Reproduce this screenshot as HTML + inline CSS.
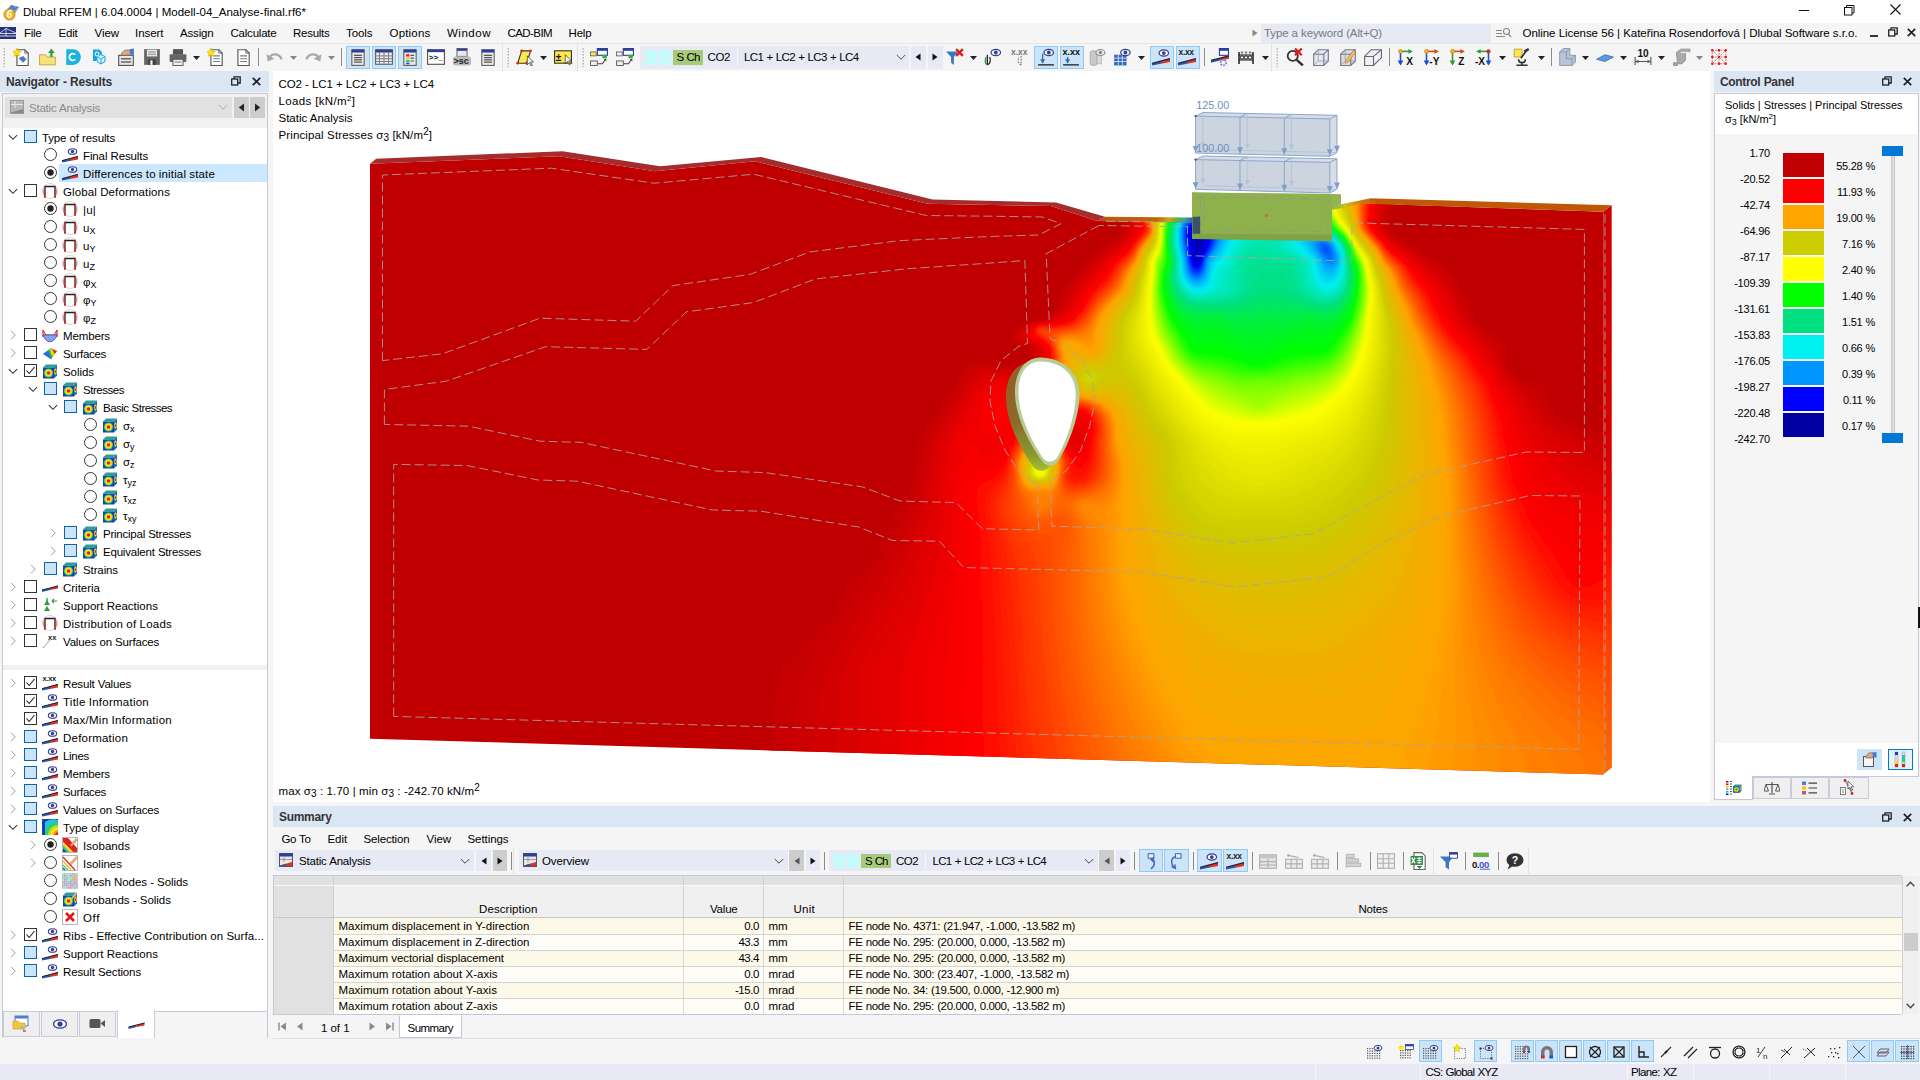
<!DOCTYPE html>
<html lang="en"><head><meta charset="utf-8"><title>Dlubal RFEM</title>
<style>
html,body{margin:0;padding:0;background:#f5f5f5;overflow:hidden}
body{width:1920px;height:1080px;position:relative;font-family:"Liberation Sans",sans-serif;font-size:11.5px;color:#000}
.t{position:absolute;white-space:pre}
.r{position:absolute;display:block}
</style></head>
<body>
<div class="r" style="left:0px;top:0px;width:1920px;height:23px;background:#fff;"></div>
<svg class="r" style="left:2px;top:2px;" width="19" height="19" viewBox="0 0 19 19"><path d="M4 9 L9 3 L17 5 L13 11Z" fill="#4a78c8"/><path d="M6 7L15 9M8 5L13 11M11 3.5L16 8" stroke="#c8d8f0" stroke-width="0.6"/><circle cx="7.5" cy="12.5" r="5.6" fill="#f2b61a" stroke="#b07a00" stroke-width="0.7"/><text x="4.6" y="16.3" font-size="10" font-weight="700" font-style="italic" font-family="Liberation Sans, sans-serif" fill="#fff">6</text></svg>
<span class="t" style="left:23px;top:3.5px;height:16px;line-height:16px;letter-spacing:0.018px;word-spacing:-0.018px;">Dlubal RFEM | 6.04.0004 | Modell-04_Analyse-final.rf6*</span>
<svg class="r" style="left:1799px;top:10px;" width="11" height="2" viewBox="0 0 11 2"><path d="M0 0.5H10" stroke="#111" stroke-width="1"/></svg>
<svg class="r" style="left:1844px;top:5px;" width="11" height="11" viewBox="0 0 11 11"><rect x="0.5" y="2.5" width="7.5" height="7.5" fill="none" stroke="#111"/><path d="M2.5 2.5V0.5H10V8H8" fill="none" stroke="#111"/></svg>
<svg class="r" style="left:1890px;top:4px;" width="11" height="11" viewBox="0 0 11 11"><path d="M0.5 0.5L10.5 10.5M10.5 0.5L0.5 10.5" stroke="#111" stroke-width="1.1"/></svg>
<div class="r" style="left:0px;top:23px;width:1920px;height:21px;background:#f5f5f5;"></div>
<div class="r" style="left:0px;top:43px;width:1920px;height:1px;background:#e6e6e6;"></div>
<svg class="r" style="left:0px;top:27px;" width="16" height="12" viewBox="0 0 16 12"><rect width="16" height="12" fill="#24327e"/><path d="M0 6.5H16M0 9H16" stroke="#fff" stroke-width="0.8"/><path d="M0 6L6 1.5L16 6M6 1V9" stroke="#fff" stroke-width="0.7" fill="none"/></svg>
<span class="t" style="left:24px;top:25.0px;height:16px;line-height:16px;letter-spacing:-0.258px;">File</span>
<span class="t" style="left:58.5px;top:25.0px;height:16px;line-height:16px;letter-spacing:-0.207px;">Edit</span>
<span class="t" style="left:94.5px;top:25.0px;height:16px;line-height:16px;letter-spacing:-0.055px;">View</span>
<span class="t" style="left:135px;top:25.0px;height:16px;line-height:16px;letter-spacing:-0.044px;">Insert</span>
<span class="t" style="left:180px;top:25.0px;height:16px;line-height:16px;letter-spacing:-0.172px;">Assign</span>
<span class="t" style="left:230.5px;top:25.0px;height:16px;line-height:16px;letter-spacing:-0.217px;">Calculate</span>
<span class="t" style="left:293px;top:25.0px;height:16px;line-height:16px;letter-spacing:-0.266px;">Results</span>
<span class="t" style="left:346px;top:25.0px;height:16px;line-height:16px;letter-spacing:-0.072px;">Tools</span>
<span class="t" style="left:389.5px;top:25.0px;height:16px;line-height:16px;letter-spacing:0.194px;">Options</span>
<span class="t" style="left:447px;top:25.0px;height:16px;line-height:16px;letter-spacing:0.516px;">Window</span>
<span class="t" style="left:507.5px;top:25.0px;height:16px;line-height:16px;letter-spacing:-0.580px;">CAD-BIM</span>
<span class="t" style="left:568.5px;top:25.0px;height:16px;line-height:16px;letter-spacing:-0.164px;">Help</span>
<svg class="r" style="left:1252px;top:29px;" width="6" height="8" viewBox="0 0 6 8"><path d="M0.5 0.5V7.5L5.5 4Z" fill="#888"/></svg>
<div class="r" style="left:1261px;top:24px;width:230px;height:19px;background:#e7e9f4;"></div>
<span class="t" style="left:1264px;top:25.0px;height:16px;line-height:16px;color:#7a7a7a;letter-spacing:-0.131px;word-spacing:0.131px;">Type a keyword (Alt+Q)</span>
<svg class="r" style="left:1496px;top:27px;" width="16" height="12" viewBox="0 0 16 12"><path d="M0 3.5H6M0 6.5H6M0 9.5H9" stroke="#888" stroke-width="1"/><circle cx="10.5" cy="4.5" r="3" fill="none" stroke="#888" stroke-width="1.1"/><path d="M12.5 7L15 10" stroke="#888" stroke-width="1.2"/></svg>
<span class="t" style="left:1522.5px;top:25.0px;height:16px;line-height:16px;letter-spacing:-0.048px;word-spacing:0.048px;">Online License 56 | Kateřina Rosendorfová | Dlubal Software s.r.o.</span>
<svg class="r" style="left:1870px;top:35px;" width="8" height="3" viewBox="0 0 8 3"><path d="M0 1H8" stroke="#222" stroke-width="1.8"/></svg>
<svg class="r" style="left:1888px;top:27px;" width="10" height="10" viewBox="0 0 10 10"><rect x="0.7" y="3" width="6" height="6" fill="none" stroke="#222" stroke-width="1.3"/><path d="M3 3V0.8H9.2V7H7" fill="none" stroke="#222" stroke-width="1.3"/></svg>
<svg class="r" style="left:1907px;top:28px;" width="9" height="9" viewBox="0 0 9 9"><path d="M0.8 0.8L8.2 8.2M8.2 0.8L0.8 8.2" stroke="#222" stroke-width="1.7"/></svg>
<div class="r" style="left:0px;top:44px;width:1920px;height:27px;background:#f5f5f5;"></div>
<svg class="r" style="left:3px;top:47px;" width="3" height="20" viewBox="0 0 3 20"><rect x="0.5" y="1" width="1.5" height="1.5" fill="#b5b5b5"/><rect x="0.5" y="4" width="1.5" height="1.5" fill="#b5b5b5"/><rect x="0.5" y="7" width="1.5" height="1.5" fill="#b5b5b5"/><rect x="0.5" y="10" width="1.5" height="1.5" fill="#b5b5b5"/><rect x="0.5" y="13" width="1.5" height="1.5" fill="#b5b5b5"/><rect x="0.5" y="16" width="1.5" height="1.5" fill="#b5b5b5"/><rect x="0.5" y="19" width="1.5" height="1.5" fill="#b5b5b5"/></svg>
<svg class="r" style="left:13.0px;top:48.0px;" width="18" height="18" viewBox="0 0 16 16"><path d="M3.5 1.5H10.5L13.5 4.5V15.5H3.5Z" fill="#fff" stroke="#555" stroke-width="1"/><path d="M10.5 1.5V4.5H13.5" fill="none" stroke="#555" stroke-width="0.8"/><path d="M3.5 0 L4.6 2.6 L7.5 3 L5.3 4.8 L6 7.5 L3.5 6 L1 7.5 L1.7 4.8 L-0.5 3 L2.4 2.6Z" fill="#ffe600" stroke="#c9a800" stroke-width="0.4"/><path d="M5 9L9 7L12 10L9 13Z" fill="#4a78c8"/></svg>
<svg class="r" style="left:39.0px;top:48.0px;" width="18" height="18" viewBox="0 0 16 16"><path d="M0.5 6H6L7.5 8H14.5V15H0.5Z" fill="#f6e27a" stroke="#b89a2a" stroke-width="0.7"/><path d="M11 8V3" stroke="#2e9c3e" stroke-width="2"/><path d="M8 4.5L11 0.5L14 4.5Z" fill="#2e9c3e"/></svg>
<svg class="r" style="left:64.0px;top:48.0px;" width="18" height="18" viewBox="0 0 16 16"><path d="M2 1H8A7 7 0 0 1 8 15H2Z" fill="#18b4e0"/><path d="M10 6A3 3 0 1 0 10 10" fill="none" stroke="#fff" stroke-width="1.6"/></svg>
<svg class="r" style="left:91.0px;top:49.0px;" width="18" height="16" viewBox="0 0 16 16"><path d="M1 0.5H7A5 5 0 0 1 10 5L4 12H1Z" fill="#18a4e0"/><path d="M9 5.5L13 7.5V12.5L9 15L5 12.5V7.5Z" fill="#d8f2fa" stroke="#18a4e0" stroke-width="1"/><path d="M5 7.5L9 10L13 7.5M9 10V15" stroke="#18a4e0" stroke-width="0.9" fill="none"/><circle cx="5" cy="5" r="2" fill="none" stroke="#fff"/></svg>
<svg class="r" style="left:117.0px;top:48.0px;" width="18" height="18" viewBox="0 0 16 16"><rect x="1.5" y="6.5" width="13" height="9" fill="#e8e8e8" stroke="#555"/><path d="M3.5 9.5H12.5M3.5 12.5H12.5" stroke="#666" stroke-width="1.4"/><path d="M4 5C6 1 10 1 13 3L11 6.5H4Z" fill="#d8a888" stroke="#86563a" stroke-width="0.6"/><path d="M11 1L15 0.5V6H12Z" fill="#4a78c8"/></svg>
<svg class="r" style="left:143.0px;top:48.0px;" width="18" height="18" viewBox="0 0 16 16"><path d="M1 1H15V15H1Z" fill="#666"/><rect x="3.5" y="1.5" width="9" height="6" fill="#e8e8e8"/><path d="M4.5 3.5H11.5M4.5 5.5H11.5" stroke="#888"/><rect x="4.5" y="10" width="7" height="5" fill="#444"/><rect x="6.5" y="11" width="2" height="4" fill="#eee"/></svg>
<svg class="r" style="left:169.0px;top:48.0px;" width="18" height="18" viewBox="0 0 16 16"><rect x="3.5" y="1" width="9" height="5" fill="#555"/><rect x="0.5" y="5.5" width="15" height="7" rx="1" fill="#666"/><rect x="3.5" y="10" width="9" height="5.5" fill="#eee" stroke="#555" stroke-width="0.8"/><path d="M5 12.5H11" stroke="#888"/></svg>
<svg class="r" style="left:192.5px;top:55.5px;" width="7" height="4" viewBox="0 0 7 4"><path d="M0 0H7L3.5 4Z" fill="#222"/></svg>
<svg class="r" style="left:207.0px;top:48.0px;" width="18" height="18" viewBox="0 0 16 16"><path d="M3.5 1.5H10.5L13.5 4.5V15.5H3.5Z" fill="#fff" stroke="#555" stroke-width="1"/><path d="M10.5 1.5V4.5H13.5" fill="none" stroke="#555" stroke-width="0.8"/><path d="M5.5 7H11.5M5.5 9.5H11.5M5.5 12H11.5" stroke="#777" stroke-width="1"/><path d="M3.5 0 L4.6 2.6 L7.5 3 L5.3 4.8 L6 7.5 L3.5 6 L1 7.5 L1.7 4.8 L-0.5 3 L2.4 2.6Z" fill="#ffe600" stroke="#c9a800" stroke-width="0.4"/></svg>
<svg class="r" style="left:234.0px;top:48.0px;" width="18" height="18" viewBox="0 0 16 16"><path d="M3.5 1.5H10.5L13.5 4.5V15.5H3.5Z" fill="#fff" stroke="#555" stroke-width="1"/><path d="M10.5 1.5V4.5H13.5" fill="none" stroke="#555" stroke-width="0.8"/><path d="M5.5 7H11.5M5.5 9.5H11.5M5.5 12H11.5" stroke="#777" stroke-width="1"/></svg>
<div class="r" style="left:258px;top:48px;width:1px;height:18px;background:#8a8a8a;"></div>
<svg class="r" style="left:266.0px;top:48.0px;" width="18" height="18" viewBox="0 0 16 16"><path d="M2.5 10C4 4.5 11 4 14 10" fill="none" stroke="#a8a8a8" stroke-width="2"/><path d="M0.5 5.5L1.5 12L7.5 9.5Z" fill="#a8a8a8"/></svg>
<svg class="r" style="left:289.5px;top:55.5px;" width="7" height="4" viewBox="0 0 7 4"><path d="M0 0H7L3.5 4Z" fill="#888"/></svg>
<svg class="r" style="left:304.0px;top:48.0px;" width="18" height="18" viewBox="0 0 16 16"><path d="M13.5 10C12 4.5 5 4 2 10" fill="none" stroke="#a8a8a8" stroke-width="2"/><path d="M15.5 5.5L14.5 12L8.5 9.5Z" fill="#a8a8a8"/></svg>
<svg class="r" style="left:327.5px;top:55.5px;" width="7" height="4" viewBox="0 0 7 4"><path d="M0 0H7L3.5 4Z" fill="#888"/></svg>
<div class="r" style="left:341px;top:48px;width:1px;height:18px;background:#8a8a8a;"></div>
<div class="r" style="left:346px;top:46px;width:24px;height:23px;background:#cce4f7;border:1px solid #90c8f6;box-sizing:border-box;"></div>
<div class="r" style="left:372px;top:46px;width:24px;height:23px;background:#cce4f7;border:1px solid #90c8f6;box-sizing:border-box;"></div>
<div class="r" style="left:398px;top:46px;width:24px;height:23px;background:#cce4f7;border:1px solid #90c8f6;box-sizing:border-box;"></div>
<svg class="r" style="left:349.0px;top:48.0px;" width="18" height="18" viewBox="0 0 16 16"><rect x="2.5" y="1.5" width="11" height="14" fill="#e8e8e8" stroke="#666"/><rect x="2.5" y="1.5" width="11" height="2.5" fill="#2b3f9e"/><path d="M4.5 6.5H11.5M4.5 8.5H11.5M4.5 10.5H11.5M4.5 12.5H11.5" stroke="#555" stroke-width="1"/></svg>
<svg class="r" style="left:375.0px;top:48.0px;" width="18" height="18" viewBox="0 0 16 16"><rect x="0.5" y="1.5" width="15" height="13" fill="#e8e8e8" stroke="#666"/><rect x="0.5" y="1.5" width="15" height="2.5" fill="#2b3f9e"/><path d="M0.5 7H15.5M0.5 9.5H15.5M0.5 12H15.5M4 4V14.5M8 4V14.5M12 4V14.5" stroke="#777" stroke-width="0.8"/></svg>
<svg class="r" style="left:401.0px;top:48.0px;" width="18" height="18" viewBox="0 0 16 16"><rect x="2.5" y="1.5" width="11" height="14" fill="#e8e8e8" stroke="#666"/><rect x="2.5" y="1.5" width="11" height="2.5" fill="#2b3f9e"/><rect x="4.5" y="5.5" width="3" height="2" fill="#e2231a"/><rect x="4.5" y="8" width="3" height="2" fill="#ffd21a"/><rect x="4.5" y="10.5" width="3" height="2" fill="#2fd06a"/><rect x="4.5" y="13" width="3" height="1.5" fill="#2a55b8"/><path d="M8.5 6.5H11.5M8.5 9H11.5M8.5 11.5H11.5" stroke="#555"/></svg>
<svg class="r" style="left:427.0px;top:48.0px;" width="18" height="18" viewBox="0 0 16 16"><rect x="0.5" y="1.5" width="15" height="13" fill="#fff" stroke="#555"/><rect x="0.5" y="1.5" width="15" height="2.2" fill="#2b3f9e"/><text x="1.5" y="10.5" font-size="7" font-weight="700" font-family="Liberation Mono, monospace" fill="#111">&gt;&gt;_</text></svg>
<svg class="r" style="left:453.0px;top:48.0px;" width="18" height="18" viewBox="0 0 16 16"><rect x="3.5" y="0.5" width="9" height="7" fill="#e8e8e8" stroke="#777"/><rect x="3.5" y="0.5" width="9" height="2" fill="#2b3f9e"/><rect x="0" y="7.5" width="16" height="8" rx="2" fill="#bbb"/><text x="0.5" y="14.5" font-size="8" font-weight="700" font-family="Liberation Sans, sans-serif" fill="#222">&gt;sc</text></svg>
<svg class="r" style="left:479.0px;top:48.0px;" width="18" height="18" viewBox="0 0 16 16"><rect x="2.5" y="1.5" width="11" height="14" fill="#e8e8e8" stroke="#666"/><rect x="2.5" y="1.5" width="11" height="2.5" fill="#2b3f9e"/><path d="M4.5 6.5H11.5M4.5 8.5H11.5M4.5 10.5H11.5M4.5 12.5H11.5" stroke="#555" stroke-width="1"/></svg>
<div class="r" style="left:502px;top:44px;width:1px;height:27px;background:#e2e2e2;"></div>
<svg class="r" style="left:507px;top:47px;" width="3" height="20" viewBox="0 0 3 20"><rect x="0.5" y="1" width="1.5" height="1.5" fill="#b5b5b5"/><rect x="0.5" y="4" width="1.5" height="1.5" fill="#b5b5b5"/><rect x="0.5" y="7" width="1.5" height="1.5" fill="#b5b5b5"/><rect x="0.5" y="10" width="1.5" height="1.5" fill="#b5b5b5"/><rect x="0.5" y="13" width="1.5" height="1.5" fill="#b5b5b5"/><rect x="0.5" y="16" width="1.5" height="1.5" fill="#b5b5b5"/><rect x="0.5" y="19" width="1.5" height="1.5" fill="#b5b5b5"/></svg>
<svg class="r" style="left:516.0px;top:48.0px;" width="18" height="18" viewBox="0 0 16 16"><path d="M5 2.5L13 2.5L9.5 13.5L1.5 13.5Z" fill="#ffe94a" stroke="#333" stroke-width="1"/><circle cx="5" cy="2.5" r="1.2" fill="#d22"/><circle cx="13" cy="2.5" r="1.2" fill="#d22"/><circle cx="9.5" cy="13.5" r="1.2" fill="#d22"/><circle cx="1.5" cy="13.5" r="1.2" fill="#d22"/><path d="M10 7V15L12 13L13.5 16L14.5 15.5L13 12.5H15.5Z" fill="#fff" stroke="#222" stroke-width="0.6"/></svg>
<svg class="r" style="left:539.5px;top:55.5px;" width="7" height="4" viewBox="0 0 7 4"><path d="M0 0H7L3.5 4Z" fill="#222"/></svg>
<svg class="r" style="left:554.0px;top:48.0px;" width="18" height="18" viewBox="0 0 16 16"><rect x="0.5" y="2.5" width="15" height="11" fill="#ffe94a" stroke="#333" stroke-width="1"/><text x="1.5" y="11.5" font-size="9" font-weight="700" font-family="Liberation Sans, sans-serif" fill="#111">±</text><path d="M10 6V14L12 12L13.5 15L14.5 14.5L13 11.5H15.5Z" fill="#fff" stroke="#222" stroke-width="0.6"/></svg>
<div class="r" style="left:577px;top:44px;width:1px;height:27px;background:#e2e2e2;"></div>
<svg class="r" style="left:582px;top:47px;" width="3" height="20" viewBox="0 0 3 20"><rect x="0.5" y="1" width="1.5" height="1.5" fill="#b5b5b5"/><rect x="0.5" y="4" width="1.5" height="1.5" fill="#b5b5b5"/><rect x="0.5" y="7" width="1.5" height="1.5" fill="#b5b5b5"/><rect x="0.5" y="10" width="1.5" height="1.5" fill="#b5b5b5"/><rect x="0.5" y="13" width="1.5" height="1.5" fill="#b5b5b5"/><rect x="0.5" y="16" width="1.5" height="1.5" fill="#b5b5b5"/><rect x="0.5" y="19" width="1.5" height="1.5" fill="#b5b5b5"/></svg>
<svg class="r" style="left:590.0px;top:48.0px;" width="18" height="18" viewBox="0 0 16 16"><rect x="6.5" y="0.5" width="9" height="6" fill="#fff" stroke="#2b3f9e"/><rect x="6.5" y="0.5" width="9" height="2" fill="#2b3f9e"/><rect x="11" y="6" width="4" height="3" fill="#2fb04a"/><rect x="0.5" y="3.5" width="5" height="3.5" fill="#ffe94a" stroke="#555" stroke-width="0.7"/><rect x="0.5" y="11.5" width="6" height="4" fill="#eee" stroke="#555" stroke-width="0.8"/><path d="M7 14H11L14 10" fill="none" stroke="#444" stroke-width="1"/><path d="M12 9.5H14.5V12Z" fill="#444"/></svg>
<svg class="r" style="left:616.0px;top:48.0px;" width="18" height="18" viewBox="0 0 16 16"><rect x="6.5" y="0.5" width="9" height="6" fill="#fff" stroke="#2b3f9e"/><rect x="6.5" y="0.5" width="9" height="2" fill="#2b3f9e"/><rect x="11" y="6" width="4" height="3" fill="#2fb04a"/><rect x="0.5" y="3.5" width="5" height="3.5" fill="#eee" stroke="#555" stroke-width="0.7"/><rect x="0.5" y="11.5" width="6" height="4" fill="#eee" stroke="#555" stroke-width="0.8"/><path d="M7 14H11L14 10" fill="none" stroke="#444" stroke-width="1"/><path d="M12 9.5H14.5V12Z" fill="#444"/></svg>
<div class="r" style="left:640px;top:46px;width:269px;height:23px;background:#e7e9f4;"></div>
<div class="r" style="left:645px;top:50px;width:12px;height:15px;background:#c5fbfb;"></div>
<div class="r" style="left:659px;top:50px;width:12px;height:15px;background:#c5fbfb;"></div>
<div class="r" style="left:673px;top:50px;width:30px;height:15px;background:#a9ca7a;"></div>
<span class="t" style="left:676.5px;top:49.0px;height:16px;line-height:16px;letter-spacing:-0.859px;word-spacing:0.859px;">S Ch</span>
<span class="t" style="left:707.5px;top:49.0px;height:16px;line-height:16px;letter-spacing:-0.385px;">CO2</span>
<div class="r" style="left:737px;top:49px;width:1px;height:17px;background:#f8f8fc;"></div>
<span class="t" style="left:744px;top:49.0px;height:16px;line-height:16px;letter-spacing:-0.615px;word-spacing:0.615px;">LC1 + LC2 + LC3 + LC4</span>
<svg class="r" style="left:896px;top:54px;" width="10" height="7" viewBox="0 0 10 7"><path d="M0.8 1L5 5.2L9.2 1" fill="none" stroke="#555" stroke-width="1"/></svg>
<div class="r" style="left:910.5px;top:46px;width:15.5px;height:23px;background:#e7e9f4;"></div>
<div class="r" style="left:927.5px;top:46px;width:15px;height:23px;background:#e7e9f4;"></div>
<svg class="r" style="left:915px;top:53px;" width="6" height="8" viewBox="0 0 6 8"><path d="M5.5 0.5V7.5L0.5 4Z" fill="#111"/></svg>
<svg class="r" style="left:932px;top:53px;" width="6" height="8" viewBox="0 0 6 8"><path d="M0.5 0.5V7.5L5.5 4Z" fill="#111"/></svg>
<svg class="r" style="left:946.0px;top:48.0px;" width="18" height="18" viewBox="0 0 16 16"><path d="M0 3H11L7 8V15L4.5 13V8Z" fill="#3a78c8"/><path d="M9 1L15 7M15 1L9 7" stroke="#e01818" stroke-width="2"/></svg>
<svg class="r" style="left:969.5px;top:55.5px;" width="7" height="4" viewBox="0 0 7 4"><path d="M0 0H7L3.5 4Z" fill="#222"/></svg>
<svg class="r" style="left:984.0px;top:48.0px;" width="18" height="18" viewBox="0 0 16 16"><path d="M3 6V15M3 15C6 14 6 10 5 8" fill="none" stroke="#222" stroke-width="1.1"/><path d="M2 8C0.5 11 1 14 3 15" fill="none" stroke="#2e9c3e" stroke-width="1.3"/><ellipse cx="10.5" cy="4" rx="4.2" ry="2.8" fill="#fff" stroke="#33408f" stroke-width="1.1"/><circle cx="10.5" cy="4" r="1.7" fill="#33408f"/></svg>
<svg class="r" style="left:1011.0px;top:48.0px;" width="18" height="18" viewBox="0 0 16 16"><text x="0" y="6" font-size="7.5" font-weight="700" font-family="Liberation Sans, sans-serif" fill="#777">x.xx</text><path d="M9 7V15M9 15C6 14 6 10 7 8" fill="none" stroke="#777" stroke-width="1" stroke-dasharray="1.5 1"/></svg>
<div class="r" style="left:1034px;top:46px;width:24px;height:23px;background:#cce4f7;border:1px solid #90c8f6;box-sizing:border-box;"></div>
<div class="r" style="left:1059.5px;top:46px;width:24px;height:23px;background:#cce4f7;border:1px solid #90c8f6;box-sizing:border-box;"></div>
<svg class="r" style="left:1037.0px;top:48.0px;" width="18" height="18" viewBox="0 0 16 16"><path d="M1 15H15" stroke="#222" stroke-width="1.2"/><path d="M5 5V13" stroke="#3a68b8" stroke-width="1.2"/><path d="M2.8 10L5 14L7.2 10Z" fill="#3a68b8"/><ellipse cx="10.5" cy="4" rx="4.2" ry="2.8" fill="#fff" stroke="#33408f" stroke-width="1.1"/><circle cx="10.5" cy="4" r="1.7" fill="#33408f"/></svg>
<svg class="r" style="left:1062.0px;top:48.0px;" width="18" height="18" viewBox="0 0 16 16"><path d="M1 15H15" stroke="#222" stroke-width="1.2"/><path d="M5 8V13" stroke="#3a68b8" stroke-width="1.2"/><path d="M2.8 10L5 14L7.2 10Z" fill="#3a68b8"/><text x="0.5" y="6.5" font-size="8" font-weight="700" font-family="Liberation Sans, sans-serif" fill="#111">x.xx</text></svg>
<svg class="r" style="left:1087.5px;top:48.0px;" width="18" height="18" viewBox="0 0 16 16"><path d="M2 4C2 2 8 2 8 4V14C8 16 2 16 2 14Z" fill="#c8c8c8" stroke="#999" stroke-width="0.6"/><path d="M8 5H12V14H8Z" fill="#d8d8d8" stroke="#aaa" stroke-width="0.6"/><ellipse cx="11" cy="4" rx="4" ry="2.7" fill="#eee" stroke="#888"/><circle cx="11" cy="4" r="1.6" fill="#888"/></svg>
<svg class="r" style="left:1113.0px;top:48.0px;" width="18" height="18" viewBox="0 0 16 16"><rect x="1" y="6" width="11" height="9.5" fill="#3a68b8"/><path d="M1 9H12M1 12H12M4.7 6V15.5M8.3 6V15.5" stroke="#cfe0f8" stroke-width="0.8"/><ellipse cx="11" cy="4" rx="4.2" ry="2.8" fill="#fff" stroke="#33408f" stroke-width="1.1"/><circle cx="11" cy="4" r="1.7" fill="#33408f"/></svg>
<svg class="r" style="left:1137.5px;top:55.5px;" width="7" height="4" viewBox="0 0 7 4"><path d="M0 0H7L3.5 4Z" fill="#222"/></svg>
<div class="r" style="left:1149.5px;top:46px;width:24px;height:23px;background:#cce4f7;border:1px solid #90c8f6;box-sizing:border-box;"></div>
<div class="r" style="left:1175.5px;top:46px;width:24px;height:23px;background:#cce4f7;border:1px solid #90c8f6;box-sizing:border-box;"></div>
<svg class="r" style="left:1152.0px;top:48.0px;" width="18" height="18" viewBox="0 0 16 16"><path d="M0 13.5 L8 11.5 L8 14 L0 15.5Z" fill="#2a55b8"/><path d="M8 11.5 L16 9 L16 12.5 L8 14Z" fill="#d8322a"/><path d="M0 13.6L16 9.4" stroke="#222" stroke-width="1"/><ellipse cx="10.5" cy="4.5" rx="4.2" ry="2.8" fill="#fff" stroke="#33408f" stroke-width="1.1"/><circle cx="10.5" cy="4.5" r="1.7" fill="#33408f"/></svg>
<svg class="r" style="left:1178.0px;top:48.0px;" width="18" height="18" viewBox="0 0 16 16"><path d="M0 13.5 L8 11.5 L8 14 L0 15.5Z" fill="#2a55b8"/><path d="M8 11.5 L16 9 L16 12.5 L8 14Z" fill="#d8322a"/><path d="M0 13.6L16 9.4" stroke="#222" stroke-width="1"/><text x="0.5" y="6" font-size="7.5" font-weight="700" font-family="Liberation Sans, sans-serif" fill="#222" letter-spacing="-0.3">x.xx</text></svg>
<div class="r" style="left:1203.5px;top:48px;width:1px;height:18px;background:#8a8a8a;"></div>
<svg class="r" style="left:1211.0px;top:48.0px;" width="18" height="18" viewBox="0 0 16 16"><path d="M0 11 L8 9 L8 11 L0 13Z" fill="#2a55b8"/><path d="M8 9 L16 6.5 L16 9.5 L8 11Z" fill="#d8322a"/><path d="M0 11L16 7" stroke="#222" stroke-width="1"/><rect x="7.5" y="0.5" width="8" height="6" fill="#fff" stroke="#2b3f9e"/><rect x="7.5" y="0.5" width="8" height="2" fill="#2b3f9e"/><circle cx="11" cy="13" r="2.4" fill="none" stroke="#5a7ae0" stroke-width="1.5" stroke-dasharray="1.4 1"/></svg>
<svg class="r" style="left:1237.0px;top:48.0px;" width="18" height="18" viewBox="-1 0 18 16"><path d="M1 3V15M15 3V15" stroke="#111" stroke-width="1.4"/><path d="M1 6H15M1 11H15" stroke="#111" stroke-width="1"/><circle cx="4" cy="8.5" r="1.7" fill="#fff" stroke="#111"/><circle cx="8" cy="8.5" r="1.7" fill="#fff" stroke="#111"/><circle cx="12" cy="8.5" r="1.7" fill="#fff" stroke="#111"/><circle cx="4" cy="3.5" r="1.3" fill="#888"/><circle cx="8" cy="3.5" r="1.3" fill="#888"/><circle cx="12" cy="3.5" r="1.3" fill="#888"/></svg>
<svg class="r" style="left:1261.5px;top:55.5px;" width="7" height="4" viewBox="0 0 7 4"><path d="M0 0H7L3.5 4Z" fill="#222"/></svg>
<div class="r" style="left:1271px;top:44px;width:1px;height:27px;background:#e2e2e2;"></div>
<svg class="r" style="left:1276px;top:47px;" width="3" height="20" viewBox="0 0 3 20"><rect x="0.5" y="1" width="1.5" height="1.5" fill="#b5b5b5"/><rect x="0.5" y="4" width="1.5" height="1.5" fill="#b5b5b5"/><rect x="0.5" y="7" width="1.5" height="1.5" fill="#b5b5b5"/><rect x="0.5" y="10" width="1.5" height="1.5" fill="#b5b5b5"/><rect x="0.5" y="13" width="1.5" height="1.5" fill="#b5b5b5"/><rect x="0.5" y="16" width="1.5" height="1.5" fill="#b5b5b5"/><rect x="0.5" y="19" width="1.5" height="1.5" fill="#b5b5b5"/></svg>
<svg class="r" style="left:1286.0px;top:48.0px;" width="18" height="18" viewBox="0 0 16 16"><circle cx="6" cy="7" r="4.5" fill="none" stroke="#333" stroke-width="1.6"/><path d="M9.5 10.5L15 15.5" stroke="#333" stroke-width="2.2"/><path d="M8 0.5L14 6.5M14 0.5L8 6.5" stroke="#e01818" stroke-width="2"/></svg>
<svg class="r" style="left:1312.0px;top:48.0px;" width="18" height="18" viewBox="0 0 16 16"><path d="M1.5 5.5H10.5V15.5H1.5ZM1.5 5.5L5.5 1.5H14.5V11.5L10.5 15.5M10.5 5.5L14.5 1.5" fill="#e4e8f2" stroke="#778" stroke-width="1"/><path d="M5.5 1.5V11.5H14.5M5.5 11.5L1.5 15.5" fill="none" stroke="#99a" stroke-width="0.7"/></svg>
<svg class="r" style="left:1338.5px;top:48.0px;" width="18" height="18" viewBox="0 0 16 16"><path d="M1.5 5.5H10.5V15.5H1.5ZM1.5 5.5L5.5 1.5H14.5V11.5L10.5 15.5M10.5 5.5L14.5 1.5" fill="#dcdcdc" stroke="#778" stroke-width="1"/><path d="M5.5 1.5V11.5H14.5M5.5 11.5L1.5 15.5" fill="none" stroke="#99a" stroke-width="0.7"/><path d="M6 11L13 2L15 3.5L8 12.5L5.5 13.5Z" fill="#f2c24a" stroke="#a67" stroke-width="0.5"/></svg>
<svg class="r" style="left:1363.5px;top:48.0px;" width="18" height="18" viewBox="0 0 16 16"><path d="M0.5 7.5H8.5V15.5H0.5ZM0.5 7.5L6.5 1.5H15.5L8.5 7.5M15.5 1.5V8.5L8.5 15.5" fill="#eef0f6" stroke="#667" stroke-width="1"/></svg>
<div class="r" style="left:1389px;top:48px;width:1px;height:18px;background:#8a8a8a;"></div>
<svg class="r" style="left:1396.0px;top:48.0px;" width="18" height="18" viewBox="0 0 16 16"><path d="M4 2V14" stroke="#1f4fc8" stroke-width="1.4"/><path d="M1.5 11L4 15.5L6.5 11Z" fill="#1f4fc8"/><path d="M4 3H13" stroke="#2e9c3e" stroke-width="1.4"/><path d="M11 0.8L15 3L11 5.2Z" fill="#2e9c3e"/><circle cx="4" cy="3" r="1.8" fill="#ffb21a" stroke="#a60" stroke-width="0.4"/><text x="9" y="15.5" font-size="9" font-weight="700" font-family="Liberation Sans, sans-serif" fill="#111">X</text></svg>
<svg class="r" style="left:1422.0px;top:48.0px;" width="18" height="18" viewBox="0 0 16 16"><path d="M4 2V14" stroke="#1f4fc8" stroke-width="1.4"/><path d="M1.5 11L4 15.5L6.5 11Z" fill="#1f4fc8"/><path d="M4 3H13" stroke="#d8481a" stroke-width="1.4"/><path d="M11 0.8L15 3L11 5.2Z" fill="#d8481a"/><circle cx="4" cy="3" r="1.8" fill="#ffb21a" stroke="#a60" stroke-width="0.4"/><text x="6.5" y="15.5" font-size="9" font-weight="700" font-family="Liberation Sans, sans-serif" fill="#111">-Y</text></svg>
<svg class="r" style="left:1448.0px;top:48.0px;" width="18" height="18" viewBox="0 0 16 16"><path d="M4 2V14" stroke="#2e9c3e" stroke-width="1.4"/><path d="M1.5 11L4 15.5L6.5 11Z" fill="#2e9c3e"/><path d="M4 3H13" stroke="#d8481a" stroke-width="1.4"/><path d="M11 0.8L15 3L11 5.2Z" fill="#d8481a"/><circle cx="4" cy="3" r="1.8" fill="#ffb21a" stroke="#a60" stroke-width="0.4"/><text x="9" y="15.5" font-size="9" font-weight="700" font-family="Liberation Sans, sans-serif" fill="#111">Z</text></svg>
<svg class="r" style="left:1475.0px;top:48.0px;" width="18" height="18" viewBox="0 0 16 16"><path d="M12 2V14" stroke="#1f4fc8" stroke-width="1.4"/><path d="M9.5 11L12 15.5L14.5 11Z" fill="#1f4fc8"/><path d="M12 3H3" stroke="#2e9c3e" stroke-width="1.4"/><path d="M5 0.8L1 3L5 5.2Z" fill="#2e9c3e"/><circle cx="12" cy="3" r="1.8" fill="#d22"/><text x="0" y="15.5" font-size="9" font-weight="700" font-family="Liberation Sans, sans-serif" fill="#111">-X</text></svg>
<svg class="r" style="left:1499.0px;top:55.5px;" width="7" height="4" viewBox="0 0 7 4"><path d="M0 0H7L3.5 4Z" fill="#222"/></svg>
<svg class="r" style="left:1513.0px;top:48.0px;" width="18" height="18" viewBox="0 0 16 16"><rect x="1" y="1" width="7" height="7" fill="#ffe94a" stroke="#998a2a" stroke-width="0.6"/><path d="M13 1L7 9M5 10C5 14 11 14 11 10M3 15.5H13M8 13V15" fill="none" stroke="#333" stroke-width="1.5"/><path d="M10 3L14 1" stroke="#333" stroke-width="2"/></svg>
<svg class="r" style="left:1537.5px;top:55.5px;" width="7" height="4" viewBox="0 0 7 4"><path d="M0 0H7L3.5 4Z" fill="#222"/></svg>
<div class="r" style="left:1550.5px;top:48px;width:1px;height:18px;background:#8a8a8a;"></div>
<svg class="r" style="left:1557.5px;top:48.0px;" width="18" height="18" viewBox="0 0 16 16"><path d="M1.5 3.5L4.5 0.5H10.5V6.5H15.5V12.5L12.5 15.5H1.5Z" fill="#b8c4d8" stroke="#8894a8" stroke-width="0.8"/><path d="M1.5 3.5H7.5V9.5H12.5V15.5M7.5 3.5L10.5 0.5M12.5 9.5L15.5 6.5" fill="none" stroke="#8894a8" stroke-width="0.8"/></svg>
<svg class="r" style="left:1582.0px;top:55.5px;" width="7" height="4" viewBox="0 0 7 4"><path d="M0 0H7L3.5 4Z" fill="#222"/></svg>
<svg class="r" style="left:1596.0px;top:48.0px;" width="18" height="18" viewBox="0 0 16 16"><path d="M0.5 10L8 6L15.5 8L8 12Z" fill="#5a9ae0" stroke="#2a5aa0" stroke-width="0.6"/></svg>
<svg class="r" style="left:1620.0px;top:55.5px;" width="7" height="4" viewBox="0 0 7 4"><path d="M0 0H7L3.5 4Z" fill="#222"/></svg>
<svg class="r" style="left:1633.5px;top:48.0px;" width="18" height="18" viewBox="0 0 16 16"><text x="3" y="8" font-size="9" font-weight="700" font-family="Liberation Sans, sans-serif" fill="#111">10</text><path d="M1 8V15M15 8V15" stroke="#555"/><path d="M1 12H15" stroke="#555" stroke-width="0.9"/><path d="M1 12l3-1.5v3zM15 12l-3-1.5v3z" fill="#555"/></svg>
<svg class="r" style="left:1658.0px;top:55.5px;" width="7" height="4" viewBox="0 0 7 4"><path d="M0 0H7L3.5 4Z" fill="#222"/></svg>
<svg class="r" style="left:1672.5px;top:48.0px;" width="18" height="18" viewBox="0 0 16 16"><path d="M3 4L7 1H15V4H11V11L8 14H4V15.5H0.5V13H4Z" fill="#aaa" stroke="#777" stroke-width="0.6"/><path d="M7 4H15" stroke="#eee" stroke-width="1"/></svg>
<svg class="r" style="left:1696px;top:55.5px;" width="7" height="4" viewBox="0 0 7 4"><path d="M0 0H7L3.5 4Z" fill="#888"/></svg>
<svg class="r" style="left:1710.0px;top:48.0px;" width="18" height="18" viewBox="0 0 16 16"><path d="M2 2H14V14H2ZM2 8H14M8 2V14M2 2L14 14M14 2L2 14" fill="none" stroke="#c44" stroke-width="0.7" stroke-dasharray="1.5 1"/><circle cx="2" cy="2" r="1.1" fill="#e01818"/><circle cx="2" cy="8" r="1.1" fill="#e01818"/><circle cx="2" cy="14" r="1.1" fill="#e01818"/><circle cx="8" cy="2" r="1.1" fill="#e01818"/><circle cx="8" cy="8" r="1.1" fill="#e01818"/><circle cx="8" cy="14" r="1.1" fill="#e01818"/><circle cx="14" cy="2" r="1.1" fill="#e01818"/><circle cx="14" cy="8" r="1.1" fill="#e01818"/><circle cx="14" cy="14" r="1.1" fill="#e01818"/></svg>
<div class="r" style="left:0px;top:71px;width:270px;height:970px;background:#f5f5f5;"></div>
<div class="r" style="left:0px;top:71px;width:269px;height:21px;background:#dbe6f4;"></div>
<span class="t" style="left:6px;top:73.5px;height:16px;line-height:16px;font-size:12px;font-weight:700;color:#333;letter-spacing:-0.198px;word-spacing:0.198px;">Navigator - Results</span>
<svg class="r" style="left:231px;top:76px;" width="10" height="10" viewBox="0 0 10 10"><rect x="0.7" y="3" width="6" height="6" fill="none" stroke="#222" stroke-width="1.3"/><path d="M3 3V0.8H9.2V7H7" fill="none" stroke="#222" stroke-width="1.3"/></svg>
<svg class="r" style="left:252px;top:77px;" width="9" height="9" viewBox="0 0 9 9"><path d="M0.8 0.8L8.2 8.2M8.2 0.8L0.8 8.2" stroke="#222" stroke-width="1.7"/></svg>
<div class="r" style="left:2px;top:93px;width:266px;height:945px;background:#fff;border:1px solid #c5c7d9;box-sizing:border-box;"></div>
<div class="r" style="left:3px;top:94px;width:264px;height:34px;background:#f1f1f1;"></div>
<div class="r" style="left:5px;top:97px;width:227px;height:21px;background:#e1e1e1;"></div>
<div class="r" style="left:234px;top:97px;width:15px;height:21px;background:#cdcdcd;"></div>
<div class="r" style="left:250px;top:97px;width:15px;height:21px;background:#cdcdcd;"></div>
<svg class="r" style="left:238px;top:103px;" width="7" height="9" viewBox="0 0 7 9"><path d="M6 0.5V8.5L0.8 4.5Z" fill="#222"/></svg>
<svg class="r" style="left:254px;top:103px;" width="7" height="9" viewBox="0 0 7 9"><path d="M1 0.5V8.5L6.2 4.5Z" fill="#222"/></svg>
<svg class="r" style="left:218px;top:104px;" width="10" height="7" viewBox="0 0 10 7"><path d="M0.8 1L5 5.2L9.2 1" fill="none" stroke="#aaa" stroke-width="1"/></svg>
<svg class="r" style="left:10px;top:100px;" width="14" height="14" viewBox="0 0 14 14"><rect x="0.5" y="0.5" width="13" height="13" fill="#b8b8b8" stroke="#999"/><path d="M1 4.5H13M5 1V8" stroke="#e8e8e8" stroke-width="1"/><path d="M1 12.5L13 9V13H1Z" fill="#888"/></svg>
<span class="t" style="left:29px;top:99.5px;height:16px;line-height:16px;color:#8a8a8a;letter-spacing:-0.225px;word-spacing:0.225px;">Static Analysis</span>
<div class="r" style="left:3px;top:665px;width:264px;height:5px;background:#f1f1f1;"></div>
<svg class="r" style="left:7px;top:131px;" width="12" height="12" viewBox="0 0 16 16"><path d="M2.5 5.5 L8 11 L13.5 5.5" fill="none" stroke="#333" stroke-width="1.4"/></svg>
<svg class="r" style="left:24px;top:130px;" width="13" height="13" viewBox="0 0 13 13"><rect x="0.5" y="0.5" width="12" height="12" fill="#cce4f7" stroke="#0a64ad" stroke-width="1"/></svg>
<span class="t" style="left:42px;top:130.0px;height:16px;line-height:16px;letter-spacing:-0.138px;word-spacing:0.138px;">Type of results</span>
<svg class="r" style="left:44px;top:148px;" width="13" height="13" viewBox="0 0 13 13"><circle cx="6.5" cy="6.5" r="6" fill="#fff" stroke="#333" stroke-width="1"/></svg>
<svg class="r" style="left:62px;top:147px;" width="16" height="16" viewBox="0 0 16 16"><path d="M0 13.5 L8 11.5 L8 14 L0 15.5Z" fill="#2a55b8"/><path d="M8 11.5 L16 9 L16 12.5 L8 14Z" fill="#d8322a"/><path d="M0 13.6L16 9.4" stroke="#222" stroke-width="1"/><ellipse cx="10.5" cy="4.5" rx="4.2" ry="2.8" fill="#fff" stroke="#33408f" stroke-width="1.1"/><circle cx="10.5" cy="4.5" r="1.7" fill="#33408f"/></svg>
<span class="t" style="left:83px;top:148.0px;height:16px;line-height:16px;letter-spacing:-0.122px;word-spacing:0.122px;">Final Results</span>
<div class="r" style="left:59px;top:164px;width:208px;height:18px;background:#cce8ff;"></div>
<svg class="r" style="left:44px;top:166px;" width="13" height="13" viewBox="0 0 13 13"><circle cx="6.5" cy="6.5" r="6" fill="#fff" stroke="#333" stroke-width="1"/><circle cx="6.5" cy="6.5" r="3.2" fill="#222"/></svg>
<svg class="r" style="left:62px;top:165px;" width="16" height="16" viewBox="0 0 16 16"><path d="M0 13.5 L8 11.5 L8 14 L0 15.5Z" fill="#2a55b8"/><path d="M8 11.5 L16 9 L16 12.5 L8 14Z" fill="#d8322a"/><path d="M0 13.6L16 9.4" stroke="#222" stroke-width="1"/><ellipse cx="10.5" cy="4.5" rx="4.2" ry="2.8" fill="#fff" stroke="#33408f" stroke-width="1.1"/><circle cx="10.5" cy="4.5" r="1.7" fill="#33408f"/></svg>
<span class="t" style="left:83px;top:166.0px;height:16px;line-height:16px;letter-spacing:0.149px;word-spacing:-0.149px;">Differences to initial state</span>
<svg class="r" style="left:7px;top:185px;" width="12" height="12" viewBox="0 0 16 16"><path d="M2.5 5.5 L8 11 L13.5 5.5" fill="none" stroke="#333" stroke-width="1.4"/></svg>
<svg class="r" style="left:24px;top:184px;" width="13" height="13" viewBox="0 0 13 13"><rect x="0.5" y="0.5" width="12" height="12" fill="#fff" stroke="#333" stroke-width="1"/></svg>
<svg class="r" style="left:42px;top:183px;" width="16" height="16" viewBox="0 0 16 16"><ellipse cx="8" cy="8" rx="7.5" ry="7.5" fill="none" stroke="#bbb" stroke-width="0.6"/><path d="M3 14V3.5H13V14" fill="none" stroke="#222" stroke-width="1.3"/><path d="M3 14c-1.5-4-1.5-7 0-10.5M13 14c1.5-4 1.5-7 0-10.5" fill="none" stroke="#d22" stroke-width="1"/><circle cx="3" cy="14" r="1" fill="#d22"/><circle cx="13" cy="14" r="1" fill="#d22"/></svg>
<span class="t" style="left:63px;top:184.0px;height:16px;line-height:16px;letter-spacing:0.121px;word-spacing:-0.121px;">Global Deformations</span>
<svg class="r" style="left:44px;top:202px;" width="13" height="13" viewBox="0 0 13 13"><circle cx="6.5" cy="6.5" r="6" fill="#fff" stroke="#333" stroke-width="1"/><circle cx="6.5" cy="6.5" r="3.2" fill="#222"/></svg>
<svg class="r" style="left:62px;top:201px;" width="16" height="16" viewBox="0 0 16 16"><ellipse cx="8" cy="8" rx="7.5" ry="7.5" fill="none" stroke="#bbb" stroke-width="0.6"/><path d="M3 14V3.5H13V14" fill="none" stroke="#222" stroke-width="1.3"/><path d="M3 14c-1.5-4-1.5-7 0-10.5M13 14c1.5-4 1.5-7 0-10.5" fill="none" stroke="#d22" stroke-width="1"/><circle cx="3" cy="14" r="1" fill="#d22"/><circle cx="13" cy="14" r="1" fill="#d22"/></svg>
<span class="t" style="left:83px;top:202.0px;height:16px;line-height:16px;letter-spacing:0.208px;">|u|</span>
<svg class="r" style="left:44px;top:220px;" width="13" height="13" viewBox="0 0 13 13"><circle cx="6.5" cy="6.5" r="6" fill="#fff" stroke="#333" stroke-width="1"/></svg>
<svg class="r" style="left:62px;top:219px;" width="16" height="16" viewBox="0 0 16 16"><ellipse cx="8" cy="8" rx="7.5" ry="7.5" fill="none" stroke="#bbb" stroke-width="0.6"/><path d="M3 14V3.5H13V14" fill="none" stroke="#222" stroke-width="1.3"/><path d="M3 14c-1.5-4-1.5-7 0-10.5M13 14c1.5-4 1.5-7 0-10.5" fill="none" stroke="#d22" stroke-width="1"/><circle cx="3" cy="14" r="1" fill="#d22"/><circle cx="13" cy="14" r="1" fill="#d22"/></svg>
<span class="t" style="left:83px;top:220.0px;height:16px;line-height:16px;">u<span style="font-size:9px;position:relative;top:2px">X</span></span>
<svg class="r" style="left:44px;top:238px;" width="13" height="13" viewBox="0 0 13 13"><circle cx="6.5" cy="6.5" r="6" fill="#fff" stroke="#333" stroke-width="1"/></svg>
<svg class="r" style="left:62px;top:237px;" width="16" height="16" viewBox="0 0 16 16"><ellipse cx="8" cy="8" rx="7.5" ry="7.5" fill="none" stroke="#bbb" stroke-width="0.6"/><path d="M3 14V3.5H13V14" fill="none" stroke="#222" stroke-width="1.3"/><path d="M3 14c-1.5-4-1.5-7 0-10.5M13 14c1.5-4 1.5-7 0-10.5" fill="none" stroke="#d22" stroke-width="1"/><circle cx="3" cy="14" r="1" fill="#d22"/><circle cx="13" cy="14" r="1" fill="#d22"/></svg>
<span class="t" style="left:83px;top:238.0px;height:16px;line-height:16px;">u<span style="font-size:9px;position:relative;top:2px">Y</span></span>
<svg class="r" style="left:44px;top:256px;" width="13" height="13" viewBox="0 0 13 13"><circle cx="6.5" cy="6.5" r="6" fill="#fff" stroke="#333" stroke-width="1"/></svg>
<svg class="r" style="left:62px;top:255px;" width="16" height="16" viewBox="0 0 16 16"><ellipse cx="8" cy="8" rx="7.5" ry="7.5" fill="none" stroke="#bbb" stroke-width="0.6"/><path d="M3 14V3.5H13V14" fill="none" stroke="#222" stroke-width="1.3"/><path d="M3 14c-1.5-4-1.5-7 0-10.5M13 14c1.5-4 1.5-7 0-10.5" fill="none" stroke="#d22" stroke-width="1"/><circle cx="3" cy="14" r="1" fill="#d22"/><circle cx="13" cy="14" r="1" fill="#d22"/></svg>
<span class="t" style="left:83px;top:256.0px;height:16px;line-height:16px;">u<span style="font-size:9px;position:relative;top:2px">Z</span></span>
<svg class="r" style="left:44px;top:274px;" width="13" height="13" viewBox="0 0 13 13"><circle cx="6.5" cy="6.5" r="6" fill="#fff" stroke="#333" stroke-width="1"/></svg>
<svg class="r" style="left:62px;top:273px;" width="16" height="16" viewBox="0 0 16 16"><ellipse cx="8" cy="8" rx="7.5" ry="7.5" fill="none" stroke="#bbb" stroke-width="0.6"/><path d="M3 14V3.5H13V14" fill="none" stroke="#222" stroke-width="1.3"/><path d="M3 14c-1.5-4-1.5-7 0-10.5M13 14c1.5-4 1.5-7 0-10.5" fill="none" stroke="#d22" stroke-width="1"/><circle cx="3" cy="14" r="1" fill="#d22"/><circle cx="13" cy="14" r="1" fill="#d22"/></svg>
<span class="t" style="left:83px;top:274.0px;height:16px;line-height:16px;">φ<span style="font-size:9px;position:relative;top:2px">X</span></span>
<svg class="r" style="left:44px;top:292px;" width="13" height="13" viewBox="0 0 13 13"><circle cx="6.5" cy="6.5" r="6" fill="#fff" stroke="#333" stroke-width="1"/></svg>
<svg class="r" style="left:62px;top:291px;" width="16" height="16" viewBox="0 0 16 16"><ellipse cx="8" cy="8" rx="7.5" ry="7.5" fill="none" stroke="#bbb" stroke-width="0.6"/><path d="M3 14V3.5H13V14" fill="none" stroke="#222" stroke-width="1.3"/><path d="M3 14c-1.5-4-1.5-7 0-10.5M13 14c1.5-4 1.5-7 0-10.5" fill="none" stroke="#d22" stroke-width="1"/><circle cx="3" cy="14" r="1" fill="#d22"/><circle cx="13" cy="14" r="1" fill="#d22"/></svg>
<span class="t" style="left:83px;top:292.0px;height:16px;line-height:16px;">φ<span style="font-size:9px;position:relative;top:2px">Y</span></span>
<svg class="r" style="left:44px;top:310px;" width="13" height="13" viewBox="0 0 13 13"><circle cx="6.5" cy="6.5" r="6" fill="#fff" stroke="#333" stroke-width="1"/></svg>
<svg class="r" style="left:62px;top:309px;" width="16" height="16" viewBox="0 0 16 16"><ellipse cx="8" cy="8" rx="7.5" ry="7.5" fill="none" stroke="#bbb" stroke-width="0.6"/><path d="M3 14V3.5H13V14" fill="none" stroke="#222" stroke-width="1.3"/><path d="M3 14c-1.5-4-1.5-7 0-10.5M13 14c1.5-4 1.5-7 0-10.5" fill="none" stroke="#d22" stroke-width="1"/><circle cx="3" cy="14" r="1" fill="#d22"/><circle cx="13" cy="14" r="1" fill="#d22"/></svg>
<span class="t" style="left:83px;top:310.0px;height:16px;line-height:16px;">φ<span style="font-size:9px;position:relative;top:2px">Z</span></span>
<svg class="r" style="left:7px;top:329px;" width="12" height="12" viewBox="0 0 16 16"><path d="M5.5 2.5 L11 8 L5.5 13.5" fill="none" stroke="#999" stroke-width="1.3"/></svg>
<svg class="r" style="left:24px;top:328px;" width="13" height="13" viewBox="0 0 13 13"><rect x="0.5" y="0.5" width="12" height="12" fill="#fff" stroke="#333" stroke-width="1"/></svg>
<svg class="r" style="left:42px;top:327px;" width="16" height="16" viewBox="0 0 16 16"><path d="M1 3V10M15 3V10" stroke="#d22" stroke-width="1.2"/><path d="M1 8H15" stroke="#555" stroke-width="1"/><path d="M1 8 C4 17 12 17 15 8Z" fill="#8aa0ea" stroke="#3a55c8" stroke-width="0.8"/><path d="M1 3L4 8M15 3L12 8" stroke="#d22" stroke-width="1"/></svg>
<span class="t" style="left:63px;top:328.0px;height:16px;line-height:16px;letter-spacing:-0.134px;">Members</span>
<svg class="r" style="left:7px;top:347px;" width="12" height="12" viewBox="0 0 16 16"><path d="M5.5 2.5 L11 8 L5.5 13.5" fill="none" stroke="#999" stroke-width="1.3"/></svg>
<svg class="r" style="left:24px;top:346px;" width="13" height="13" viewBox="0 0 13 13"><rect x="0.5" y="0.5" width="12" height="12" fill="#fff" stroke="#333" stroke-width="1"/></svg>
<svg class="r" style="left:42px;top:345px;" width="16" height="16" viewBox="0 0 16 16"><path d="M1 9 L9 3 L15 6 L9 14Z" fill="#36c24a"/><path d="M1 9 L6 5.5 L10 13 L9 14Z" fill="#2a6fd6"/><path d="M8 4 L12 4.5 L13 9 L10 11Z" fill="#ffd21a"/><path d="M10 4.3 L15 6 L12.5 9Z" fill="#e2331a"/></svg>
<span class="t" style="left:63px;top:346.0px;height:16px;line-height:16px;letter-spacing:-0.299px;">Surfaces</span>
<svg class="r" style="left:7px;top:365px;" width="12" height="12" viewBox="0 0 16 16"><path d="M2.5 5.5 L8 11 L13.5 5.5" fill="none" stroke="#333" stroke-width="1.4"/></svg>
<svg class="r" style="left:24px;top:364px;" width="13" height="13" viewBox="0 0 13 13"><rect x="0.5" y="0.5" width="12" height="12" fill="#fff" stroke="#333" stroke-width="1"/><path d="M2.5 6.5 L5.2 9.5 L10.5 3" fill="none" stroke="#222" stroke-width="1.1"/></svg>
<svg class="r" style="left:42px;top:363px;" width="16" height="16" viewBox="0 0 16 16"><path d="M1 4.5 L4 1.5 H15 L12 4.5Z" fill="#2aa198"/><path d="M12 4.5 L15 1.5 V12.5 L12 15.5Z" fill="#1d6fb5"/><rect x="1" y="4.5" width="11" height="11" fill="#1b3fb0"/><ellipse cx="6.5" cy="10" rx="4.6" ry="4.6" fill="#2fd06a"/><ellipse cx="6.5" cy="10" rx="3.4" ry="3.4" fill="#ffe21a"/><ellipse cx="6.5" cy="10" rx="1.8" ry="1.8" fill="#e2231a"/><ellipse cx="13.5" cy="8.5" rx="1.2" ry="3" fill="#ffe21a"/><ellipse cx="13.5" cy="8.5" rx="0.6" ry="1.6" fill="#e2231a"/></svg>
<span class="t" style="left:63px;top:364.0px;height:16px;line-height:16px;letter-spacing:-0.055px;">Solids</span>
<svg class="r" style="left:27px;top:383px;" width="12" height="12" viewBox="0 0 16 16"><path d="M2.5 5.5 L8 11 L13.5 5.5" fill="none" stroke="#333" stroke-width="1.4"/></svg>
<svg class="r" style="left:44px;top:382px;" width="13" height="13" viewBox="0 0 13 13"><rect x="0.5" y="0.5" width="12" height="12" fill="#cce4f7" stroke="#0a64ad" stroke-width="1"/></svg>
<svg class="r" style="left:62px;top:381px;" width="16" height="16" viewBox="0 0 16 16"><path d="M1 4.5 L4 1.5 H15 L12 4.5Z" fill="#2aa198"/><path d="M12 4.5 L15 1.5 V12.5 L12 15.5Z" fill="#1d6fb5"/><rect x="1" y="4.5" width="11" height="11" fill="#1b3fb0"/><ellipse cx="6.5" cy="10" rx="4.6" ry="4.6" fill="#2fd06a"/><ellipse cx="6.5" cy="10" rx="3.4" ry="3.4" fill="#ffe21a"/><ellipse cx="6.5" cy="10" rx="1.8" ry="1.8" fill="#e2231a"/><ellipse cx="13.5" cy="8.5" rx="1.2" ry="3" fill="#ffe21a"/><ellipse cx="13.5" cy="8.5" rx="0.6" ry="1.6" fill="#e2231a"/></svg>
<span class="t" style="left:83px;top:382.0px;height:16px;line-height:16px;letter-spacing:-0.469px;">Stresses</span>
<svg class="r" style="left:47px;top:401px;" width="12" height="12" viewBox="0 0 16 16"><path d="M2.5 5.5 L8 11 L13.5 5.5" fill="none" stroke="#333" stroke-width="1.4"/></svg>
<svg class="r" style="left:64px;top:400px;" width="13" height="13" viewBox="0 0 13 13"><rect x="0.5" y="0.5" width="12" height="12" fill="#cce4f7" stroke="#0a64ad" stroke-width="1"/></svg>
<svg class="r" style="left:82px;top:399px;" width="16" height="16" viewBox="0 0 16 16"><path d="M1 4.5 L4 1.5 H15 L12 4.5Z" fill="#2aa198"/><path d="M12 4.5 L15 1.5 V12.5 L12 15.5Z" fill="#1d6fb5"/><rect x="1" y="4.5" width="11" height="11" fill="#1b3fb0"/><ellipse cx="6.5" cy="10" rx="4.6" ry="4.6" fill="#2fd06a"/><ellipse cx="6.5" cy="10" rx="3.4" ry="3.4" fill="#ffe21a"/><ellipse cx="6.5" cy="10" rx="1.8" ry="1.8" fill="#e2231a"/><ellipse cx="13.5" cy="8.5" rx="1.2" ry="3" fill="#ffe21a"/><ellipse cx="13.5" cy="8.5" rx="0.6" ry="1.6" fill="#e2231a"/></svg>
<span class="t" style="left:103px;top:400.0px;height:16px;line-height:16px;letter-spacing:-0.543px;word-spacing:0.543px;">Basic Stresses</span>
<svg class="r" style="left:84px;top:418px;" width="13" height="13" viewBox="0 0 13 13"><circle cx="6.5" cy="6.5" r="6" fill="#fff" stroke="#333" stroke-width="1"/></svg>
<svg class="r" style="left:102px;top:417px;" width="16" height="16" viewBox="0 0 16 16"><path d="M1 4.5 L4 1.5 H15 L12 4.5Z" fill="#2aa198"/><path d="M12 4.5 L15 1.5 V12.5 L12 15.5Z" fill="#1d6fb5"/><rect x="1" y="4.5" width="11" height="11" fill="#1b3fb0"/><ellipse cx="6.5" cy="10" rx="4.6" ry="4.6" fill="#2fd06a"/><ellipse cx="6.5" cy="10" rx="3.4" ry="3.4" fill="#ffe21a"/><ellipse cx="6.5" cy="10" rx="1.8" ry="1.8" fill="#e2231a"/><ellipse cx="13.5" cy="8.5" rx="1.2" ry="3" fill="#ffe21a"/><ellipse cx="13.5" cy="8.5" rx="0.6" ry="1.6" fill="#e2231a"/></svg>
<span class="t" style="left:123px;top:418.0px;height:16px;line-height:16px;">σ<span style="font-size:9px;position:relative;top:2px">x</span></span>
<svg class="r" style="left:84px;top:436px;" width="13" height="13" viewBox="0 0 13 13"><circle cx="6.5" cy="6.5" r="6" fill="#fff" stroke="#333" stroke-width="1"/></svg>
<svg class="r" style="left:102px;top:435px;" width="16" height="16" viewBox="0 0 16 16"><path d="M1 4.5 L4 1.5 H15 L12 4.5Z" fill="#2aa198"/><path d="M12 4.5 L15 1.5 V12.5 L12 15.5Z" fill="#1d6fb5"/><rect x="1" y="4.5" width="11" height="11" fill="#1b3fb0"/><ellipse cx="6.5" cy="10" rx="4.6" ry="4.6" fill="#2fd06a"/><ellipse cx="6.5" cy="10" rx="3.4" ry="3.4" fill="#ffe21a"/><ellipse cx="6.5" cy="10" rx="1.8" ry="1.8" fill="#e2231a"/><ellipse cx="13.5" cy="8.5" rx="1.2" ry="3" fill="#ffe21a"/><ellipse cx="13.5" cy="8.5" rx="0.6" ry="1.6" fill="#e2231a"/></svg>
<span class="t" style="left:123px;top:436.0px;height:16px;line-height:16px;">σ<span style="font-size:9px;position:relative;top:2px">y</span></span>
<svg class="r" style="left:84px;top:454px;" width="13" height="13" viewBox="0 0 13 13"><circle cx="6.5" cy="6.5" r="6" fill="#fff" stroke="#333" stroke-width="1"/></svg>
<svg class="r" style="left:102px;top:453px;" width="16" height="16" viewBox="0 0 16 16"><path d="M1 4.5 L4 1.5 H15 L12 4.5Z" fill="#2aa198"/><path d="M12 4.5 L15 1.5 V12.5 L12 15.5Z" fill="#1d6fb5"/><rect x="1" y="4.5" width="11" height="11" fill="#1b3fb0"/><ellipse cx="6.5" cy="10" rx="4.6" ry="4.6" fill="#2fd06a"/><ellipse cx="6.5" cy="10" rx="3.4" ry="3.4" fill="#ffe21a"/><ellipse cx="6.5" cy="10" rx="1.8" ry="1.8" fill="#e2231a"/><ellipse cx="13.5" cy="8.5" rx="1.2" ry="3" fill="#ffe21a"/><ellipse cx="13.5" cy="8.5" rx="0.6" ry="1.6" fill="#e2231a"/></svg>
<span class="t" style="left:123px;top:454.0px;height:16px;line-height:16px;">σ<span style="font-size:9px;position:relative;top:2px">z</span></span>
<svg class="r" style="left:84px;top:472px;" width="13" height="13" viewBox="0 0 13 13"><circle cx="6.5" cy="6.5" r="6" fill="#fff" stroke="#333" stroke-width="1"/></svg>
<svg class="r" style="left:102px;top:471px;" width="16" height="16" viewBox="0 0 16 16"><path d="M1 4.5 L4 1.5 H15 L12 4.5Z" fill="#2aa198"/><path d="M12 4.5 L15 1.5 V12.5 L12 15.5Z" fill="#1d6fb5"/><rect x="1" y="4.5" width="11" height="11" fill="#1b3fb0"/><ellipse cx="6.5" cy="10" rx="4.6" ry="4.6" fill="#2fd06a"/><ellipse cx="6.5" cy="10" rx="3.4" ry="3.4" fill="#ffe21a"/><ellipse cx="6.5" cy="10" rx="1.8" ry="1.8" fill="#e2231a"/><ellipse cx="13.5" cy="8.5" rx="1.2" ry="3" fill="#ffe21a"/><ellipse cx="13.5" cy="8.5" rx="0.6" ry="1.6" fill="#e2231a"/></svg>
<span class="t" style="left:123px;top:472.0px;height:16px;line-height:16px;">τ<span style="font-size:9px;position:relative;top:2px">yz</span></span>
<svg class="r" style="left:84px;top:490px;" width="13" height="13" viewBox="0 0 13 13"><circle cx="6.5" cy="6.5" r="6" fill="#fff" stroke="#333" stroke-width="1"/></svg>
<svg class="r" style="left:102px;top:489px;" width="16" height="16" viewBox="0 0 16 16"><path d="M1 4.5 L4 1.5 H15 L12 4.5Z" fill="#2aa198"/><path d="M12 4.5 L15 1.5 V12.5 L12 15.5Z" fill="#1d6fb5"/><rect x="1" y="4.5" width="11" height="11" fill="#1b3fb0"/><ellipse cx="6.5" cy="10" rx="4.6" ry="4.6" fill="#2fd06a"/><ellipse cx="6.5" cy="10" rx="3.4" ry="3.4" fill="#ffe21a"/><ellipse cx="6.5" cy="10" rx="1.8" ry="1.8" fill="#e2231a"/><ellipse cx="13.5" cy="8.5" rx="1.2" ry="3" fill="#ffe21a"/><ellipse cx="13.5" cy="8.5" rx="0.6" ry="1.6" fill="#e2231a"/></svg>
<span class="t" style="left:123px;top:490.0px;height:16px;line-height:16px;">τ<span style="font-size:9px;position:relative;top:2px">xz</span></span>
<svg class="r" style="left:84px;top:508px;" width="13" height="13" viewBox="0 0 13 13"><circle cx="6.5" cy="6.5" r="6" fill="#fff" stroke="#333" stroke-width="1"/></svg>
<svg class="r" style="left:102px;top:507px;" width="16" height="16" viewBox="0 0 16 16"><path d="M1 4.5 L4 1.5 H15 L12 4.5Z" fill="#2aa198"/><path d="M12 4.5 L15 1.5 V12.5 L12 15.5Z" fill="#1d6fb5"/><rect x="1" y="4.5" width="11" height="11" fill="#1b3fb0"/><ellipse cx="6.5" cy="10" rx="4.6" ry="4.6" fill="#2fd06a"/><ellipse cx="6.5" cy="10" rx="3.4" ry="3.4" fill="#ffe21a"/><ellipse cx="6.5" cy="10" rx="1.8" ry="1.8" fill="#e2231a"/><ellipse cx="13.5" cy="8.5" rx="1.2" ry="3" fill="#ffe21a"/><ellipse cx="13.5" cy="8.5" rx="0.6" ry="1.6" fill="#e2231a"/></svg>
<span class="t" style="left:123px;top:508.0px;height:16px;line-height:16px;">τ<span style="font-size:9px;position:relative;top:2px">xy</span></span>
<svg class="r" style="left:47px;top:527px;" width="12" height="12" viewBox="0 0 16 16"><path d="M5.5 2.5 L11 8 L5.5 13.5" fill="none" stroke="#999" stroke-width="1.3"/></svg>
<svg class="r" style="left:64px;top:526px;" width="13" height="13" viewBox="0 0 13 13"><rect x="0.5" y="0.5" width="12" height="12" fill="#cce4f7" stroke="#0a64ad" stroke-width="1"/></svg>
<svg class="r" style="left:82px;top:525px;" width="16" height="16" viewBox="0 0 16 16"><path d="M1 4.5 L4 1.5 H15 L12 4.5Z" fill="#2aa198"/><path d="M12 4.5 L15 1.5 V12.5 L12 15.5Z" fill="#1d6fb5"/><rect x="1" y="4.5" width="11" height="11" fill="#1b3fb0"/><ellipse cx="6.5" cy="10" rx="4.6" ry="4.6" fill="#2fd06a"/><ellipse cx="6.5" cy="10" rx="3.4" ry="3.4" fill="#ffe21a"/><ellipse cx="6.5" cy="10" rx="1.8" ry="1.8" fill="#e2231a"/><ellipse cx="13.5" cy="8.5" rx="1.2" ry="3" fill="#ffe21a"/><ellipse cx="13.5" cy="8.5" rx="0.6" ry="1.6" fill="#e2231a"/></svg>
<span class="t" style="left:103px;top:526.0px;height:16px;line-height:16px;letter-spacing:-0.238px;word-spacing:0.238px;">Principal Stresses</span>
<svg class="r" style="left:47px;top:545px;" width="12" height="12" viewBox="0 0 16 16"><path d="M5.5 2.5 L11 8 L5.5 13.5" fill="none" stroke="#999" stroke-width="1.3"/></svg>
<svg class="r" style="left:64px;top:544px;" width="13" height="13" viewBox="0 0 13 13"><rect x="0.5" y="0.5" width="12" height="12" fill="#cce4f7" stroke="#0a64ad" stroke-width="1"/></svg>
<svg class="r" style="left:82px;top:543px;" width="16" height="16" viewBox="0 0 16 16"><path d="M1 4.5 L4 1.5 H15 L12 4.5Z" fill="#2aa198"/><path d="M12 4.5 L15 1.5 V12.5 L12 15.5Z" fill="#1d6fb5"/><rect x="1" y="4.5" width="11" height="11" fill="#1b3fb0"/><ellipse cx="6.5" cy="10" rx="4.6" ry="4.6" fill="#2fd06a"/><ellipse cx="6.5" cy="10" rx="3.4" ry="3.4" fill="#ffe21a"/><ellipse cx="6.5" cy="10" rx="1.8" ry="1.8" fill="#e2231a"/><ellipse cx="13.5" cy="8.5" rx="1.2" ry="3" fill="#ffe21a"/><ellipse cx="13.5" cy="8.5" rx="0.6" ry="1.6" fill="#e2231a"/></svg>
<span class="t" style="left:103px;top:544.0px;height:16px;line-height:16px;letter-spacing:-0.202px;word-spacing:0.202px;">Equivalent Stresses</span>
<svg class="r" style="left:27px;top:563px;" width="12" height="12" viewBox="0 0 16 16"><path d="M5.5 2.5 L11 8 L5.5 13.5" fill="none" stroke="#999" stroke-width="1.3"/></svg>
<svg class="r" style="left:44px;top:562px;" width="13" height="13" viewBox="0 0 13 13"><rect x="0.5" y="0.5" width="12" height="12" fill="#cce4f7" stroke="#0a64ad" stroke-width="1"/></svg>
<svg class="r" style="left:62px;top:561px;" width="16" height="16" viewBox="0 0 16 16"><path d="M1 4.5 L4 1.5 H15 L12 4.5Z" fill="#2aa198"/><path d="M12 4.5 L15 1.5 V12.5 L12 15.5Z" fill="#1d6fb5"/><rect x="1" y="4.5" width="11" height="11" fill="#1b3fb0"/><ellipse cx="6.5" cy="10" rx="4.6" ry="4.6" fill="#2fd06a"/><ellipse cx="6.5" cy="10" rx="3.4" ry="3.4" fill="#ffe21a"/><ellipse cx="6.5" cy="10" rx="1.8" ry="1.8" fill="#e2231a"/><ellipse cx="13.5" cy="8.5" rx="1.2" ry="3" fill="#ffe21a"/><ellipse cx="13.5" cy="8.5" rx="0.6" ry="1.6" fill="#e2231a"/></svg>
<span class="t" style="left:83px;top:562.0px;height:16px;line-height:16px;letter-spacing:-0.114px;">Strains</span>
<svg class="r" style="left:7px;top:581px;" width="12" height="12" viewBox="0 0 16 16"><path d="M5.5 2.5 L11 8 L5.5 13.5" fill="none" stroke="#999" stroke-width="1.3"/></svg>
<svg class="r" style="left:24px;top:580px;" width="13" height="13" viewBox="0 0 13 13"><rect x="0.5" y="0.5" width="12" height="12" fill="#fff" stroke="#333" stroke-width="1"/></svg>
<svg class="r" style="left:42px;top:579px;" width="16" height="16" viewBox="0 0 16 16"><path d="M0 11 L8 9 L8 11 L0 13Z" fill="#2a55b8"/><path d="M8 9 L16 6.5 L16 9.5 L8 11Z" fill="#d8322a"/><path d="M0 11L16 7" stroke="#222" stroke-width="1"/></svg>
<span class="t" style="left:63px;top:580.0px;height:16px;line-height:16px;letter-spacing:-0.008px;">Criteria</span>
<svg class="r" style="left:7px;top:599px;" width="12" height="12" viewBox="0 0 16 16"><path d="M5.5 2.5 L11 8 L5.5 13.5" fill="none" stroke="#999" stroke-width="1.3"/></svg>
<svg class="r" style="left:24px;top:598px;" width="13" height="13" viewBox="0 0 13 13"><rect x="0.5" y="0.5" width="12" height="12" fill="#fff" stroke="#333" stroke-width="1"/></svg>
<svg class="r" style="left:42px;top:597px;" width="16" height="16" viewBox="0 0 16 16"><path d="M5 9 L8 14 H2Z" fill="#2e9c3e"/><path d="M5 3 L8 8 H2Z" fill="#2e9c3e"/><path d="M5 1V5" stroke="#2e9c3e" stroke-width="1.4"/><path d="M10 4H15M10 4l2-2M10 4l2 2" stroke="#2e9c3e" stroke-width="1.2" fill="none"/></svg>
<span class="t" style="left:63px;top:598.0px;height:16px;line-height:16px;letter-spacing:0.023px;word-spacing:-0.023px;">Support Reactions</span>
<svg class="r" style="left:7px;top:617px;" width="12" height="12" viewBox="0 0 16 16"><path d="M5.5 2.5 L11 8 L5.5 13.5" fill="none" stroke="#999" stroke-width="1.3"/></svg>
<svg class="r" style="left:24px;top:616px;" width="13" height="13" viewBox="0 0 13 13"><rect x="0.5" y="0.5" width="12" height="12" fill="#fff" stroke="#333" stroke-width="1"/></svg>
<svg class="r" style="left:42px;top:615px;" width="16" height="16" viewBox="0 0 16 16"><ellipse cx="8" cy="8" rx="7.5" ry="7.5" fill="none" stroke="#bbb" stroke-width="0.6"/><path d="M3 14V3.5H13V14" fill="none" stroke="#222" stroke-width="1.3"/><path d="M3 14c-1.5-4-1.5-7 0-10.5M13 14c1.5-4 1.5-7 0-10.5" fill="none" stroke="#d22" stroke-width="1"/><circle cx="3" cy="14" r="1" fill="#d22"/><circle cx="13" cy="14" r="1" fill="#d22"/></svg>
<span class="t" style="left:63px;top:616.0px;height:16px;line-height:16px;letter-spacing:0.219px;word-spacing:-0.219px;">Distribution of Loads</span>
<svg class="r" style="left:7px;top:635px;" width="12" height="12" viewBox="0 0 16 16"><path d="M5.5 2.5 L11 8 L5.5 13.5" fill="none" stroke="#999" stroke-width="1.3"/></svg>
<svg class="r" style="left:24px;top:634px;" width="13" height="13" viewBox="0 0 13 13"><rect x="0.5" y="0.5" width="12" height="12" fill="#fff" stroke="#333" stroke-width="1"/></svg>
<svg class="r" style="left:42px;top:633px;" width="16" height="16" viewBox="0 0 16 16"><text x="6" y="7" font-size="7.5" font-weight="700" font-family="Liberation Sans, sans-serif" fill="#222">xx</text><path d="M1 15 L8 7" stroke="#999" stroke-width="1"/></svg>
<span class="t" style="left:63px;top:634.0px;height:16px;line-height:16px;letter-spacing:-0.180px;word-spacing:0.180px;">Values on Surfaces</span>
<svg class="r" style="left:7px;top:677px;" width="12" height="12" viewBox="0 0 16 16"><path d="M5.5 2.5 L11 8 L5.5 13.5" fill="none" stroke="#999" stroke-width="1.3"/></svg>
<svg class="r" style="left:24px;top:676px;" width="13" height="13" viewBox="0 0 13 13"><rect x="0.5" y="0.5" width="12" height="12" fill="#fff" stroke="#333" stroke-width="1"/><path d="M2.5 6.5 L5.2 9.5 L10.5 3" fill="none" stroke="#222" stroke-width="1.1"/></svg>
<svg class="r" style="left:42px;top:675px;" width="16" height="16" viewBox="0 0 16 16"><path d="M0 13.5 L8 11.5 L8 14 L0 15.5Z" fill="#2a55b8"/><path d="M8 11.5 L16 9 L16 12.5 L8 14Z" fill="#d8322a"/><path d="M0 13.6L16 9.4" stroke="#222" stroke-width="1"/><text x="0.5" y="6" font-size="7.5" font-weight="700" font-family="Liberation Sans, sans-serif" fill="#222" letter-spacing="-0.3">x.xx</text></svg>
<span class="t" style="left:63px;top:676.0px;height:16px;line-height:16px;letter-spacing:-0.176px;word-spacing:0.176px;">Result Values</span>
<svg class="r" style="left:24px;top:694px;" width="13" height="13" viewBox="0 0 13 13"><rect x="0.5" y="0.5" width="12" height="12" fill="#fff" stroke="#333" stroke-width="1"/><path d="M2.5 6.5 L5.2 9.5 L10.5 3" fill="none" stroke="#222" stroke-width="1.1"/></svg>
<svg class="r" style="left:42px;top:693px;" width="16" height="16" viewBox="0 0 16 16"><path d="M0 13.5 L8 11.5 L8 14 L0 15.5Z" fill="#2a55b8"/><path d="M8 11.5 L16 9 L16 12.5 L8 14Z" fill="#d8322a"/><path d="M0 13.6L16 9.4" stroke="#222" stroke-width="1"/><ellipse cx="10.5" cy="4.5" rx="4.2" ry="2.8" fill="#fff" stroke="#33408f" stroke-width="1.1"/><circle cx="10.5" cy="4.5" r="1.7" fill="#33408f"/></svg>
<span class="t" style="left:63px;top:694.0px;height:16px;line-height:16px;letter-spacing:0.248px;word-spacing:-0.248px;">Title Information</span>
<svg class="r" style="left:24px;top:712px;" width="13" height="13" viewBox="0 0 13 13"><rect x="0.5" y="0.5" width="12" height="12" fill="#fff" stroke="#333" stroke-width="1"/><path d="M2.5 6.5 L5.2 9.5 L10.5 3" fill="none" stroke="#222" stroke-width="1.1"/></svg>
<svg class="r" style="left:42px;top:711px;" width="16" height="16" viewBox="0 0 16 16"><path d="M0 13.5 L8 11.5 L8 14 L0 15.5Z" fill="#2a55b8"/><path d="M8 11.5 L16 9 L16 12.5 L8 14Z" fill="#d8322a"/><path d="M0 13.6L16 9.4" stroke="#222" stroke-width="1"/><ellipse cx="10.5" cy="4.5" rx="4.2" ry="2.8" fill="#fff" stroke="#33408f" stroke-width="1.1"/><circle cx="10.5" cy="4.5" r="1.7" fill="#33408f"/></svg>
<span class="t" style="left:63px;top:712.0px;height:16px;line-height:16px;letter-spacing:0.267px;word-spacing:-0.267px;">Max/Min Information</span>
<svg class="r" style="left:7px;top:731px;" width="12" height="12" viewBox="0 0 16 16"><path d="M5.5 2.5 L11 8 L5.5 13.5" fill="none" stroke="#999" stroke-width="1.3"/></svg>
<svg class="r" style="left:24px;top:730px;" width="13" height="13" viewBox="0 0 13 13"><rect x="0.5" y="0.5" width="12" height="12" fill="#cce4f7" stroke="#0a64ad" stroke-width="1"/></svg>
<svg class="r" style="left:42px;top:729px;" width="16" height="16" viewBox="0 0 16 16"><path d="M0 13.5 L8 11.5 L8 14 L0 15.5Z" fill="#2a55b8"/><path d="M8 11.5 L16 9 L16 12.5 L8 14Z" fill="#d8322a"/><path d="M0 13.6L16 9.4" stroke="#222" stroke-width="1"/><ellipse cx="10.5" cy="4.5" rx="4.2" ry="2.8" fill="#fff" stroke="#33408f" stroke-width="1.1"/><circle cx="10.5" cy="4.5" r="1.7" fill="#33408f"/></svg>
<span class="t" style="left:63px;top:730.0px;height:16px;line-height:16px;letter-spacing:0.214px;">Deformation</span>
<svg class="r" style="left:7px;top:749px;" width="12" height="12" viewBox="0 0 16 16"><path d="M5.5 2.5 L11 8 L5.5 13.5" fill="none" stroke="#999" stroke-width="1.3"/></svg>
<svg class="r" style="left:24px;top:748px;" width="13" height="13" viewBox="0 0 13 13"><rect x="0.5" y="0.5" width="12" height="12" fill="#cce4f7" stroke="#0a64ad" stroke-width="1"/></svg>
<svg class="r" style="left:42px;top:747px;" width="16" height="16" viewBox="0 0 16 16"><path d="M0 13.5 L8 11.5 L8 14 L0 15.5Z" fill="#2a55b8"/><path d="M8 11.5 L16 9 L16 12.5 L8 14Z" fill="#d8322a"/><path d="M0 13.6L16 9.4" stroke="#222" stroke-width="1"/><ellipse cx="10.5" cy="4.5" rx="4.2" ry="2.8" fill="#fff" stroke="#33408f" stroke-width="1.1"/><circle cx="10.5" cy="4.5" r="1.7" fill="#33408f"/></svg>
<span class="t" style="left:63px;top:748.0px;height:16px;line-height:16px;letter-spacing:-0.300px;">Lines</span>
<svg class="r" style="left:7px;top:767px;" width="12" height="12" viewBox="0 0 16 16"><path d="M5.5 2.5 L11 8 L5.5 13.5" fill="none" stroke="#999" stroke-width="1.3"/></svg>
<svg class="r" style="left:24px;top:766px;" width="13" height="13" viewBox="0 0 13 13"><rect x="0.5" y="0.5" width="12" height="12" fill="#cce4f7" stroke="#0a64ad" stroke-width="1"/></svg>
<svg class="r" style="left:42px;top:765px;" width="16" height="16" viewBox="0 0 16 16"><path d="M0 13.5 L8 11.5 L8 14 L0 15.5Z" fill="#2a55b8"/><path d="M8 11.5 L16 9 L16 12.5 L8 14Z" fill="#d8322a"/><path d="M0 13.6L16 9.4" stroke="#222" stroke-width="1"/><ellipse cx="10.5" cy="4.5" rx="4.2" ry="2.8" fill="#fff" stroke="#33408f" stroke-width="1.1"/><circle cx="10.5" cy="4.5" r="1.7" fill="#33408f"/></svg>
<span class="t" style="left:63px;top:766.0px;height:16px;line-height:16px;letter-spacing:-0.134px;">Members</span>
<svg class="r" style="left:7px;top:785px;" width="12" height="12" viewBox="0 0 16 16"><path d="M5.5 2.5 L11 8 L5.5 13.5" fill="none" stroke="#999" stroke-width="1.3"/></svg>
<svg class="r" style="left:24px;top:784px;" width="13" height="13" viewBox="0 0 13 13"><rect x="0.5" y="0.5" width="12" height="12" fill="#cce4f7" stroke="#0a64ad" stroke-width="1"/></svg>
<svg class="r" style="left:42px;top:783px;" width="16" height="16" viewBox="0 0 16 16"><path d="M0 13.5 L8 11.5 L8 14 L0 15.5Z" fill="#2a55b8"/><path d="M8 11.5 L16 9 L16 12.5 L8 14Z" fill="#d8322a"/><path d="M0 13.6L16 9.4" stroke="#222" stroke-width="1"/><ellipse cx="10.5" cy="4.5" rx="4.2" ry="2.8" fill="#fff" stroke="#33408f" stroke-width="1.1"/><circle cx="10.5" cy="4.5" r="1.7" fill="#33408f"/></svg>
<span class="t" style="left:63px;top:784.0px;height:16px;line-height:16px;letter-spacing:-0.299px;">Surfaces</span>
<svg class="r" style="left:7px;top:803px;" width="12" height="12" viewBox="0 0 16 16"><path d="M5.5 2.5 L11 8 L5.5 13.5" fill="none" stroke="#999" stroke-width="1.3"/></svg>
<svg class="r" style="left:24px;top:802px;" width="13" height="13" viewBox="0 0 13 13"><rect x="0.5" y="0.5" width="12" height="12" fill="#cce4f7" stroke="#0a64ad" stroke-width="1"/></svg>
<svg class="r" style="left:42px;top:801px;" width="16" height="16" viewBox="0 0 16 16"><path d="M0 13.5 L8 11.5 L8 14 L0 15.5Z" fill="#2a55b8"/><path d="M8 11.5 L16 9 L16 12.5 L8 14Z" fill="#d8322a"/><path d="M0 13.6L16 9.4" stroke="#222" stroke-width="1"/><ellipse cx="10.5" cy="4.5" rx="4.2" ry="2.8" fill="#fff" stroke="#33408f" stroke-width="1.1"/><circle cx="10.5" cy="4.5" r="1.7" fill="#33408f"/></svg>
<span class="t" style="left:63px;top:802.0px;height:16px;line-height:16px;letter-spacing:-0.180px;word-spacing:0.180px;">Values on Surfaces</span>
<svg class="r" style="left:7px;top:821px;" width="12" height="12" viewBox="0 0 16 16"><path d="M2.5 5.5 L8 11 L13.5 5.5" fill="none" stroke="#333" stroke-width="1.4"/></svg>
<svg class="r" style="left:24px;top:820px;" width="13" height="13" viewBox="0 0 13 13"><rect x="0.5" y="0.5" width="12" height="12" fill="#cce4f7" stroke="#0a64ad" stroke-width="1"/></svg>
<svg class="r" style="left:42px;top:819px;" width="16" height="16" viewBox="0 0 16 16"><rect x="0" y="0" width="16" height="16" fill="#1b3fb0"/><path d="M0 16V3A13 13 0 0 1 16 3V16Z" fill="#25c3e0" transform="translate(3,0)"/><circle cx="16" cy="16" r="13" fill="#2fd06a"/><circle cx="16" cy="16" r="10" fill="#b8e02a"/><circle cx="16" cy="16" r="7.5" fill="#ffe21a"/><circle cx="16" cy="16" r="5" fill="#ff9a1a"/><circle cx="16" cy="16" r="2.8" fill="#e2231a"/></svg>
<span class="t" style="left:63px;top:820.0px;height:16px;line-height:16px;letter-spacing:-0.055px;word-spacing:0.055px;">Type of display</span>
<svg class="r" style="left:27px;top:839px;" width="12" height="12" viewBox="0 0 16 16"><path d="M5.5 2.5 L11 8 L5.5 13.5" fill="none" stroke="#999" stroke-width="1.3"/></svg>
<svg class="r" style="left:44px;top:838px;" width="13" height="13" viewBox="0 0 13 13"><circle cx="6.5" cy="6.5" r="6" fill="#fff" stroke="#333" stroke-width="1"/><circle cx="6.5" cy="6.5" r="3.2" fill="#222"/></svg>
<svg class="r" style="left:62px;top:837px;" width="16" height="16" viewBox="0 0 16 16"><rect x="0.5" y="0.5" width="15" height="15" fill="#fff" stroke="#888" stroke-width="0.6"/><path d="M1 1 L6 1 L15 11 V15 H11 L1 5Z" fill="#e2231a"/><path d="M1 5 L11 15 H8 L1 8Z" fill="#ffd21a"/><path d="M1 8 L8 15 H5 L1 11Z" fill="#2fd06a"/><path d="M1 11 L5 15 H1Z" fill="#1b3fb0"/><path d="M8 8 L14 1.5 L15.5 3 L9.5 9.5Z" fill="#e8b46a" stroke="#a66" stroke-width="0.4"/></svg>
<span class="t" style="left:83px;top:838.0px;height:16px;line-height:16px;letter-spacing:0.039px;">Isobands</span>
<svg class="r" style="left:27px;top:857px;" width="12" height="12" viewBox="0 0 16 16"><path d="M5.5 2.5 L11 8 L5.5 13.5" fill="none" stroke="#999" stroke-width="1.3"/></svg>
<svg class="r" style="left:44px;top:856px;" width="13" height="13" viewBox="0 0 13 13"><circle cx="6.5" cy="6.5" r="6" fill="#fff" stroke="#333" stroke-width="1"/></svg>
<svg class="r" style="left:62px;top:855px;" width="16" height="16" viewBox="0 0 16 16"><rect x="0.5" y="0.5" width="15" height="15" fill="#fff" stroke="#888" stroke-width="0.6"/><path d="M1 2 L13 15" stroke="#e2231a" stroke-width="1.2"/><path d="M1 6 L9 15" stroke="#ffb21a" stroke-width="1.2"/><path d="M1 10 L6 15" stroke="#2fd06a" stroke-width="1.2"/><path d="M1 13 L3 15" stroke="#1b3fb0" stroke-width="1.2"/><path d="M8 8 L14 1.5 L15.5 3 L9.5 9.5Z" fill="#e8b46a" stroke="#a66" stroke-width="0.4"/></svg>
<span class="t" style="left:83px;top:856.0px;height:16px;line-height:16px;">Isolines</span>
<svg class="r" style="left:44px;top:874px;" width="13" height="13" viewBox="0 0 13 13"><circle cx="6.5" cy="6.5" r="6" fill="#fff" stroke="#333" stroke-width="1"/></svg>
<svg class="r" style="left:62px;top:873px;" width="16" height="16" viewBox="0 0 16 16"><rect x="0.3" y="0.3" width="1.3" height="1.3" fill="#2fd06a"/><rect x="0.3" y="2.3" width="1.3" height="1.3" fill="#2aa198"/><rect x="0.3" y="4.3" width="1.3" height="1.3" fill="#2aa198"/><rect x="0.3" y="6.3" width="1.3" height="1.3" fill="#2fd06a"/><rect x="0.3" y="8.3" width="1.3" height="1.3" fill="#d8322a"/><rect x="0.3" y="10.3" width="1.3" height="1.3" fill="#2aa198"/><rect x="0.3" y="12.3" width="1.3" height="1.3" fill="#7a4fb0"/><rect x="0.3" y="14.3" width="1.3" height="1.3" fill="#888"/><rect x="2.3" y="0.3" width="1.3" height="1.3" fill="#2aa198"/><rect x="2.3" y="2.3" width="1.3" height="1.3" fill="#2a55b8"/><rect x="2.3" y="4.3" width="1.3" height="1.3" fill="#2aa198"/><rect x="2.3" y="6.3" width="1.3" height="1.3" fill="#2a55b8"/><rect x="2.3" y="8.3" width="1.3" height="1.3" fill="#7a4fb0"/><rect x="2.3" y="10.3" width="1.3" height="1.3" fill="#d8322a"/><rect x="2.3" y="12.3" width="1.3" height="1.3" fill="#2aa198"/><rect x="2.3" y="14.3" width="1.3" height="1.3" fill="#2fd06a"/><rect x="4.3" y="0.3" width="1.3" height="1.3" fill="#2fd06a"/><rect x="4.3" y="2.3" width="1.3" height="1.3" fill="#888"/><rect x="4.3" y="4.3" width="1.3" height="1.3" fill="#7a4fb0"/><rect x="4.3" y="6.3" width="1.3" height="1.3" fill="#2aa198"/><rect x="4.3" y="8.3" width="1.3" height="1.3" fill="#2aa198"/><rect x="4.3" y="10.3" width="1.3" height="1.3" fill="#7a4fb0"/><rect x="4.3" y="12.3" width="1.3" height="1.3" fill="#7a4fb0"/><rect x="4.3" y="14.3" width="1.3" height="1.3" fill="#888"/><rect x="6.3" y="0.3" width="1.3" height="1.3" fill="#2fd06a"/><rect x="6.3" y="2.3" width="1.3" height="1.3" fill="#2fd06a"/><rect x="6.3" y="4.3" width="1.3" height="1.3" fill="#888"/><rect x="6.3" y="6.3" width="1.3" height="1.3" fill="#2fd06a"/><rect x="6.3" y="8.3" width="1.3" height="1.3" fill="#2aa198"/><rect x="6.3" y="10.3" width="1.3" height="1.3" fill="#7a4fb0"/><rect x="6.3" y="12.3" width="1.3" height="1.3" fill="#888"/><rect x="6.3" y="14.3" width="1.3" height="1.3" fill="#2a55b8"/><rect x="8.3" y="0.3" width="1.3" height="1.3" fill="#888"/><rect x="8.3" y="2.3" width="1.3" height="1.3" fill="#2a55b8"/><rect x="8.3" y="4.3" width="1.3" height="1.3" fill="#2fd06a"/><rect x="8.3" y="6.3" width="1.3" height="1.3" fill="#2aa198"/><rect x="8.3" y="8.3" width="1.3" height="1.3" fill="#2a55b8"/><rect x="8.3" y="10.3" width="1.3" height="1.3" fill="#d8322a"/><rect x="8.3" y="12.3" width="1.3" height="1.3" fill="#2a55b8"/><rect x="8.3" y="14.3" width="1.3" height="1.3" fill="#d8322a"/><rect x="10.3" y="0.3" width="1.3" height="1.3" fill="#7a4fb0"/><rect x="10.3" y="2.3" width="1.3" height="1.3" fill="#2aa198"/><rect x="10.3" y="4.3" width="1.3" height="1.3" fill="#888"/><rect x="10.3" y="6.3" width="1.3" height="1.3" fill="#7a4fb0"/><rect x="10.3" y="8.3" width="1.3" height="1.3" fill="#888"/><rect x="10.3" y="10.3" width="1.3" height="1.3" fill="#7a4fb0"/><rect x="10.3" y="12.3" width="1.3" height="1.3" fill="#7a4fb0"/><rect x="10.3" y="14.3" width="1.3" height="1.3" fill="#888"/><rect x="12.3" y="0.3" width="1.3" height="1.3" fill="#2aa198"/><rect x="12.3" y="2.3" width="1.3" height="1.3" fill="#7a4fb0"/><rect x="12.3" y="4.3" width="1.3" height="1.3" fill="#2fd06a"/><rect x="12.3" y="6.3" width="1.3" height="1.3" fill="#d8322a"/><rect x="12.3" y="8.3" width="1.3" height="1.3" fill="#2a55b8"/><rect x="12.3" y="10.3" width="1.3" height="1.3" fill="#2a55b8"/><rect x="12.3" y="12.3" width="1.3" height="1.3" fill="#2fd06a"/><rect x="12.3" y="14.3" width="1.3" height="1.3" fill="#7a4fb0"/><rect x="14.3" y="0.3" width="1.3" height="1.3" fill="#2fd06a"/><rect x="14.3" y="2.3" width="1.3" height="1.3" fill="#d8322a"/><rect x="14.3" y="4.3" width="1.3" height="1.3" fill="#888"/><rect x="14.3" y="6.3" width="1.3" height="1.3" fill="#7a4fb0"/><rect x="14.3" y="8.3" width="1.3" height="1.3" fill="#888"/><rect x="14.3" y="10.3" width="1.3" height="1.3" fill="#d8322a"/><rect x="14.3" y="12.3" width="1.3" height="1.3" fill="#7a4fb0"/><rect x="14.3" y="14.3" width="1.3" height="1.3" fill="#2aa198"/><path d="M9 7 L14 1.5 L15.5 3 L10 8.5Z" fill="#e8b46a"/></svg>
<span class="t" style="left:83px;top:874.0px;height:16px;line-height:16px;letter-spacing:-0.069px;word-spacing:0.069px;">Mesh Nodes - Solids</span>
<svg class="r" style="left:44px;top:892px;" width="13" height="13" viewBox="0 0 13 13"><circle cx="6.5" cy="6.5" r="6" fill="#fff" stroke="#333" stroke-width="1"/></svg>
<svg class="r" style="left:62px;top:891px;" width="16" height="16" viewBox="0 0 16 16"><path d="M1 4.5 L4 1.5 H15 L12 4.5Z" fill="#2aa198"/><path d="M12 4.5 L15 1.5 V12.5 L12 15.5Z" fill="#1d6fb5"/><rect x="1" y="4.5" width="11" height="11" fill="#1b3fb0"/><ellipse cx="6.5" cy="10" rx="4.6" ry="4.6" fill="#2fd06a"/><ellipse cx="6.5" cy="10" rx="3.4" ry="3.4" fill="#ffe21a"/><ellipse cx="6.5" cy="10" rx="1.8" ry="1.8" fill="#e2231a"/><ellipse cx="13.5" cy="8.5" rx="1.2" ry="3" fill="#ffe21a"/><ellipse cx="13.5" cy="8.5" rx="0.6" ry="1.6" fill="#e2231a"/><path d="M9 7 L14 1 L15.5 2.5 L10 8.5Z" fill="#e8b46a"/></svg>
<span class="t" style="left:83px;top:892.0px;height:16px;line-height:16px;letter-spacing:-0.015px;word-spacing:0.015px;">Isobands - Solids</span>
<svg class="r" style="left:44px;top:910px;" width="13" height="13" viewBox="0 0 13 13"><circle cx="6.5" cy="6.5" r="6" fill="#fff" stroke="#333" stroke-width="1"/></svg>
<svg class="r" style="left:62px;top:909px;" width="16" height="16" viewBox="0 0 16 16"><rect x="0.5" y="0.5" width="15" height="15" fill="#fff" stroke="#999" stroke-width="0.7"/><path d="M4 4 L12 12 M12 4 L4 12" stroke="#e01818" stroke-width="2.6"/></svg>
<span class="t" style="left:83px;top:910.0px;height:16px;line-height:16px;letter-spacing:0.620px;">Off</span>
<svg class="r" style="left:7px;top:929px;" width="12" height="12" viewBox="0 0 16 16"><path d="M5.5 2.5 L11 8 L5.5 13.5" fill="none" stroke="#999" stroke-width="1.3"/></svg>
<svg class="r" style="left:24px;top:928px;" width="13" height="13" viewBox="0 0 13 13"><rect x="0.5" y="0.5" width="12" height="12" fill="#fff" stroke="#333" stroke-width="1"/><path d="M2.5 6.5 L5.2 9.5 L10.5 3" fill="none" stroke="#222" stroke-width="1.1"/></svg>
<svg class="r" style="left:42px;top:927px;" width="16" height="16" viewBox="0 0 16 16"><path d="M0 13.5 L8 11.5 L8 14 L0 15.5Z" fill="#2a55b8"/><path d="M8 11.5 L16 9 L16 12.5 L8 14Z" fill="#d8322a"/><path d="M0 13.6L16 9.4" stroke="#222" stroke-width="1"/><ellipse cx="10.5" cy="4.5" rx="4.2" ry="2.8" fill="#fff" stroke="#33408f" stroke-width="1.1"/><circle cx="10.5" cy="4.5" r="1.7" fill="#33408f"/></svg>
<span class="t" style="left:63px;top:928.0px;height:16px;line-height:16px;letter-spacing:0.067px;word-spacing:-0.067px;">Ribs - Effective Contribution on Surfa...</span>
<svg class="r" style="left:7px;top:947px;" width="12" height="12" viewBox="0 0 16 16"><path d="M5.5 2.5 L11 8 L5.5 13.5" fill="none" stroke="#999" stroke-width="1.3"/></svg>
<svg class="r" style="left:24px;top:946px;" width="13" height="13" viewBox="0 0 13 13"><rect x="0.5" y="0.5" width="12" height="12" fill="#cce4f7" stroke="#0a64ad" stroke-width="1"/></svg>
<svg class="r" style="left:42px;top:945px;" width="16" height="16" viewBox="0 0 16 16"><path d="M0 13.5 L8 11.5 L8 14 L0 15.5Z" fill="#2a55b8"/><path d="M8 11.5 L16 9 L16 12.5 L8 14Z" fill="#d8322a"/><path d="M0 13.6L16 9.4" stroke="#222" stroke-width="1"/><ellipse cx="10.5" cy="4.5" rx="4.2" ry="2.8" fill="#fff" stroke="#33408f" stroke-width="1.1"/><circle cx="10.5" cy="4.5" r="1.7" fill="#33408f"/></svg>
<span class="t" style="left:63px;top:946.0px;height:16px;line-height:16px;letter-spacing:0.023px;word-spacing:-0.023px;">Support Reactions</span>
<svg class="r" style="left:7px;top:965px;" width="12" height="12" viewBox="0 0 16 16"><path d="M5.5 2.5 L11 8 L5.5 13.5" fill="none" stroke="#999" stroke-width="1.3"/></svg>
<svg class="r" style="left:24px;top:964px;" width="13" height="13" viewBox="0 0 13 13"><rect x="0.5" y="0.5" width="12" height="12" fill="#cce4f7" stroke="#0a64ad" stroke-width="1"/></svg>
<svg class="r" style="left:42px;top:963px;" width="16" height="16" viewBox="0 0 16 16"><path d="M0 13.5 L8 11.5 L8 14 L0 15.5Z" fill="#2a55b8"/><path d="M8 11.5 L16 9 L16 12.5 L8 14Z" fill="#d8322a"/><path d="M0 13.6L16 9.4" stroke="#222" stroke-width="1"/><ellipse cx="10.5" cy="4.5" rx="4.2" ry="2.8" fill="#fff" stroke="#33408f" stroke-width="1.1"/><circle cx="10.5" cy="4.5" r="1.7" fill="#33408f"/></svg>
<span class="t" style="left:63px;top:964.0px;height:16px;line-height:16px;letter-spacing:-0.136px;word-spacing:0.136px;">Result Sections</span>
<div class="r" style="left:3px;top:1011px;width:264px;height:26px;background:#f5f5f5;border-top:1px solid #c5c7d9;"></div>
<div class="r" style="left:3px;top:1011px;width:37px;height:26px;background:#efefef;border:1px solid #c9cbdb;box-sizing:border-box;"></div>
<div class="r" style="left:41px;top:1011px;width:37px;height:26px;background:#efefef;border:1px solid #c9cbdb;box-sizing:border-box;"></div>
<div class="r" style="left:79px;top:1011px;width:37px;height:26px;background:#efefef;border:1px solid #c9cbdb;box-sizing:border-box;"></div>
<div class="r" style="left:117px;top:1010px;width:38px;height:28px;background:#fff;border-right:1px solid #c9cbdb;border-left:1px solid #c9cbdb;box-sizing:border-box;"></div>
<svg class="r" style="left:12px;top:1015px;" width="18" height="18" viewBox="0 0 18 18"><rect x="3" y="1" width="13" height="10" fill="#fff" stroke="#4a7fd6"/><rect x="3" y="1" width="13" height="2.5" fill="#4a7fd6"/><path d="M1 6H6L7.5 8H13V14H1Z" fill="#f3c63a" stroke="#c9982a" stroke-width="0.6"/><path d="M7 11l5 1v4z" fill="#8ab6e8"/><path d="M11 16h3" stroke="#d22" stroke-width="1.2"/></svg>
<svg class="r" style="left:52px;top:1017px;" width="16" height="14" viewBox="0 0 16 14"><ellipse cx="8" cy="7" rx="6.5" ry="4.2" fill="#fff" stroke="#33408f" stroke-width="1.3"/><circle cx="8" cy="7" r="2.6" fill="#33408f"/></svg>
<svg class="r" style="left:89px;top:1017px;" width="17" height="13" viewBox="0 0 17 13"><rect x="0.5" y="2" width="11" height="9" rx="1.5" fill="#555"/><path d="M11.5 6.5L16 3V10Z" fill="#555"/></svg>
<svg class="r" style="left:128px;top:1017px;" width="17" height="13" viewBox="0 1 16 13"><path d="M0 11 L8 9 L8 11 L0 13Z" fill="#2a55b8"/><path d="M8 9 L16 6.5 L16 9.5 L8 11Z" fill="#d8322a"/><path d="M0 11L16 7" stroke="#222" stroke-width="1"/></svg>
<div class="r" style="left:273px;top:71px;width:1437px;height:731px;background:#fff;"></div>
<svg class="r" style="left:273px;top:71px" width="1437" height="731" viewBox="0 0 1437 731">
<defs><clipPath id="soil"><path d="M97 92.8L285.8 85.2L382 100.2L482 90.2L654.5 132.8L778 135L824.5 150L919 151.5L919 167L1059 169L1059 138.5L1072 136L1087 132.3L1330.3 140.7L1330.3 703.5L97 667.8Z"/></clipPath><filter id="b1" x="-2%" y="-2%" width="104%" height="104%"><feGaussianBlur stdDeviation="1.2"/></filter></defs>
<g clip-path="url(#soil)"><rect x="90" y="75" width="1260" height="640" fill="#c00000"/><g filter="url(#b1)">
<path fill="#c60000" fill-rule="evenodd" d="M489 708L1342 708L1342 367L1339 367L1338 366L1335 366L1334 365L1329 364L1326 362L1324 362L1317 358L1315 358L1310 355L1308 355L1291 347L1287 344L1281 337L1276 327L1276 325L1271 315L1269 313L1264 311L1259 311L1258 310L1252 309L1243 304L1236 295L1235 288L1234 287L1234 277L1232 273L1226 267L1212 257L1204 249L1200 241L1200 239L1198 236L1196 229L1189 215L1178 200L1169 191L1145 180L1129 168L1125 166L1118 159L1116 154L1116 148L1117 147L1118 141L1123 131L1138 110L1160 83L1162 79L771 79L771 80L778 87L779 87L800 106L801 106L811 115L822 123L828 129L829 129L843 143L848 151L848 153L849 154L849 159L847 163L841 169L837 171L825 180L816 189L816 190L794 211L789 220L787 231L785 234L784 238L776 246L769 249L764 249L763 250L758 250L757 251L755 251L749 254L741 260L739 264L740 271L745 276L753 277L757 280L758 284L754 290L747 293L729 293L728 292L725 292L724 291L722 291L715 288L712 288L711 287L704 288L696 292L685 304L668 336L653 355L648 364L648 366L645 372L644 379L643 380L642 393L641 394L641 403L640 404L640 409L639 410L638 415L629 433L621 445L608 474L594 493L576 512L565 533L554 548L542 560L542 561L511 591L507 598L507 600L505 604L504 616L503 617L503 626L502 627L502 638L501 639L501 649L500 650L499 667L498 668L498 673L497 674L495 688L494 689L493 696L491 700L491 703Z"/>
<path fill="#cc0000" fill-rule="evenodd" d="M783 79L783 80L791 88L791 89L816 113L817 113L844 140L851 151L851 154L852 155L851 161L842 171L829 180L798 212L792 222L791 227L786 238L778 246L771 249L761 250L760 251L755 252L747 257L743 261L741 265L741 268L743 272L746 274L753 275L757 277L760 281L760 287L755 293L748 296L731 296L730 295L721 294L716 292L707 292L698 297L691 304L685 313L674 334L658 357L653 367L653 369L650 376L650 379L649 380L649 384L648 385L646 407L645 408L645 412L644 413L643 419L641 422L639 429L627 452L627 454L623 461L621 468L614 482L612 484L611 487L605 496L588 517L571 545L543 582L532 600L532 602L528 610L528 613L527 614L527 617L525 622L524 634L523 635L523 643L522 644L521 662L520 663L520 670L519 671L519 677L518 678L518 683L517 684L517 689L516 690L516 694L515 695L515 699L514 700L513 708L1342 708L1342 377L1339 377L1338 376L1333 375L1323 370L1316 365L1302 358L1300 358L1295 355L1293 355L1285 350L1278 343L1274 337L1267 323L1262 318L1249 312L1238 303L1234 297L1234 295L1232 292L1231 282L1229 277L1221 268L1209 259L1202 252L1195 239L1195 237L1187 220L1177 205L1171 199L1171 198L1162 191L1151 186L1149 184L1141 180L1138 177L1123 167L1116 160L1114 156L1114 152L1113 151L1113 149L1114 148L1114 143L1115 142L1116 137L1124 122L1140 98L1143 95L1153 79Z"/>
<path fill="#d20000" fill-rule="evenodd" d="M792 79L797 86L805 94L805 95L838 129L838 130L848 141L854 153L854 159L853 160L853 162L843 173L834 179L802 212L797 219L789 237L780 246L774 249L760 251L751 256L744 263L744 269L745 271L749 273L752 273L757 275L762 280L763 285L761 290L754 297L749 299L734 299L733 298L727 298L726 297L721 297L720 296L710 296L702 300L691 312L686 321L684 323L682 328L680 330L674 342L664 356L659 366L659 368L657 371L657 374L655 378L654 388L653 389L653 395L652 396L651 409L650 410L649 419L646 426L646 429L644 432L640 445L635 455L635 457L633 460L632 465L627 475L627 477L612 505L604 517L601 520L593 532L592 535L584 546L583 549L567 572L560 586L558 588L558 590L552 602L552 604L550 608L550 611L548 615L548 619L547 620L547 624L546 625L546 630L545 631L544 648L543 649L543 658L542 659L542 668L541 669L541 677L540 678L540 685L539 686L539 692L538 693L538 698L537 699L536 708L1342 708L1342 387L1339 387L1326 381L1307 367L1303 365L1301 365L1298 363L1296 363L1283 356L1273 346L1261 326L1256 321L1244 313L1234 302L1230 294L1226 280L1224 277L1199 253L1195 247L1183 221L1173 206L1162 195L1153 190L1148 186L1145 185L1142 182L1125 171L1121 167L1120 167L1114 160L1111 153L1111 144L1112 143L1113 137L1121 120L1123 118L1125 113L1127 111L1128 108L1130 106L1131 103L1133 101L1134 98L1145 81L1145 79Z"/>
<path fill="#d90000" fill-rule="evenodd" d="M800 79L810 93L839 126L839 127L850 140L856 152L856 159L855 160L855 162L852 167L845 174L836 180L804 214L800 220L792 236L786 243L776 249L759 252L753 256L747 262L746 264L746 268L749 271L755 272L760 275L763 278L765 282L765 287L762 293L756 299L749 302L736 302L735 301L730 301L729 300L713 300L706 303L702 306L695 314L687 326L677 345L667 360L665 364L665 366L663 369L661 379L660 380L659 390L658 391L658 397L657 398L656 412L655 413L655 417L654 418L654 422L653 423L652 431L650 435L648 445L647 446L638 475L636 478L636 480L634 483L632 490L621 512L619 514L611 529L607 534L606 537L600 545L599 548L579 578L571 598L571 601L570 602L570 605L568 610L568 615L567 616L567 623L566 624L566 634L565 635L565 653L564 654L564 670L563 671L563 681L562 682L562 690L561 691L561 697L560 698L559 708L1342 708L1342 398L1337 397L1325 391L1316 385L1302 373L1296 370L1294 370L1283 364L1272 354L1266 346L1265 343L1263 341L1262 338L1256 329L1235 308L1232 304L1226 292L1225 287L1220 278L1196 254L1192 248L1181 225L1179 223L1177 218L1171 209L1158 196L1121 170L1113 162L1109 154L1109 141L1110 140L1112 132L1114 129L1114 127L1139 79Z"/>
<path fill="#df0000" fill-rule="evenodd" d="M807 79L808 82L813 88L815 92L836 118L836 119L840 123L853 141L858 152L858 160L852 170L843 178L838 181L809 212L802 222L794 237L786 245L781 248L779 248L775 250L761 252L756 255L751 260L749 263L749 268L761 274L767 281L767 288L762 297L759 300L750 305L737 305L736 304L732 304L731 303L717 303L708 307L696 320L690 331L688 333L685 340L672 360L671 364L669 367L669 369L666 376L666 380L665 381L665 386L664 387L664 392L663 393L662 407L661 408L661 414L660 415L660 421L659 422L659 428L658 429L658 434L657 435L656 444L655 445L655 448L654 449L654 452L653 453L650 468L647 475L647 478L646 479L643 490L641 493L640 498L635 508L635 510L622 536L620 538L612 553L594 579L588 593L587 605L586 606L586 679L585 680L585 688L584 689L584 696L583 697L583 704L582 705L582 708L1342 708L1342 410L1341 409L1336 408L1320 400L1314 396L1300 384L1280 371L1268 359L1263 352L1262 349L1260 347L1258 342L1256 340L1251 331L1240 319L1240 318L1235 313L1230 306L1217 280L1191 252L1187 244L1185 242L1176 223L1166 208L1157 199L1156 199L1136 182L1122 173L1110 160L1106 150L1106 145L1107 144L1108 136L1109 135L1111 127L1113 124L1113 122L1126 96L1126 94L1132 83L1133 79Z"/>
<path fill="#e50000" fill-rule="evenodd" d="M813 79L815 84L827 102L838 116L857 144L858 148L860 151L860 160L855 169L846 178L841 181L814 210L805 222L796 238L790 244L778 250L763 252L759 254L754 259L752 262L752 266L755 269L761 272L769 281L769 289L765 297L757 305L751 308L743 309L742 308L737 308L732 306L720 306L710 311L704 317L697 327L687 346L675 364L675 366L673 369L672 376L671 377L671 382L670 383L670 388L669 389L669 395L668 396L667 410L666 411L665 431L664 432L664 440L663 441L662 454L661 455L660 465L658 470L658 474L657 475L656 482L652 493L652 496L651 497L646 514L644 517L643 522L638 532L638 534L633 543L633 545L627 557L625 559L621 568L613 580L607 592L607 595L606 596L605 615L606 616L606 640L607 641L607 657L608 658L608 676L607 677L607 689L606 690L605 708L1342 708L1342 421L1339 421L1329 416L1327 416L1315 410L1303 402L1287 388L1286 388L1268 370L1259 357L1249 337L1228 308L1218 288L1212 279L1191 257L1186 250L1171 221L1165 212L1155 201L1154 201L1137 185L1122 175L1108 160L1104 150L1105 138L1106 137L1106 134L1107 133L1109 125L1111 122L1111 120L1113 117L1113 115L1115 112L1117 105L1120 100L1120 98L1123 93L1123 91L1125 88L1125 86L1127 83L1128 79ZM800 360L803 360L806 364L806 368L803 371L800 371L797 367L797 364Z"/>
<path fill="#ec0000" fill-rule="evenodd" d="M818 79L820 84L830 99L831 102L859 144L860 148L862 151L862 160L858 168L854 172L854 173L836 188L828 199L812 216L798 239L792 245L782 250L762 253L757 257L754 263L755 266L758 269L766 274L770 278L772 283L770 292L765 301L757 309L750 312L739 312L731 309L723 309L716 312L706 322L702 328L692 348L684 358L678 369L677 378L676 379L676 387L675 388L675 393L674 394L674 399L673 400L673 406L672 407L672 416L671 417L671 447L670 448L670 458L669 459L669 466L668 467L668 472L667 473L667 478L666 479L665 488L664 489L663 497L662 498L661 505L659 509L658 516L656 520L656 523L655 524L646 553L644 556L643 561L641 564L641 566L637 574L636 579L634 582L634 584L631 591L631 594L630 595L629 604L628 605L628 617L627 618L627 635L628 636L628 693L627 694L627 708L1342 708L1342 433L1339 433L1331 429L1329 429L1318 424L1316 424L1301 416L1293 410L1273 390L1259 370L1247 346L1247 344L1244 338L1227 312L1216 291L1207 278L1188 258L1186 254L1183 251L1177 239L1175 237L1169 224L1167 222L1162 213L1157 208L1157 207L1133 184L1122 177L1106 160L1102 150L1102 143L1103 142L1104 133L1105 132L1111 112L1113 109L1115 101L1120 90L1123 79ZM799 354L805 354L809 359L809 370L805 375L800 375L795 370L795 368L794 367L794 360Z"/>
<path fill="#f20000" fill-rule="evenodd" d="M823 79L834 101L836 103L840 111L844 116L845 119L857 137L864 151L864 160L856 173L837 190L826 205L815 216L800 240L795 245L783 251L764 253L758 258L757 260L757 265L762 270L766 272L773 279L773 281L774 282L773 289L770 295L770 297L763 308L756 314L748 317L742 317L741 316L734 315L730 313L725 313L719 316L711 324L704 336L704 338L701 343L701 345L699 349L684 368L684 371L683 372L683 384L682 385L682 391L681 392L681 396L679 401L678 413L677 414L677 422L678 423L678 439L679 440L679 458L678 459L677 479L676 480L676 486L675 487L675 492L674 493L674 498L673 499L673 504L672 505L672 509L671 510L671 514L670 515L668 529L667 530L666 538L665 539L665 542L663 547L663 551L662 552L662 555L661 556L661 559L660 560L660 563L659 564L659 567L658 568L658 571L657 572L657 575L655 580L655 584L654 585L654 589L653 590L653 594L652 595L652 600L651 601L651 608L650 609L650 620L649 621L649 705L648 706L648 708L1342 708L1342 447L1339 446L1335 443L1333 443L1329 441L1326 441L1325 440L1322 440L1321 439L1318 439L1302 433L1286 422L1273 408L1261 390L1248 363L1248 361L1246 358L1246 356L1241 345L1241 343L1234 329L1226 317L1219 302L1217 300L1216 297L1212 292L1209 286L1203 278L1185 259L1177 247L1175 242L1173 240L1166 225L1164 223L1160 215L1140 194L1140 193L1134 187L1122 179L1108 165L1103 158L1100 150L1101 137L1102 136L1104 125L1108 115L1108 112L1109 111L1119 79ZM802 348L807 349L811 353L811 355L812 356L812 368L811 369L811 372L810 374L804 379L800 378L794 372L791 366L791 356L792 354L796 350L801 349Z"/>
<path fill="#f80000" fill-rule="evenodd" d="M827 79L839 104L841 106L847 118L852 125L854 130L856 132L865 149L865 151L866 152L866 160L858 173L838 192L830 204L819 215L811 226L805 237L797 246L790 250L788 250L784 252L780 252L779 253L766 253L760 257L759 259L759 265L766 271L770 273L775 279L775 288L774 289L774 292L772 295L772 297L764 312L754 321L752 321L751 322L746 322L745 323L744 322L738 322L733 320L725 320L720 323L716 327L711 336L710 342L709 343L709 347L708 348L708 361L710 363L729 363L734 367L734 370L727 382L722 387L715 387L711 385L706 381L703 376L702 372L698 371L695 374L695 382L694 383L694 386L688 398L688 400L686 403L686 405L684 409L684 423L685 424L686 436L687 437L687 445L688 446L688 472L687 473L686 494L685 495L685 502L684 503L684 510L683 511L683 519L682 520L682 527L681 528L681 535L680 536L679 551L678 552L677 566L676 567L676 574L675 575L675 581L674 582L674 590L673 591L673 599L672 600L672 611L671 612L671 635L670 636L670 659L671 660L671 678L670 679L670 708L1342 708L1342 467L1337 465L1330 460L1328 460L1321 457L1313 456L1312 455L1304 453L1294 448L1282 439L1272 428L1270 424L1265 418L1255 400L1255 398L1249 385L1247 377L1245 374L1245 372L1241 362L1241 359L1240 358L1235 341L1233 338L1233 336L1229 330L1216 303L1200 279L1188 267L1188 266L1182 260L1180 256L1177 253L1157 216L1144 202L1139 195L1130 186L1122 181L1108 167L1100 156L1100 154L1099 153L1099 138L1100 137L1100 133L1101 132L1102 124L1104 120L1105 113L1108 106L1108 103L1110 99L1110 96L1112 92L1112 89L1114 85L1115 79ZM801 344L807 344L809 345L813 349L815 353L815 366L814 367L814 371L813 372L812 377L810 380L805 383L800 381L793 374L789 367L788 360L787 359L787 356L789 351L793 347Z"/>
<path fill="#fd0000" fill-rule="evenodd" d="M831 79L833 83L833 85L839 96L839 98L843 106L845 108L851 121L853 123L856 130L858 132L868 152L869 158L866 164L859 174L851 183L850 183L842 190L833 204L818 220L813 227L807 238L798 248L792 251L786 252L785 253L781 253L780 254L772 254L770 253L769 254L765 254L762 256L760 260L760 262L762 266L770 271L775 276L777 280L777 287L776 288L776 291L775 292L773 300L771 303L771 305L768 310L768 312L763 321L756 328L752 330L749 330L748 331L728 330L724 332L721 335L719 340L719 348L720 350L726 354L733 355L738 359L740 364L739 370L732 383L730 390L724 396L718 399L703 401L699 403L695 407L692 415L692 417L693 418L693 424L694 425L694 430L695 431L695 435L696 436L696 441L697 442L697 448L698 449L698 487L697 488L697 502L696 503L695 550L694 551L694 577L693 578L693 599L692 600L692 618L691 619L691 651L692 652L692 708L1342 708L1342 491L1341 490L1329 489L1328 488L1317 489L1316 488L1312 488L1304 483L1279 458L1278 458L1268 447L1264 441L1248 409L1248 407L1245 400L1244 393L1242 389L1242 386L1240 382L1240 379L1238 375L1238 372L1237 371L1237 368L1236 367L1236 364L1235 363L1235 360L1234 359L1231 344L1230 343L1229 338L1221 323L1221 321L1218 316L1218 314L1214 306L1196 279L1183 266L1183 265L1176 257L1170 246L1168 244L1155 218L1145 207L1134 192L1130 188L1122 183L1109 170L1109 169L1100 159L1097 153L1097 139L1098 138L1098 133L1099 132L1099 128L1101 123L1101 119L1102 118L1105 103L1106 102L1108 92L1109 91L1109 87L1110 86L1111 79ZM795 342L799 342L800 341L808 341L809 342L811 342L815 346L818 353L818 363L817 364L815 378L812 384L808 388L805 388L800 385L793 377L789 371L784 359L784 355L783 354L784 349L788 345Z"/>
<path fill="#ff0300" fill-rule="evenodd" d="M833 79L834 83L837 88L837 90L841 97L841 99L869 152L869 154L870 155L869 161L856 179L841 193L833 206L818 222L807 240L798 249L792 252L789 252L784 254L766 254L762 257L761 259L761 263L766 268L770 270L776 276L778 281L778 286L777 287L776 294L775 295L772 306L770 309L769 314L767 317L767 319L763 327L754 335L752 335L749 337L746 337L745 338L732 338L731 339L729 339L726 342L726 347L727 348L735 350L740 354L741 359L742 360L741 369L735 380L733 388L730 394L723 401L715 405L704 408L699 414L699 428L700 429L700 436L701 437L702 449L703 450L703 510L702 511L702 517L703 518L702 584L703 586L702 587L702 611L701 612L701 644L702 645L702 670L703 671L703 679L702 680L702 703L703 704L703 708L1342 708L1342 501L1341 500L1329 500L1318 505L1312 509L1305 509L1299 502L1294 491L1292 489L1287 480L1264 453L1259 445L1259 443L1255 436L1255 434L1251 427L1251 425L1245 414L1245 412L1242 405L1241 398L1240 397L1240 393L1239 392L1236 377L1234 373L1234 369L1232 364L1232 360L1231 359L1231 355L1229 350L1229 346L1228 345L1226 337L1221 328L1221 326L1218 321L1218 319L1212 306L1205 297L1204 294L1193 278L1177 261L1171 252L1170 249L1168 247L1166 242L1164 240L1155 221L1150 214L1144 208L1135 195L1127 187L1122 184L1110 172L1110 171L1104 165L1098 157L1096 152L1096 140L1097 139L1097 134L1098 133L1099 123L1100 122L1100 119L1102 114L1102 110L1103 109L1103 106L1104 105L1104 102L1106 97L1106 93L1108 88L1109 79ZM788 342L790 342L791 341L796 341L797 340L810 340L816 345L818 349L818 351L819 352L819 364L818 365L818 369L817 370L817 376L813 387L811 390L808 392L805 392L798 385L788 371L783 361L783 359L781 355L781 348Z"/>
<path fill="#ff0900" fill-rule="evenodd" d="M835 79L837 87L844 101L844 103L870 153L871 158L865 168L856 180L842 193L834 206L819 222L808 240L801 248L794 252L788 253L787 254L782 254L781 255L767 254L762 258L762 263L767 268L771 270L776 275L778 279L778 289L777 290L775 300L768 319L766 329L764 333L759 338L750 342L746 345L744 349L744 361L743 362L743 367L741 370L740 374L737 378L737 380L734 386L734 389L729 398L721 406L708 413L705 417L705 419L704 420L704 435L705 436L705 443L706 444L706 451L707 452L707 468L708 469L708 529L709 530L709 584L710 585L710 593L709 594L709 645L710 646L710 667L711 668L711 708L1342 708L1342 509L1340 508L1331 508L1315 516L1305 516L1301 514L1294 507L1282 485L1259 454L1253 442L1253 440L1251 437L1249 430L1246 425L1246 423L1243 418L1243 416L1240 410L1240 407L1238 402L1238 398L1236 393L1236 389L1235 388L1235 385L1233 380L1233 376L1231 371L1231 367L1230 366L1230 362L1229 361L1229 357L1228 356L1228 352L1227 351L1226 343L1225 342L1224 337L1220 330L1220 328L1217 323L1216 318L1214 315L1214 313L1212 309L1200 292L1195 283L1180 267L1170 253L1164 241L1162 239L1158 231L1158 229L1153 220L1142 207L1134 195L1126 187L1121 184L1111 174L1111 173L1100 161L1096 154L1096 151L1095 150L1096 135L1097 134L1097 129L1098 128L1099 119L1101 114L1101 110L1103 105L1103 101L1105 96L1105 92L1106 91L1106 87L1107 86L1108 79ZM785 341L787 341L788 340L794 340L795 339L810 339L817 345L819 349L819 351L820 352L820 364L819 365L819 369L818 370L817 382L814 390L808 397L805 397L802 394L800 389L786 369L780 357L780 355L778 351L778 347L781 343Z"/>
<path fill="#ff1000" fill-rule="evenodd" d="M836 79L838 86L842 94L842 96L846 103L846 105L866 145L869 149L869 151L872 157L871 158L871 160L856 181L843 193L836 205L821 221L809 240L801 249L796 252L786 254L785 255L772 255L771 254L769 254L763 257L762 261L764 265L772 270L776 274L779 280L778 292L776 296L776 299L774 303L774 306L773 307L771 317L770 318L770 324L769 325L769 339L762 343L755 345L749 350L746 357L746 360L745 361L745 364L744 365L743 370L736 383L734 392L730 400L721 410L713 416L709 423L708 436L709 437L709 445L710 446L710 453L711 454L712 477L713 478L713 500L714 501L715 557L716 558L716 619L717 620L717 649L718 650L718 669L719 670L719 696L720 697L720 708L1342 708L1342 520L1337 518L1333 518L1332 519L1329 519L1328 520L1325 520L1320 522L1306 522L1296 517L1290 511L1284 502L1275 485L1257 459L1250 445L1247 435L1245 432L1245 430L1241 422L1240 417L1238 414L1238 411L1237 410L1236 403L1235 402L1235 398L1234 397L1234 393L1232 388L1232 384L1230 379L1230 375L1229 374L1229 370L1228 369L1228 365L1227 364L1227 359L1226 358L1226 353L1225 352L1224 344L1223 343L1221 335L1218 330L1218 328L1214 320L1213 315L1209 307L1191 280L1176 264L1165 247L1154 224L1137 202L1133 195L1113 177L1113 176L1101 163L1096 156L1096 154L1095 153L1095 138L1096 137L1097 125L1098 124L1098 120L1099 119L1099 115L1100 114L1100 110L1102 105L1102 101L1103 100L1103 96L1104 95L1104 91L1105 90L1105 86L1106 85L1106 80L1107 79ZM777 340L781 340L782 339L791 339L792 338L809 338L815 341L820 349L820 351L821 352L821 365L820 366L820 370L819 371L819 379L818 380L818 384L813 397L806 403L804 403L801 400L800 393L797 386L787 372L774 348L774 345L773 344L774 342Z"/>
<path fill="#ff1700" fill-rule="evenodd" d="M838 79L838 82L839 83L840 88L842 91L844 98L848 105L848 107L856 122L856 124L860 132L862 134L871 152L871 154L872 155L872 160L861 174L856 182L844 193L835 208L824 219L808 243L801 250L792 254L783 255L782 256L777 256L776 255L766 255L763 258L763 262L764 264L772 269L777 274L779 278L779 290L778 291L778 294L777 295L777 298L776 299L776 302L774 306L773 314L772 315L772 328L774 333L776 335L781 337L808 337L809 338L812 338L815 340L820 346L820 348L822 352L822 365L821 366L821 370L820 371L820 381L819 382L819 386L818 387L818 390L817 391L816 396L810 405L808 406L802 406L799 403L799 401L798 400L798 391L796 386L783 367L782 364L776 355L768 348L766 348L765 347L763 348L759 348L752 352L749 356L748 360L746 363L746 365L744 368L744 370L741 376L739 378L739 380L737 383L734 395L729 405L718 417L714 423L713 430L712 431L713 447L714 448L714 455L715 456L715 463L716 464L716 471L717 472L717 480L718 481L719 507L720 508L721 544L722 545L722 567L723 568L724 635L725 636L725 653L726 654L726 670L727 671L727 688L728 689L728 704L729 705L729 708L1342 708L1342 531L1337 530L1336 529L1312 529L1311 528L1307 528L1306 527L1301 526L1294 522L1285 513L1279 504L1278 501L1276 499L1275 496L1273 494L1271 489L1269 487L1259 469L1257 467L1256 464L1254 462L1246 445L1245 440L1243 437L1242 432L1240 429L1240 427L1234 411L1233 403L1232 402L1232 398L1231 397L1231 393L1230 392L1230 388L1229 387L1229 383L1228 382L1228 378L1227 377L1227 373L1226 372L1226 367L1225 366L1225 361L1224 360L1224 355L1223 354L1222 345L1221 344L1218 333L1214 325L1212 317L1207 307L1189 280L1180 271L1180 270L1173 262L1167 253L1165 248L1163 246L1152 223L1140 208L1132 195L1114 179L1109 172L1098 160L1095 155L1095 152L1094 151L1095 133L1096 132L1097 121L1098 120L1098 116L1099 115L1099 111L1100 110L1100 106L1101 105L1101 100L1102 99L1102 95L1103 94L1103 90L1104 89L1105 79Z"/>
<path fill="#ff1d00" fill-rule="evenodd" d="M839 79L839 81L840 82L842 90L844 93L844 95L846 98L846 100L853 114L853 116L873 155L873 159L870 164L863 172L856 183L846 192L837 207L822 223L813 236L812 239L801 251L797 253L795 253L791 255L787 255L786 256L774 256L773 255L768 255L764 258L764 262L765 264L773 269L777 273L780 280L780 288L779 289L779 293L778 294L778 297L777 298L777 301L775 306L774 318L773 319L775 329L779 333L783 335L787 335L788 336L806 336L807 337L811 337L815 339L821 346L821 348L823 352L823 365L822 366L822 372L821 373L821 384L820 385L820 389L819 390L819 393L818 394L817 399L815 403L811 407L807 409L800 408L797 405L797 392L796 391L796 388L783 367L780 364L778 360L771 353L766 351L761 351L754 354L749 360L746 366L746 368L739 380L733 401L729 409L721 419L717 427L717 430L716 431L716 442L717 443L718 456L719 457L719 462L720 463L720 468L721 469L721 474L722 475L722 480L723 481L723 487L724 488L725 507L726 508L726 520L727 521L728 554L729 555L729 574L730 575L730 599L731 600L731 625L732 626L732 643L733 644L733 657L734 658L734 671L735 672L735 685L736 686L737 708L1342 708L1342 541L1334 538L1323 537L1322 536L1316 536L1315 535L1307 534L1301 531L1299 531L1291 526L1281 516L1274 506L1268 494L1262 485L1259 478L1257 476L1254 469L1252 467L1244 450L1243 445L1241 442L1241 440L1233 418L1233 415L1232 414L1231 407L1230 406L1230 402L1229 401L1229 397L1228 396L1228 392L1227 391L1227 387L1226 386L1226 381L1225 380L1225 376L1224 375L1224 370L1223 369L1223 364L1222 363L1222 358L1221 357L1221 352L1220 351L1220 347L1219 346L1218 339L1216 336L1216 334L1215 333L1214 328L1212 325L1210 317L1205 307L1197 296L1196 293L1190 284L1179 272L1168 257L1163 247L1161 245L1151 224L1141 211L1131 195L1125 189L1124 189L1116 182L1116 181L1110 175L1105 168L1099 162L1094 154L1094 135L1095 134L1095 128L1096 127L1096 122L1097 121L1097 116L1098 115L1098 111L1099 110L1099 106L1100 105L1100 100L1101 99L1101 95L1102 94L1102 89L1103 88L1103 82L1104 81L1104 79Z"/>
<path fill="#ff2400" fill-rule="evenodd" d="M840 79L844 92L849 103L849 105L858 123L858 125L873 154L874 159L863 173L855 185L847 192L835 211L820 227L811 242L805 249L801 252L794 255L790 255L789 256L785 256L784 257L766 256L764 259L764 261L766 264L773 268L777 272L780 278L780 291L779 292L779 296L778 297L778 300L776 305L776 310L775 311L775 322L778 329L783 333L789 334L790 335L801 335L802 336L810 336L811 337L813 337L820 343L823 349L823 351L824 352L824 365L823 366L823 373L822 374L822 387L821 388L821 392L820 393L819 399L816 405L810 410L808 410L807 411L802 411L798 409L795 405L795 399L796 398L795 388L787 374L784 371L779 363L773 357L767 354L760 354L759 355L757 355L751 360L745 372L743 374L738 385L736 396L735 397L734 403L732 406L732 408L727 417L725 419L724 422L722 424L722 426L720 430L720 445L721 446L722 456L724 461L725 470L726 471L727 479L728 480L728 484L729 485L730 497L731 498L731 506L732 507L732 516L733 517L734 544L735 545L735 561L736 562L736 579L737 580L737 599L738 600L739 635L740 636L740 648L741 649L741 660L742 661L742 671L743 672L743 682L744 683L744 692L745 693L746 708L1342 708L1342 550L1332 546L1329 546L1328 545L1325 545L1320 543L1316 543L1312 541L1306 540L1295 535L1289 531L1274 515L1269 506L1267 504L1264 497L1262 495L1256 482L1254 480L1241 452L1241 450L1240 449L1239 444L1237 441L1236 435L1231 422L1231 419L1230 418L1230 415L1229 414L1229 411L1227 406L1227 402L1226 401L1225 391L1224 390L1224 385L1223 384L1223 379L1222 378L1222 373L1221 372L1221 367L1220 366L1220 361L1219 360L1219 354L1218 353L1217 344L1216 343L1215 337L1212 331L1208 317L1201 304L1192 291L1191 288L1175 269L1166 256L1161 246L1159 244L1149 223L1141 213L1130 195L1111 177L1107 171L1100 164L1094 156L1094 153L1093 152L1093 139L1094 138L1094 130L1095 129L1095 123L1096 122L1097 111L1098 110L1099 100L1100 99L1100 94L1101 93L1102 79Z"/>
<path fill="#ff2a00" fill-rule="evenodd" d="M842 79L842 82L843 83L848 100L856 117L856 119L861 128L861 130L874 155L874 160L865 171L855 186L851 190L850 190L845 196L844 199L842 201L837 210L822 226L812 242L804 251L799 254L789 256L788 257L782 257L780 258L779 257L768 256L765 258L765 261L770 266L774 268L779 274L779 276L781 280L781 289L780 290L780 294L779 295L779 299L778 300L778 304L777 305L777 310L776 311L776 319L779 327L783 331L788 333L798 334L799 335L809 335L810 336L812 336L816 338L821 343L824 349L824 351L825 352L825 366L824 367L823 390L822 391L821 399L818 405L812 411L810 412L800 412L798 411L794 407L795 391L794 390L793 385L784 371L773 359L767 356L760 356L756 358L750 364L740 382L740 384L738 388L738 391L737 392L737 396L736 397L734 408L724 428L724 431L723 432L724 447L725 448L725 451L726 452L729 467L731 471L731 474L732 475L732 478L733 479L733 482L735 487L735 491L736 492L736 496L737 497L737 503L738 504L739 522L740 523L740 535L741 536L741 551L742 552L742 567L743 568L743 583L744 584L744 600L745 601L746 629L747 630L747 641L748 642L748 652L749 653L749 662L750 663L751 681L752 682L752 689L753 690L753 697L754 698L754 705L755 706L755 708L1342 708L1342 558L1337 557L1334 555L1332 555L1322 551L1319 551L1318 550L1307 547L1302 544L1300 544L1287 536L1273 522L1262 505L1244 469L1244 467L1239 457L1239 455L1231 433L1231 430L1229 426L1229 423L1228 422L1228 419L1227 418L1227 415L1225 410L1225 406L1224 405L1224 400L1223 399L1223 395L1222 394L1222 389L1221 388L1221 383L1220 382L1220 377L1219 376L1219 371L1218 370L1218 364L1217 363L1217 357L1216 356L1215 346L1214 345L1213 338L1212 337L1207 320L1205 317L1205 315L1200 306L1198 304L1197 301L1190 291L1189 288L1177 274L1165 257L1159 245L1157 243L1153 235L1153 233L1149 227L1147 222L1139 212L1129 195L1112 179L1103 167L1096 160L1093 155L1093 150L1092 149L1092 145L1093 144L1093 133L1094 132L1095 118L1096 117L1096 112L1097 111L1097 106L1098 105L1098 100L1099 99L1101 79Z"/>
<path fill="#ff3100" fill-rule="evenodd" d="M843 79L844 85L845 86L849 100L851 103L851 105L853 108L855 115L859 122L859 124L864 133L864 135L875 156L875 159L873 163L864 173L859 182L846 196L841 206L836 213L824 225L811 245L804 252L801 254L799 254L795 256L792 256L791 257L787 257L786 258L775 258L774 257L767 257L766 258L766 261L777 270L781 278L781 293L780 294L780 298L779 299L779 303L778 304L778 309L777 310L777 317L778 318L779 324L783 329L789 332L791 332L792 333L797 333L798 334L806 334L807 335L814 336L822 343L825 349L825 351L826 352L826 366L825 367L825 385L824 386L823 398L818 408L813 412L808 414L800 414L798 413L793 408L793 399L794 398L794 390L793 389L793 387L784 372L780 368L780 367L772 360L767 358L760 358L756 360L749 367L748 370L746 372L741 381L741 383L739 387L739 390L738 391L738 395L737 396L736 407L735 408L732 419L729 424L729 426L727 430L727 443L728 444L730 455L731 456L731 458L732 459L732 461L740 483L740 486L741 487L741 490L743 495L744 507L745 508L746 527L747 528L747 541L748 542L748 556L749 557L749 571L750 572L750 586L751 587L751 600L752 601L752 613L753 614L753 625L754 626L754 636L755 637L755 645L756 646L756 655L757 656L758 672L759 673L759 680L760 681L760 687L761 688L763 708L1342 708L1342 567L1331 562L1326 561L1323 559L1321 559L1320 558L1315 557L1312 555L1310 555L1307 553L1305 553L1290 545L1282 539L1273 530L1273 529L1266 521L1263 515L1261 513L1259 508L1257 506L1250 492L1250 490L1245 481L1245 479L1239 467L1239 465L1236 459L1236 457L1231 444L1231 441L1228 434L1228 431L1227 430L1227 427L1226 426L1226 423L1225 422L1225 419L1223 414L1222 405L1221 404L1221 399L1220 398L1220 393L1219 392L1219 387L1218 386L1218 381L1217 380L1217 374L1216 373L1216 367L1215 366L1215 360L1214 359L1213 348L1212 347L1210 336L1209 335L1204 318L1190 293L1184 284L1173 271L1163 256L1148 226L1139 214L1130 198L1127 194L1113 181L1113 180L1109 176L1105 170L1098 163L1093 156L1093 154L1092 153L1092 136L1093 135L1093 127L1094 126L1094 120L1095 119L1095 113L1096 112L1096 106L1097 105L1097 99L1098 98L1098 92L1099 91L1100 79Z"/>
<path fill="#ff3800" fill-rule="evenodd" d="M844 79L844 81L847 88L847 91L848 92L850 100L852 103L853 108L861 125L861 127L866 136L866 138L875 155L875 160L864 174L859 183L847 196L838 212L826 224L812 245L804 253L798 256L795 256L790 258L785 258L784 259L776 259L771 257L767 258L767 261L773 265L778 270L782 280L782 290L781 291L781 296L780 297L779 308L778 309L778 315L779 316L779 320L783 327L787 330L789 330L792 332L803 333L804 334L810 334L817 337L823 343L826 349L826 352L827 353L827 366L826 367L826 390L825 391L824 400L822 405L816 412L810 415L806 415L805 416L798 415L792 408L793 389L790 382L784 373L779 368L779 367L773 362L769 360L759 360L751 366L745 375L741 383L740 389L739 390L739 394L738 395L738 402L737 403L736 414L735 415L734 421L730 432L730 438L731 439L731 444L733 448L733 451L736 457L737 462L745 479L745 481L748 488L748 491L749 492L750 501L751 502L752 518L753 519L753 531L754 532L754 546L755 547L755 561L756 562L756 575L757 576L757 588L758 589L758 600L759 601L760 622L761 623L761 631L762 632L762 640L763 641L764 657L765 658L765 664L766 665L766 671L767 672L767 678L768 679L768 685L769 686L769 691L770 692L770 697L771 698L772 708L1342 708L1342 575L1340 575L1326 568L1324 568L1321 566L1319 566L1316 564L1309 562L1293 554L1283 547L1268 532L1262 524L1247 496L1247 494L1243 487L1243 485L1241 482L1241 480L1238 475L1237 470L1235 467L1235 465L1229 449L1229 446L1227 442L1226 435L1224 431L1223 423L1222 422L1221 414L1220 413L1220 409L1219 408L1217 391L1216 390L1216 384L1215 383L1215 378L1214 377L1214 371L1213 370L1213 364L1212 363L1211 351L1210 350L1209 341L1207 337L1207 334L1206 333L1202 319L1188 293L1164 260L1163 257L1158 250L1146 225L1136 211L1129 198L1126 194L1113 182L1107 173L1094 159L1092 155L1092 151L1091 150L1092 130L1093 129L1093 122L1094 121L1094 114L1095 113L1095 107L1096 106L1096 99L1097 98L1097 91L1098 90L1098 82L1099 81L1099 79Z"/>
<path fill="#ff3e00" fill-rule="evenodd" d="M845 79L846 80L846 83L849 91L849 94L850 95L851 100L853 103L855 111L857 114L859 121L862 126L862 128L867 137L867 139L876 156L876 159L874 163L866 172L860 181L859 184L848 196L840 211L824 228L817 238L814 244L807 252L800 256L794 257L793 258L789 258L788 259L784 259L783 260L776 260L772 258L769 258L768 259L771 263L776 266L782 278L782 294L781 295L781 300L780 301L779 314L780 315L780 319L783 325L790 330L792 330L796 332L808 333L818 337L823 342L827 349L827 352L828 353L828 367L827 368L827 394L826 395L826 399L822 408L814 415L808 416L807 417L799 417L797 416L792 411L792 409L791 408L792 388L790 383L784 374L774 364L768 361L761 361L756 363L750 369L744 378L743 382L741 385L741 388L739 393L738 413L737 414L737 418L736 419L736 423L735 424L735 428L734 429L734 440L735 441L735 444L736 445L738 453L748 473L751 477L751 479L753 482L753 484L756 491L756 495L757 496L758 509L759 510L759 521L760 522L761 551L762 552L762 565L763 566L763 578L764 579L764 590L765 591L765 600L766 601L767 620L768 621L768 628L769 629L769 636L770 637L770 644L771 645L773 665L774 666L774 671L775 672L775 677L776 678L776 683L777 684L777 689L778 690L778 694L779 695L779 699L780 700L780 705L781 706L781 708L1342 708L1342 584L1328 577L1326 577L1321 574L1314 572L1294 562L1281 553L1262 533L1248 509L1248 507L1243 498L1243 496L1241 493L1241 491L1235 478L1235 476L1227 454L1227 451L1225 447L1225 444L1224 443L1224 440L1223 439L1223 436L1222 435L1222 432L1220 427L1220 423L1219 422L1217 408L1216 407L1216 401L1215 400L1215 395L1214 394L1214 389L1213 388L1213 382L1212 381L1212 375L1211 374L1210 360L1209 359L1209 354L1208 353L1207 343L1206 342L1205 335L1204 334L1200 320L1198 317L1198 315L1184 290L1171 273L1160 256L1145 226L1136 213L1130 201L1125 194L1114 184L1108 175L1095 161L1092 156L1092 154L1091 153L1091 134L1092 133L1093 115L1094 114L1094 107L1095 106L1095 99L1096 98L1096 90L1097 89L1097 79Z"/>
<path fill="#ff4500" fill-rule="evenodd" d="M847 79L848 87L850 91L850 94L851 95L854 106L856 109L857 114L859 117L861 124L864 129L864 131L868 138L868 140L876 155L876 160L873 165L865 174L859 185L849 196L839 214L826 227L813 247L806 254L800 257L797 257L792 259L788 259L787 260L783 260L782 261L773 261L771 260L777 265L781 273L782 280L783 281L783 291L782 292L782 298L781 299L781 305L780 306L780 314L781 315L782 321L784 324L790 329L792 329L796 331L799 331L800 332L811 333L816 335L824 342L827 347L827 349L829 353L829 368L828 369L828 397L827 398L826 404L824 408L815 416L813 416L809 418L803 418L802 419L801 418L797 418L794 416L790 408L790 403L791 402L791 398L792 397L792 391L791 390L791 387L787 379L774 365L766 362L759 363L751 369L746 376L742 384L741 391L740 392L740 406L739 407L739 419L738 420L737 435L738 436L738 441L739 442L740 447L742 450L742 452L752 468L757 474L762 484L762 487L764 492L765 508L766 509L766 524L767 525L767 541L768 542L769 569L770 570L770 580L771 581L771 591L772 592L772 600L773 601L774 618L775 619L776 633L777 634L777 640L778 641L778 647L779 648L779 653L780 654L782 671L783 672L783 676L784 677L784 681L785 682L785 687L787 692L787 696L788 697L788 701L789 702L790 708L1342 708L1342 594L1329 586L1327 586L1320 582L1318 582L1296 571L1294 569L1285 564L1275 555L1274 555L1263 543L1257 535L1254 529L1252 527L1242 507L1242 505L1236 492L1235 487L1233 484L1233 482L1227 466L1227 463L1224 456L1224 453L1223 452L1223 449L1222 448L1222 445L1221 444L1221 441L1219 436L1219 432L1218 431L1217 423L1216 422L1216 418L1215 417L1213 400L1212 399L1212 393L1211 392L1211 386L1210 385L1210 379L1209 378L1209 372L1208 371L1208 364L1207 363L1206 351L1205 350L1205 346L1204 345L1204 341L1203 340L1202 333L1201 332L1197 318L1182 290L1172 277L1164 265L1160 257L1158 255L1155 248L1153 246L1149 238L1149 236L1146 230L1133 210L1129 201L1124 194L1115 186L1105 172L1093 159L1091 155L1091 151L1090 150L1090 140L1091 139L1091 127L1092 126L1092 117L1093 116L1093 108L1094 107L1094 99L1095 98L1096 79Z"/>
<path fill="#ff4b00" fill-rule="evenodd" d="M848 79L850 90L852 94L852 97L853 98L857 112L859 115L860 120L865 130L865 132L868 137L868 139L876 154L876 157L877 158L876 159L876 161L867 172L862 181L860 183L859 186L850 196L840 214L824 231L814 247L806 255L802 257L796 258L795 259L791 259L786 261L783 261L782 262L780 262L778 264L782 277L783 278L783 296L782 297L782 303L781 304L781 314L784 322L789 327L795 330L803 331L804 332L809 332L817 335L825 342L828 347L829 353L830 354L830 369L829 370L829 377L830 378L830 393L829 394L829 400L828 401L828 403L825 409L816 417L814 417L810 419L807 419L806 420L798 420L794 418L792 416L790 411L790 400L791 399L791 389L790 388L790 386L784 376L775 367L769 364L760 364L756 366L748 374L743 383L742 389L741 390L741 396L740 397L740 402L741 403L740 430L741 431L741 438L742 439L742 442L744 445L744 447L750 457L767 474L771 485L771 491L772 492L772 507L773 508L774 548L775 549L775 561L776 562L777 583L778 584L778 592L779 593L779 600L780 601L781 616L782 617L782 623L783 624L783 630L784 631L784 636L785 637L785 642L786 643L788 660L789 661L789 665L790 666L792 680L793 681L794 689L795 690L796 698L797 699L797 702L798 703L799 708L1342 708L1342 605L1338 603L1329 596L1295 579L1278 567L1258 546L1252 537L1251 534L1249 532L1240 514L1240 512L1234 499L1234 497L1233 496L1233 494L1225 472L1225 469L1223 465L1223 462L1222 461L1220 451L1219 450L1219 446L1217 441L1217 437L1215 432L1214 422L1213 421L1213 417L1212 416L1212 410L1211 409L1211 404L1210 403L1210 397L1209 396L1209 390L1208 389L1208 383L1207 382L1207 376L1206 375L1206 368L1205 367L1205 361L1204 360L1203 348L1202 347L1202 343L1201 342L1199 331L1198 330L1195 319L1184 297L1165 269L1164 266L1156 254L1143 227L1133 212L1128 201L1123 194L1112 183L1102 169L1093 160L1091 156L1091 154L1090 153L1090 131L1091 130L1091 119L1092 118L1092 110L1093 109L1093 99L1094 98L1095 79Z"/>
<path fill="#ff5200" fill-rule="evenodd" d="M849 79L849 82L850 83L851 90L853 94L853 97L856 104L856 107L858 110L860 118L862 121L862 123L864 126L866 133L869 138L869 140L876 153L877 160L874 165L866 174L859 187L849 199L842 213L826 230L813 250L805 257L803 257L799 259L795 259L794 260L786 261L785 262L783 262L780 265L780 268L781 269L781 272L782 273L782 276L784 281L784 293L783 294L783 301L782 302L782 314L783 315L784 320L788 325L795 329L801 330L802 331L806 331L807 332L811 332L820 336L826 342L829 347L830 353L831 354L831 397L830 398L829 405L825 412L817 418L815 418L811 420L808 420L807 421L803 421L802 422L795 421L791 417L790 412L789 411L789 402L790 401L790 396L791 395L789 385L785 378L780 373L780 372L772 366L770 366L769 365L760 365L756 367L747 377L743 385L742 392L741 393L743 431L744 432L745 440L747 443L748 447L758 458L765 462L774 464L779 468L780 539L781 540L781 554L782 555L782 565L783 566L783 575L784 576L785 593L786 594L787 608L788 609L789 621L790 622L792 639L793 640L793 644L794 645L794 650L795 651L797 665L799 670L799 674L800 675L800 678L802 683L802 687L803 688L803 691L805 695L805 698L806 699L806 702L807 703L808 708L1342 708L1342 617L1338 615L1334 611L1324 604L1314 599L1312 597L1305 594L1303 592L1298 590L1283 580L1271 569L1270 569L1259 557L1253 549L1241 528L1241 526L1237 519L1237 517L1233 509L1233 507L1232 506L1232 504L1224 482L1224 479L1222 475L1221 468L1218 460L1218 456L1217 455L1217 452L1215 447L1215 443L1214 442L1214 438L1213 437L1213 433L1212 432L1212 427L1211 426L1209 409L1208 408L1208 402L1207 401L1207 395L1206 394L1206 388L1205 387L1205 380L1204 379L1204 372L1203 371L1201 351L1200 350L1199 341L1198 340L1198 337L1197 336L1197 333L1196 332L1196 329L1195 328L1193 320L1179 292L1164 270L1156 255L1154 253L1140 224L1133 214L1127 201L1122 194L1112 184L1108 177L1096 164L1090 155L1090 150L1089 149L1089 138L1090 137L1090 123L1091 122L1091 111L1092 110L1092 100L1093 99L1093 86L1094 85L1094 79Z"/>
<path fill="#ff5900" fill-rule="evenodd" d="M850 79L853 94L855 98L855 101L856 102L861 119L863 122L863 124L869 137L869 139L876 152L876 154L877 155L877 161L868 172L859 188L851 197L841 216L824 234L815 249L807 257L802 259L799 259L798 260L794 260L793 261L786 262L781 266L781 269L783 274L783 278L784 279L784 285L785 286L785 289L784 290L784 298L783 299L783 314L786 321L791 326L797 329L813 332L821 336L827 342L830 347L831 354L832 355L832 400L831 401L830 407L827 412L822 417L816 420L810 421L809 422L805 422L804 423L795 423L793 422L789 416L789 411L788 410L788 405L789 404L789 399L790 398L790 390L789 389L789 386L781 374L778 371L769 366L760 366L756 368L747 378L744 384L743 390L742 391L742 406L743 407L743 416L744 417L745 427L746 428L746 431L747 432L747 435L748 436L749 441L754 449L763 455L765 455L766 456L771 456L779 452L784 447L789 446L793 450L793 453L794 454L793 456L793 461L790 468L789 476L788 477L788 483L787 484L787 496L786 497L786 529L787 530L788 559L789 560L789 569L790 570L791 586L792 587L792 593L793 594L793 600L794 601L794 607L795 608L797 625L798 626L798 630L799 631L799 636L800 637L801 646L803 651L804 660L805 661L805 664L806 665L806 668L807 669L807 672L808 673L808 676L809 677L812 692L814 696L814 699L815 700L817 708L1342 708L1342 630L1323 615L1314 610L1309 606L1306 605L1304 603L1301 602L1277 585L1254 561L1246 549L1244 544L1242 542L1233 522L1233 520L1230 514L1230 512L1225 499L1225 496L1222 489L1222 486L1220 482L1220 479L1219 478L1219 475L1218 474L1218 471L1217 470L1217 467L1215 462L1215 458L1213 453L1213 449L1212 448L1212 444L1211 443L1211 438L1210 437L1210 433L1209 432L1209 427L1208 426L1207 414L1206 413L1206 407L1205 406L1205 399L1204 398L1204 392L1203 391L1203 385L1202 384L1202 377L1201 376L1201 369L1200 368L1200 361L1199 360L1198 348L1197 347L1197 343L1196 342L1193 327L1190 321L1189 316L1178 294L1168 279L1167 276L1163 271L1158 261L1156 259L1153 252L1151 250L1141 228L1133 216L1125 199L1113 186L1106 175L1101 170L1101 169L1092 160L1089 153L1089 127L1090 126L1090 114L1091 113L1092 83L1093 82L1093 79Z"/>
<path fill="#ff5f00" fill-rule="evenodd" d="M851 79L852 81L852 85L853 86L853 90L855 95L855 98L858 105L858 108L859 109L862 120L864 123L865 128L870 138L870 140L877 154L877 157L878 158L877 159L877 162L867 174L859 189L850 200L842 216L826 233L814 252L809 257L805 259L786 263L784 264L782 267L783 276L784 277L784 281L785 282L784 314L787 321L791 325L797 328L799 328L803 330L811 331L819 334L828 342L832 350L832 354L833 355L833 383L834 384L834 398L833 399L833 403L832 404L831 409L829 412L820 420L818 420L814 422L811 422L810 423L807 423L806 424L803 424L802 425L799 425L798 426L793 425L790 422L788 417L788 402L789 401L789 395L790 394L789 393L789 388L788 387L788 385L782 376L774 369L769 367L761 367L760 368L758 368L749 376L745 383L745 385L743 389L743 395L742 396L743 398L743 407L744 408L744 415L745 416L745 419L749 429L749 432L750 433L751 438L755 445L764 451L771 451L776 449L782 444L786 442L790 442L794 445L797 451L797 456L798 457L798 459L797 460L797 468L796 469L795 481L794 482L794 490L793 491L793 541L794 542L795 564L796 565L796 572L797 573L797 580L798 581L799 594L800 595L800 600L801 601L801 606L802 607L802 612L803 613L803 617L804 618L804 623L805 624L806 633L808 638L808 642L810 647L810 651L811 652L811 655L812 656L812 659L813 660L816 675L817 676L818 682L820 686L820 689L826 705L826 708L1342 708L1342 643L1321 626L1314 622L1311 619L1281 599L1258 577L1243 556L1230 528L1230 526L1227 520L1226 514L1222 504L1222 501L1220 497L1220 494L1219 493L1219 490L1218 489L1218 486L1217 485L1217 482L1216 481L1216 478L1215 477L1215 474L1213 469L1213 465L1212 464L1212 460L1211 459L1211 455L1210 454L1210 450L1209 449L1209 445L1208 444L1207 433L1206 432L1206 426L1205 425L1205 419L1204 418L1204 412L1203 411L1203 404L1202 403L1202 397L1201 396L1201 389L1200 388L1200 382L1199 381L1199 374L1198 373L1198 366L1197 365L1197 358L1196 357L1195 346L1194 345L1194 341L1193 340L1192 332L1191 331L1187 317L1176 294L1174 292L1172 287L1165 277L1156 260L1154 258L1138 225L1133 218L1128 208L1128 206L1125 202L1124 199L1113 187L1107 177L1094 163L1089 155L1089 149L1088 148L1088 135L1089 134L1089 117L1090 116L1090 102L1091 101L1091 79Z"/>
<path fill="#ff6600" fill-rule="evenodd" d="M852 79L853 80L854 90L855 91L857 102L860 109L860 112L861 113L863 121L865 124L866 129L870 137L870 139L877 153L878 160L876 164L866 176L862 185L858 191L852 198L844 215L827 233L822 240L816 251L808 259L803 260L802 261L797 261L796 262L788 263L786 264L783 268L783 273L784 274L785 284L786 285L784 310L785 311L785 315L790 323L796 327L798 327L802 329L805 329L806 330L809 330L810 331L813 331L820 334L829 342L832 348L833 355L834 356L834 381L835 382L835 402L834 403L834 406L830 414L825 419L816 423L812 423L796 429L792 429L789 426L787 421L787 405L788 404L788 399L789 398L789 390L785 381L777 372L770 368L760 368L758 369L750 376L746 382L746 384L744 387L744 391L743 392L743 401L744 402L745 414L756 441L760 445L764 447L772 447L778 444L784 439L788 437L790 437L792 438L797 444L801 454L801 462L802 463L802 466L801 467L801 480L800 481L800 491L799 492L799 537L800 538L800 549L801 550L802 568L803 569L803 575L804 576L804 582L805 583L807 600L808 601L808 605L809 606L809 611L810 612L811 621L812 622L813 630L815 635L815 639L816 640L819 655L821 659L822 666L824 670L824 673L827 680L827 683L828 684L828 686L836 708L1342 708L1342 657L1330 646L1314 634L1307 630L1304 627L1297 623L1281 610L1280 610L1258 589L1258 588L1253 583L1248 575L1245 572L1244 569L1239 562L1230 543L1230 541L1228 538L1228 536L1222 520L1222 517L1218 506L1218 503L1217 502L1217 499L1216 498L1216 495L1214 490L1214 486L1213 485L1213 482L1211 477L1211 473L1210 472L1210 468L1209 467L1209 463L1208 462L1208 458L1207 457L1207 452L1206 451L1206 446L1205 445L1203 425L1202 424L1202 417L1201 416L1201 410L1200 409L1200 402L1199 401L1199 394L1198 393L1198 386L1197 385L1196 370L1195 369L1195 363L1194 362L1194 355L1193 354L1193 349L1192 348L1191 338L1190 337L1189 330L1188 329L1185 318L1175 296L1173 294L1170 287L1168 285L1166 280L1164 278L1162 273L1156 264L1153 257L1151 255L1138 227L1133 220L1128 210L1128 208L1125 202L1121 196L1111 185L1105 175L1091 160L1089 156L1089 153L1088 152L1088 121L1089 120L1089 104L1090 103L1090 79Z"/>
<path fill="#ff6c00" fill-rule="evenodd" d="M760 369L756 371L750 377L745 386L745 388L744 389L744 403L745 404L745 409L746 410L747 417L751 423L758 439L761 442L765 444L772 444L780 439L785 433L785 430L786 429L785 424L786 423L787 402L788 401L788 395L789 394L788 393L788 388L785 382L776 372L770 369ZM854 79L855 90L856 91L859 106L861 110L861 113L862 114L864 122L866 125L868 133L870 136L870 138L877 152L877 154L878 155L878 161L875 166L868 174L862 186L851 201L845 215L829 232L823 240L816 253L810 259L806 261L791 263L786 265L784 268L784 276L785 277L785 281L786 282L785 311L788 319L794 325L798 327L800 327L804 329L807 329L808 330L811 330L812 331L815 331L824 336L830 342L833 348L834 355L835 356L835 379L836 380L836 388L837 389L837 399L836 400L836 405L835 406L835 408L830 417L825 421L818 424L810 425L801 429L797 433L797 438L802 448L802 450L805 457L805 462L806 463L806 486L805 487L805 535L806 536L807 556L808 557L808 564L809 565L809 571L810 572L812 589L813 590L814 600L815 601L815 605L817 610L818 619L819 620L819 623L820 624L820 627L821 628L821 631L822 632L825 647L827 651L828 658L831 665L831 668L832 669L838 689L840 692L841 697L845 705L845 708L1342 708L1342 675L1340 673L1337 667L1326 657L1311 647L1308 644L1304 642L1288 630L1284 626L1283 626L1256 600L1240 578L1228 554L1228 552L1226 549L1226 547L1220 531L1220 528L1218 524L1218 521L1217 520L1217 517L1216 516L1216 513L1215 512L1215 509L1213 504L1213 500L1211 495L1210 486L1208 481L1208 477L1207 476L1207 471L1206 470L1205 460L1204 459L1204 454L1203 453L1203 447L1202 446L1202 440L1201 439L1201 432L1200 431L1200 424L1199 423L1198 407L1197 406L1197 399L1196 398L1196 391L1195 390L1195 383L1194 382L1194 375L1193 374L1193 367L1192 366L1191 352L1190 351L1190 346L1189 345L1189 341L1188 340L1188 336L1185 328L1185 325L1184 324L1183 319L1181 316L1181 314L1179 311L1179 309L1166 283L1164 281L1150 254L1148 252L1145 246L1145 244L1141 237L1141 235L1135 224L1133 222L1123 200L1111 186L1103 173L1093 163L1089 157L1089 155L1088 154L1088 146L1087 145L1088 107L1089 106L1089 79Z"/>
<path fill="#ff7300" fill-rule="evenodd" d="M764 369L756 372L750 378L745 388L745 391L744 392L744 399L745 400L745 405L746 406L747 414L750 420L756 427L760 437L765 441L772 441L776 439L779 436L782 430L782 427L783 426L783 423L784 422L784 419L786 414L786 406L787 405L787 400L788 399L788 390L784 381L775 372L771 370ZM855 79L855 85L856 86L856 90L857 91L857 95L858 96L860 107L861 108L862 114L863 115L866 126L868 129L869 134L871 137L873 144L877 151L877 153L878 154L878 161L876 165L867 176L862 187L853 199L846 215L830 232L821 245L816 255L811 260L807 262L790 264L785 268L785 278L786 279L786 284L787 285L786 312L789 319L794 324L800 327L802 327L806 329L810 329L824 335L831 342L834 348L835 355L836 356L836 377L837 378L837 385L838 386L838 403L837 404L836 411L834 415L826 423L821 425L818 425L817 426L808 427L803 430L800 435L800 438L807 453L807 455L809 459L809 462L810 463L810 469L811 470L811 498L810 499L811 534L812 535L812 545L813 546L814 561L815 562L817 579L818 580L818 584L819 585L819 590L820 591L821 599L822 600L822 604L823 605L823 608L825 613L825 617L826 618L827 625L829 629L830 636L832 640L832 643L834 647L834 650L838 660L838 663L839 664L841 672L843 675L845 683L847 686L847 688L849 691L851 698L854 703L855 708L1335 708L1335 702L1334 701L1334 697L1332 693L1332 690L1326 677L1316 667L1315 667L1311 663L1298 654L1283 641L1282 641L1272 631L1271 631L1255 614L1239 592L1225 564L1225 562L1222 556L1222 554L1219 547L1219 544L1217 540L1217 537L1216 536L1216 533L1215 532L1215 529L1214 528L1214 525L1212 520L1211 511L1209 506L1209 502L1208 501L1208 497L1207 496L1207 492L1206 491L1205 481L1204 480L1204 475L1203 474L1203 469L1202 468L1202 463L1201 462L1201 456L1200 455L1200 448L1199 447L1198 432L1197 431L1196 413L1195 412L1195 404L1194 403L1194 396L1193 395L1193 388L1192 387L1192 380L1191 379L1191 372L1190 371L1189 356L1188 355L1188 349L1187 348L1187 343L1186 342L1186 338L1185 337L1184 330L1183 329L1182 323L1179 317L1178 312L1175 307L1175 305L1161 277L1159 275L1153 262L1151 260L1142 242L1142 240L1139 235L1139 233L1136 229L1134 224L1132 222L1122 200L1112 188L1104 175L1090 160L1088 156L1088 152L1087 151L1088 79Z"/>
<path fill="#ff7a00" fill-rule="evenodd" d="M763 370L756 373L748 382L745 390L745 402L746 403L747 411L750 418L758 425L763 436L769 439L774 437L776 435L778 431L778 429L780 426L780 424L783 420L783 418L785 414L785 411L786 410L786 403L787 402L788 393L787 392L787 388L784 382L778 375L771 371L769 371L768 370ZM856 79L856 85L857 86L857 90L858 91L858 95L859 96L859 100L860 101L861 108L863 112L863 115L864 116L869 133L878 153L878 156L879 157L878 162L875 167L868 175L867 178L864 182L864 184L862 188L852 202L847 215L828 236L822 245L816 257L809 263L805 263L804 264L794 264L793 265L788 266L785 270L785 276L787 281L787 312L790 319L794 323L799 326L818 331L825 335L834 345L834 347L836 351L836 355L837 356L837 376L838 377L839 391L840 392L840 401L839 402L838 411L832 421L827 425L822 426L821 427L810 428L806 430L803 435L803 438L812 456L812 458L814 462L814 465L815 466L815 473L816 474L816 523L817 524L817 535L818 536L818 544L819 545L819 552L820 553L822 570L823 571L823 575L824 576L826 590L828 595L828 599L829 600L832 615L834 619L835 626L838 633L838 636L841 643L841 646L842 647L846 661L848 664L850 672L852 675L852 677L854 680L856 687L859 692L859 694L865 705L865 707L866 708L1315 708L1314 699L1309 689L1304 682L1261 639L1261 638L1256 633L1256 632L1243 616L1240 610L1236 605L1234 600L1232 598L1224 581L1222 574L1220 571L1220 569L1217 562L1217 559L1215 555L1215 552L1213 548L1211 536L1210 535L1210 531L1209 530L1209 526L1208 525L1208 520L1207 519L1207 515L1206 514L1206 509L1205 508L1205 503L1204 502L1203 492L1202 491L1202 486L1201 485L1201 480L1200 479L1200 473L1199 472L1199 466L1198 465L1198 459L1197 458L1197 450L1196 449L1196 441L1195 440L1195 431L1194 430L1194 421L1193 420L1192 401L1191 400L1191 393L1190 392L1190 385L1189 384L1189 377L1188 376L1188 369L1187 368L1187 360L1186 359L1185 346L1184 345L1184 341L1183 340L1183 336L1182 335L1181 328L1180 327L1179 321L1176 315L1175 310L1168 296L1168 294L1160 278L1158 276L1149 257L1147 255L1143 247L1143 245L1140 240L1140 238L1127 214L1127 212L1122 201L1117 194L1112 189L1102 173L1092 163L1088 157L1088 154L1087 153L1087 144L1086 143L1086 120L1087 119L1087 79Z"/>
<path fill="#ff8000" fill-rule="evenodd" d="M762 371L757 373L748 383L746 388L746 391L745 392L745 399L746 400L747 409L750 416L755 421L760 423L763 426L764 431L767 435L771 435L773 434L777 424L782 419L784 415L784 413L785 412L785 407L786 406L786 401L787 400L787 390L784 383L777 375L769 371ZM857 79L858 91L859 92L859 96L860 97L861 105L864 113L864 116L865 117L871 137L873 140L875 147L878 152L878 155L879 156L878 163L866 179L862 189L855 198L850 208L848 215L829 236L824 245L822 247L817 258L811 264L808 264L807 265L793 265L788 267L786 270L786 278L787 279L787 283L788 284L787 308L788 309L788 313L791 319L795 323L803 327L806 327L807 328L810 328L811 329L819 331L826 335L833 342L835 345L835 347L837 351L837 355L838 356L838 375L839 376L839 381L840 382L840 387L841 388L841 406L840 407L839 414L835 421L827 428L825 428L824 429L815 429L814 430L810 430L807 432L806 434L806 439L812 448L813 451L815 453L819 463L819 466L820 467L820 474L821 475L821 513L822 514L823 536L824 537L824 544L825 545L826 557L827 558L827 562L828 563L830 577L832 582L832 586L833 587L836 602L838 606L838 609L840 613L842 623L843 624L853 656L855 659L856 664L858 667L860 674L863 679L863 681L868 690L868 692L876 706L876 708L1287 708L1284 697L1280 689L1270 674L1250 648L1235 625L1222 599L1222 597L1218 589L1218 587L1213 574L1213 571L1212 570L1212 567L1211 566L1211 563L1210 562L1210 559L1208 554L1207 545L1206 544L1206 539L1205 538L1205 533L1204 532L1204 526L1203 525L1203 520L1202 519L1202 513L1201 512L1201 506L1200 505L1200 499L1199 498L1199 492L1198 491L1197 479L1196 478L1195 462L1194 461L1194 453L1193 452L1193 442L1192 441L1192 430L1191 429L1191 418L1190 417L1189 398L1188 397L1188 390L1187 389L1187 382L1186 381L1186 374L1185 373L1185 365L1184 364L1183 349L1182 348L1182 343L1181 342L1181 338L1180 337L1179 329L1177 325L1177 322L1176 321L1175 316L1173 313L1172 308L1167 298L1167 296L1141 245L1139 238L1126 214L1125 209L1120 199L1110 187L1109 184L1103 175L1088 158L1088 156L1087 155L1087 150L1086 149L1086 79Z"/>
<path fill="#ff8700" fill-rule="evenodd" d="M761 372L754 376L748 384L748 386L746 390L746 401L747 402L748 410L751 416L754 419L762 422L774 423L778 421L782 417L784 413L785 405L786 404L786 399L787 398L786 388L783 382L776 375L770 372ZM858 79L858 85L859 86L860 97L862 102L862 106L863 107L864 114L867 121L867 124L868 125L870 133L872 136L873 141L875 144L875 146L877 149L877 151L879 155L879 161L875 168L871 172L867 178L863 188L854 201L847 218L842 223L842 224L838 227L838 228L828 239L825 245L823 247L821 251L821 253L816 262L811 266L793 266L792 267L790 267L787 270L786 275L787 276L787 280L788 281L788 285L789 286L789 294L788 295L788 310L789 311L790 316L795 322L802 326L812 328L826 334L835 343L838 351L838 355L839 356L839 374L840 375L841 385L842 386L842 392L843 393L843 405L842 406L842 411L837 423L830 430L825 432L812 432L810 433L809 438L821 454L824 462L825 474L826 475L826 506L827 507L827 521L828 522L829 538L830 539L830 544L831 545L831 550L832 551L832 555L833 556L835 570L836 571L836 574L837 575L840 590L842 594L842 597L844 601L844 604L848 614L848 617L849 618L854 635L856 638L858 646L862 654L863 659L866 664L866 666L869 671L869 673L888 708L1257 708L1256 699L1255 698L1253 690L1251 687L1251 685L1239 660L1237 658L1228 640L1228 638L1223 629L1223 627L1220 622L1220 620L1216 612L1216 610L1210 594L1210 591L1209 590L1209 587L1208 586L1208 583L1207 582L1207 579L1205 574L1205 570L1204 569L1204 565L1203 564L1203 559L1202 558L1202 552L1201 551L1201 545L1200 544L1199 528L1198 527L1198 518L1197 517L1197 509L1196 508L1196 501L1195 500L1195 493L1194 492L1194 485L1193 484L1193 477L1192 476L1191 456L1190 455L1190 443L1189 442L1189 430L1188 429L1188 415L1187 414L1186 395L1185 394L1185 387L1184 386L1184 379L1183 378L1183 371L1182 370L1181 353L1180 352L1179 340L1178 339L1178 335L1177 334L1175 323L1174 322L1171 311L1165 298L1165 296L1162 291L1162 289L1153 272L1153 270L1148 260L1146 258L1141 248L1138 238L1126 216L1125 211L1123 208L1123 206L1117 196L1113 192L1104 177L1092 164L1087 156L1087 153L1086 152L1086 142L1085 141L1085 79Z"/>
<path fill="#ff8d00" fill-rule="evenodd" d="M764 372L763 373L758 374L752 379L747 388L747 391L746 392L746 399L747 400L747 404L748 405L749 411L753 417L759 420L771 420L773 421L774 420L777 420L780 418L783 414L784 408L785 407L785 403L786 402L786 390L783 383L775 375L771 373ZM859 79L859 85L860 86L860 92L861 93L863 107L864 108L865 115L867 119L867 122L868 123L873 140L875 143L875 145L877 148L877 150L879 154L879 162L868 177L864 185L863 189L857 197L852 207L852 209L850 212L850 214L848 218L832 235L827 242L826 245L823 249L823 251L820 256L820 258L817 264L813 268L807 268L806 267L792 267L788 270L787 272L787 277L788 278L788 282L789 283L789 311L793 319L801 325L803 325L807 327L810 327L814 329L817 329L820 331L824 332L830 336L836 343L839 351L839 355L840 356L840 373L841 374L841 378L842 379L842 383L843 384L843 388L844 389L844 411L843 412L843 415L842 416L841 421L837 428L829 436L824 438L821 438L820 439L820 441L824 446L827 452L828 458L829 459L829 463L830 464L830 474L831 475L831 504L832 505L833 526L834 527L834 533L835 534L835 539L836 540L836 544L837 545L837 550L839 555L839 559L840 560L840 563L841 564L844 579L845 580L846 586L849 593L849 596L850 597L857 620L862 631L863 636L865 639L865 641L867 644L867 646L869 649L871 656L875 663L875 665L885 685L900 708L1229 708L1229 698L1228 697L1227 686L1226 685L1225 678L1223 674L1223 671L1220 664L1220 661L1219 660L1219 658L1212 639L1212 636L1209 629L1207 619L1205 615L1205 612L1203 607L1203 603L1201 598L1201 594L1200 593L1198 576L1197 575L1196 558L1195 557L1195 547L1194 546L1194 532L1193 531L1192 504L1191 503L1191 494L1190 493L1189 474L1188 473L1188 462L1187 461L1186 428L1185 427L1185 411L1184 410L1184 400L1183 399L1183 392L1182 391L1182 384L1181 383L1181 376L1180 375L1180 367L1179 366L1179 357L1178 356L1178 349L1177 348L1177 343L1176 342L1175 332L1174 331L1172 321L1171 320L1167 306L1165 303L1164 298L1162 295L1162 293L1153 275L1153 273L1140 248L1140 246L1138 243L1136 236L1126 218L1123 208L1119 200L1111 190L1103 176L1089 161L1087 157L1087 155L1086 154L1086 148L1085 147L1085 126L1084 125L1084 80L1083 79Z"/>
<path fill="#ff9400" fill-rule="evenodd" d="M763 373L756 376L752 380L748 387L748 389L747 390L747 401L748 402L748 406L751 413L756 418L759 418L760 419L776 419L782 414L784 410L784 406L785 405L785 401L786 400L786 391L783 384L777 377L772 374ZM860 79L860 85L861 86L861 93L862 94L863 104L864 105L867 120L869 124L869 127L879 153L879 162L875 169L869 176L864 186L864 188L857 198L851 211L850 216L846 222L833 235L825 247L824 251L822 254L818 268L815 271L812 271L811 270L804 269L803 268L792 268L789 270L788 272L788 279L790 284L790 298L789 299L789 307L790 308L790 312L793 318L796 321L803 325L805 325L809 327L812 327L827 333L835 340L840 350L840 355L841 356L841 372L842 373L842 377L843 378L844 386L845 387L845 392L846 393L846 411L845 412L845 416L844 417L843 423L836 437L836 439L834 443L834 452L835 453L835 474L836 475L836 505L837 506L838 523L839 524L840 535L841 536L842 545L843 546L843 549L844 550L844 553L845 554L848 569L850 573L850 576L851 577L860 606L862 609L863 614L865 617L865 619L867 622L867 624L869 627L871 634L877 646L877 648L890 675L892 677L894 682L906 699L912 705L913 708L1202 708L1203 706L1203 676L1202 675L1202 667L1201 666L1200 653L1199 652L1199 647L1198 646L1198 641L1197 640L1197 635L1196 634L1196 629L1195 628L1195 623L1194 622L1194 616L1193 615L1193 609L1192 608L1192 601L1191 600L1191 592L1190 591L1190 580L1189 579L1189 559L1188 558L1188 509L1187 508L1187 496L1186 495L1185 471L1184 470L1184 450L1183 449L1182 407L1181 406L1181 397L1180 396L1180 389L1179 388L1179 381L1178 380L1178 372L1177 371L1177 363L1176 362L1176 353L1175 352L1174 339L1173 338L1173 334L1172 333L1170 322L1168 318L1168 315L1167 314L1165 306L1163 303L1161 295L1153 278L1153 276L1138 246L1136 238L1129 224L1126 220L1122 207L1115 195L1109 188L1104 178L1093 166L1087 158L1086 151L1085 150L1085 141L1084 140L1084 102L1083 101L1083 82L1082 81L1082 79Z"/>
<path fill="#ff9b00" fill-rule="evenodd" d="M759 375L751 382L748 388L748 391L747 392L747 399L748 400L748 404L749 405L750 410L753 415L759 418L776 418L782 413L784 408L785 397L786 396L785 389L782 383L776 377L770 374L762 374L761 375ZM861 79L862 94L863 95L863 100L864 101L865 110L866 111L867 118L869 122L869 125L870 126L876 146L879 152L879 155L880 156L879 163L869 177L861 194L856 201L849 219L834 235L826 247L826 249L824 252L824 254L821 261L821 265L820 266L820 271L817 275L815 275L808 271L806 271L802 269L792 269L789 272L788 276L789 277L790 285L791 286L791 294L790 295L790 309L791 310L792 315L797 321L804 325L820 329L830 334L837 341L841 350L841 354L842 355L842 371L843 372L843 376L844 377L844 380L846 385L847 396L848 397L848 411L847 412L846 422L845 423L845 426L844 427L844 430L842 435L841 467L840 468L841 506L842 507L842 515L843 516L844 527L845 528L845 532L846 533L847 541L848 542L850 553L852 557L852 560L853 561L853 563L855 567L855 570L856 571L859 582L861 585L863 593L865 596L865 598L867 601L867 603L869 606L871 613L874 618L874 620L878 627L878 629L882 636L882 638L889 651L889 653L895 665L897 667L902 677L911 689L930 708L1176 708L1176 705L1177 704L1177 701L1179 696L1180 684L1181 683L1181 673L1182 672L1182 628L1181 627L1181 555L1182 554L1182 531L1183 530L1183 500L1182 499L1182 486L1181 485L1181 463L1180 462L1180 424L1179 423L1179 404L1178 403L1178 394L1177 393L1176 377L1175 376L1175 369L1174 368L1174 357L1173 356L1172 341L1171 340L1171 336L1170 335L1170 331L1169 330L1167 319L1166 318L1166 316L1163 309L1163 306L1162 305L1161 300L1159 297L1158 292L1156 289L1156 287L1154 284L1152 277L1148 270L1148 268L1139 251L1135 238L1124 217L1120 204L1108 187L1106 182L1102 176L1087 159L1086 153L1085 152L1085 146L1084 145L1084 132L1083 131L1083 98L1082 97L1082 82L1081 81L1081 79Z"/>
<path fill="#ffa100" fill-rule="evenodd" d="M761 375L757 377L751 383L748 390L748 402L749 403L750 409L753 414L758 417L776 417L778 416L783 410L783 407L785 402L785 391L784 390L784 388L782 384L775 377L771 375L767 375L766 374ZM862 79L863 95L864 96L864 101L865 102L866 111L867 112L870 127L871 128L876 145L879 151L880 161L877 167L868 179L866 183L866 185L854 207L854 209L852 212L850 219L836 234L827 247L827 249L825 252L825 254L823 258L823 262L822 263L822 273L821 275L817 278L812 276L810 274L804 271L801 271L800 270L793 270L790 272L789 277L791 282L791 310L795 318L803 324L805 324L809 326L812 326L816 328L819 328L831 334L838 341L842 350L842 353L843 354L843 369L844 370L844 374L845 375L845 378L846 379L846 382L848 387L848 391L849 392L849 400L850 401L849 419L848 420L847 433L846 434L846 441L847 442L847 456L846 457L846 464L845 465L845 497L846 498L846 507L847 508L847 514L848 515L849 525L850 526L851 534L853 538L854 545L856 549L856 552L857 553L863 573L865 576L866 581L868 584L870 591L873 596L873 598L877 605L877 607L886 624L886 626L899 652L901 654L906 665L908 667L911 673L924 687L925 687L939 699L947 704L951 708L1148 708L1156 689L1156 686L1158 682L1158 679L1159 678L1159 675L1160 674L1160 671L1162 666L1162 662L1163 661L1163 657L1164 656L1164 651L1165 650L1166 636L1167 635L1167 627L1168 626L1168 616L1169 615L1169 604L1170 603L1171 582L1172 581L1172 573L1173 572L1173 564L1174 563L1174 554L1175 553L1175 544L1176 543L1176 534L1177 533L1177 523L1178 522L1178 489L1177 488L1177 417L1176 416L1176 400L1175 399L1174 382L1173 381L1173 374L1172 373L1171 352L1170 351L1170 344L1169 343L1168 332L1167 331L1164 316L1161 309L1161 306L1160 305L1156 291L1154 288L1153 283L1148 273L1148 271L1144 264L1144 262L1138 251L1134 238L1124 219L1121 208L1117 200L1110 191L1101 175L1088 161L1086 157L1086 155L1085 154L1085 149L1084 148L1084 140L1083 139L1082 96L1081 95L1081 83L1080 82L1080 79Z"/>
<path fill="#fca600" fill-rule="evenodd" d="M760 376L753 381L749 388L749 391L748 392L748 400L749 401L750 408L752 412L757 416L770 416L771 417L777 416L780 414L783 409L784 400L785 399L784 389L780 382L774 377L769 375L763 375L762 376ZM863 79L864 96L865 97L865 103L866 104L867 113L868 114L870 125L872 129L872 132L880 154L880 161L879 162L879 164L869 178L866 184L866 186L855 206L855 208L853 211L853 213L850 220L837 234L831 242L825 255L825 258L824 259L824 267L823 268L823 275L820 279L814 279L802 272L800 272L799 271L793 271L790 274L790 278L792 283L792 299L791 300L791 306L792 307L792 311L795 317L799 321L807 325L817 327L831 333L837 338L840 342L841 346L843 349L845 373L848 381L848 384L850 389L850 394L851 395L851 422L850 423L851 458L850 459L850 468L849 469L850 501L851 502L852 514L853 515L853 519L854 520L857 535L858 536L858 538L860 542L860 545L861 546L863 554L865 557L867 565L871 573L871 575L887 609L889 611L895 624L897 626L900 633L902 635L905 642L907 644L910 651L912 653L914 658L916 660L919 666L932 678L941 683L946 687L949 688L951 690L963 696L965 698L975 703L977 703L981 705L984 705L985 706L988 706L992 708L1119 708L1126 698L1133 684L1133 682L1135 679L1135 677L1137 674L1137 672L1139 669L1141 662L1144 657L1146 649L1148 646L1148 643L1151 636L1151 633L1152 632L1152 629L1153 628L1153 625L1155 620L1155 616L1156 615L1156 611L1157 610L1157 606L1158 605L1158 601L1159 600L1159 595L1160 594L1160 590L1161 589L1161 585L1162 584L1162 580L1163 579L1163 575L1164 574L1164 570L1165 569L1165 564L1166 563L1166 559L1167 558L1167 553L1168 552L1168 547L1169 546L1169 540L1170 539L1170 534L1171 533L1172 520L1173 519L1173 508L1174 507L1174 503L1173 502L1174 410L1173 409L1173 397L1172 396L1172 387L1171 386L1171 379L1170 378L1170 369L1169 368L1169 356L1168 355L1167 339L1166 338L1166 334L1165 333L1165 329L1164 328L1163 320L1161 316L1160 309L1157 302L1157 299L1156 298L1153 287L1151 284L1150 279L1145 269L1145 267L1137 251L1137 249L1136 248L1135 243L1133 240L1133 238L1131 235L1131 233L1124 221L1120 207L1117 201L1109 190L1102 177L1089 163L1085 155L1085 152L1084 151L1084 144L1083 143L1083 133L1082 132L1082 112L1081 111L1081 95L1080 94L1080 84L1079 83L1079 79Z"/>
<path fill="#f8a900" fill-rule="evenodd" d="M761 377L757 379L752 384L749 391L749 401L750 402L751 408L752 410L758 415L776 415L781 411L783 406L783 403L784 402L784 392L783 391L783 389L781 385L775 379L768 376ZM865 79L865 90L866 91L866 99L867 100L868 112L870 117L870 121L871 122L872 129L873 130L873 132L875 136L875 139L880 152L880 163L876 170L871 176L866 186L866 188L857 204L857 206L855 209L855 211L851 221L835 239L828 252L827 260L826 261L826 274L825 275L825 277L819 282L812 281L799 274L794 274L792 277L793 278L793 282L794 283L793 309L796 316L800 320L805 323L807 323L814 326L824 328L834 333L841 340L846 352L846 358L847 359L847 370L851 381L851 384L852 385L852 388L854 393L854 399L855 400L855 433L856 434L856 441L857 442L857 448L858 449L858 458L857 459L857 482L858 483L858 492L859 493L859 499L860 500L860 505L861 506L862 514L864 518L864 521L865 522L870 539L872 542L874 549L878 556L878 558L887 576L889 578L895 590L909 611L922 627L922 628L927 633L927 634L937 644L947 651L959 657L961 657L965 659L973 660L974 661L981 661L982 662L1000 661L1001 660L1006 660L1007 659L1011 659L1012 658L1016 658L1017 657L1033 657L1034 658L1038 658L1039 659L1041 659L1060 666L1063 666L1064 667L1078 667L1079 666L1081 666L1094 658L1109 643L1122 625L1127 615L1129 613L1133 605L1133 603L1137 596L1137 594L1143 581L1144 576L1146 573L1146 571L1152 555L1152 552L1155 545L1155 542L1156 541L1156 538L1157 537L1157 534L1158 533L1158 530L1159 529L1159 526L1161 521L1162 511L1163 510L1163 501L1164 500L1164 484L1165 483L1165 467L1166 466L1166 451L1167 450L1168 403L1167 402L1167 390L1166 389L1166 379L1165 378L1165 367L1164 366L1164 353L1163 352L1162 336L1161 335L1160 325L1159 324L1159 321L1158 320L1158 317L1157 316L1157 313L1156 312L1153 297L1152 296L1145 273L1135 251L1131 237L1123 222L1119 208L1114 198L1108 190L1105 183L1098 173L1090 165L1085 157L1084 150L1083 149L1083 143L1082 142L1082 134L1081 133L1080 104L1079 103L1079 93L1078 92L1078 84L1077 83L1077 79Z"/>
<path fill="#f4ac00" fill-rule="evenodd" d="M761 378L754 383L750 391L750 402L751 403L753 410L758 414L776 414L780 411L783 404L783 391L782 390L782 388L775 380L771 378L767 378L766 377L765 378ZM867 79L867 95L868 96L868 104L869 105L870 116L871 117L871 121L872 122L874 133L876 137L876 140L880 150L881 161L878 168L873 174L867 185L865 192L859 202L859 204L857 207L853 220L849 226L837 239L834 245L832 247L832 249L830 252L830 255L829 256L829 262L828 263L828 275L827 276L827 278L822 283L820 283L819 284L811 283L801 279L798 279L796 282L796 291L795 292L795 297L794 298L794 308L795 309L795 311L797 315L805 322L807 322L814 325L817 325L818 326L828 328L837 333L842 338L847 347L847 350L849 355L850 369L854 380L854 383L855 384L856 391L857 392L857 396L858 397L860 433L861 434L861 440L862 441L862 446L863 447L864 475L865 476L865 484L866 485L866 490L867 491L867 495L868 496L870 507L871 508L875 522L877 525L877 527L888 550L890 552L892 557L896 562L901 571L914 587L914 588L927 602L928 602L940 613L949 619L959 624L961 624L967 627L974 628L975 629L980 629L981 630L991 630L992 631L1039 630L1040 629L1052 629L1053 628L1059 628L1060 627L1063 627L1064 626L1067 626L1068 625L1073 624L1076 622L1078 622L1094 612L1110 596L1124 576L1137 551L1137 549L1140 544L1140 542L1142 539L1143 534L1145 531L1145 529L1148 522L1148 519L1150 515L1150 512L1152 507L1152 503L1153 502L1153 497L1154 496L1154 491L1155 490L1155 483L1156 482L1156 476L1157 475L1158 459L1159 458L1160 438L1161 437L1161 424L1162 423L1162 394L1161 393L1161 379L1160 378L1160 363L1159 362L1158 339L1157 338L1157 332L1156 331L1156 326L1155 325L1154 316L1152 311L1152 307L1151 306L1151 303L1150 302L1147 287L1146 286L1141 269L1139 266L1138 261L1134 253L1130 239L1122 223L1117 206L1114 200L1107 190L1103 181L1098 174L1087 162L1084 156L1083 148L1082 147L1082 142L1081 141L1081 134L1080 133L1080 123L1079 122L1078 100L1077 99L1077 91L1076 90L1075 79Z"/>
<path fill="#f0af00" fill-rule="evenodd" d="M762 379L758 381L753 386L751 390L750 398L751 399L752 406L754 410L758 413L761 413L762 414L773 414L774 413L776 413L779 411L782 405L782 401L783 400L782 390L779 385L771 379ZM869 79L869 100L870 101L870 109L871 110L871 115L872 116L873 125L874 126L877 141L878 142L880 152L881 153L881 162L878 169L869 182L867 189L858 207L855 218L852 224L842 235L834 247L834 249L832 252L832 255L831 256L831 263L830 264L830 274L829 275L829 278L827 281L822 285L801 284L798 288L797 294L796 295L796 301L795 302L796 310L800 317L804 320L814 324L818 324L819 325L822 325L823 326L826 326L827 327L832 328L839 332L844 337L849 346L851 356L852 357L853 368L854 369L854 372L858 382L858 385L859 386L859 389L861 394L865 435L866 436L866 441L867 442L867 447L868 448L868 454L869 455L869 462L870 463L871 476L872 477L872 481L873 482L876 497L877 498L878 503L880 506L880 508L882 511L882 513L892 533L903 550L910 558L910 559L916 565L916 566L927 577L928 577L933 582L944 590L957 597L959 597L962 599L964 599L971 602L974 602L975 603L986 604L987 605L1034 605L1035 604L1048 603L1049 602L1052 602L1053 601L1056 601L1057 600L1065 598L1076 593L1092 582L1111 562L1120 549L1125 539L1127 537L1135 520L1138 510L1140 507L1140 504L1143 497L1143 494L1144 493L1144 490L1146 485L1146 481L1147 480L1147 476L1148 475L1148 471L1149 470L1149 466L1150 465L1150 460L1151 459L1151 454L1152 453L1152 447L1153 446L1153 440L1154 439L1154 431L1155 430L1155 420L1156 419L1156 377L1155 376L1155 356L1154 355L1154 343L1153 342L1152 327L1151 326L1151 321L1150 320L1150 315L1149 314L1149 310L1148 309L1146 295L1145 294L1142 279L1141 278L1137 264L1135 261L1128 238L1120 221L1120 219L1118 215L1118 212L1115 206L1115 204L1109 195L1101 179L1087 163L1083 155L1082 147L1081 146L1081 141L1080 140L1080 134L1079 133L1078 115L1077 114L1077 106L1076 105L1076 98L1075 97L1075 91L1074 90L1073 79Z"/>
<path fill="#ecb300" fill-rule="evenodd" d="M762 380L758 382L754 386L752 390L752 392L751 393L751 400L752 401L753 407L756 411L760 413L774 413L778 411L782 403L782 393L781 392L781 390L778 385L773 381L771 381L770 380ZM871 79L871 82L870 83L871 107L872 108L872 114L873 115L873 120L874 121L875 130L876 131L876 134L877 135L877 138L878 139L878 142L879 143L879 146L881 151L881 163L879 168L872 178L868 186L867 191L862 200L862 202L858 210L858 213L854 223L840 240L835 249L834 255L833 256L833 262L832 263L832 274L831 275L830 280L825 285L820 287L803 287L800 290L797 298L797 309L798 310L798 312L804 319L808 321L810 321L814 323L828 325L838 329L846 336L852 347L854 357L855 358L855 362L857 367L857 370L858 371L858 373L861 380L861 383L863 387L863 391L864 392L864 396L865 397L865 402L866 403L866 411L867 412L867 419L868 420L869 432L870 433L870 437L871 438L871 442L872 443L872 447L873 448L873 453L874 454L874 458L875 459L875 463L876 464L876 468L877 469L879 480L880 481L884 495L886 498L886 500L893 514L904 531L912 540L912 541L928 557L946 570L958 576L960 576L963 578L965 578L969 580L972 580L973 581L977 581L978 582L982 582L983 583L993 583L994 584L1023 584L1024 583L1034 583L1035 582L1045 581L1046 580L1049 580L1050 579L1061 576L1078 567L1090 558L1107 540L1121 519L1133 493L1133 491L1137 481L1137 478L1139 474L1139 471L1141 467L1142 459L1143 458L1144 450L1145 449L1145 445L1146 444L1146 440L1147 439L1147 434L1148 433L1149 418L1150 417L1150 405L1151 404L1151 371L1150 370L1150 348L1149 347L1149 336L1148 335L1148 327L1147 326L1146 313L1145 312L1145 307L1144 306L1144 301L1143 300L1143 295L1142 294L1141 285L1140 284L1138 274L1131 255L1131 252L1130 251L1126 237L1119 222L1115 207L1109 195L1107 193L1101 180L1094 172L1094 171L1087 164L1084 159L1084 157L1082 153L1082 150L1081 149L1081 146L1080 145L1080 140L1079 139L1079 134L1078 133L1078 126L1077 125L1077 118L1076 117L1075 102L1074 101L1074 96L1073 95L1073 90L1072 89L1071 79Z"/>
<path fill="#e8b600" fill-rule="evenodd" d="M762 381L755 386L752 392L752 402L753 403L753 405L755 409L759 412L775 412L778 410L781 404L781 400L782 399L781 392L777 385L773 382L771 382L770 381ZM872 79L872 104L873 105L873 113L874 114L874 120L875 121L876 131L877 132L877 135L878 136L878 139L880 144L880 148L881 149L881 153L882 154L882 161L879 169L877 171L876 174L872 179L869 185L868 190L863 200L863 202L861 205L857 219L854 225L842 240L837 249L837 251L835 255L834 272L833 273L832 280L827 286L823 288L811 288L810 289L805 289L801 293L799 297L799 300L798 301L799 311L800 313L808 320L810 320L814 322L818 322L819 323L830 324L831 325L834 325L839 327L842 329L851 339L857 354L858 361L860 365L860 368L865 381L865 384L866 385L866 388L868 393L869 405L870 406L870 413L871 414L871 419L872 420L872 425L873 426L874 435L875 436L876 444L877 445L877 448L878 449L878 452L879 453L879 456L880 457L880 460L881 461L881 464L883 468L883 471L884 472L885 477L887 480L889 487L901 509L910 521L928 539L940 548L959 558L961 558L971 562L979 563L980 564L985 564L986 565L995 565L996 566L1016 566L1017 565L1027 565L1028 564L1033 564L1034 563L1038 563L1039 562L1042 562L1043 561L1046 561L1047 560L1052 559L1071 550L1085 540L1101 524L1101 523L1108 515L1114 506L1116 501L1118 499L1129 475L1129 473L1135 457L1135 454L1137 450L1137 447L1138 446L1138 443L1140 438L1140 434L1141 433L1141 429L1142 428L1142 423L1143 422L1144 408L1145 407L1145 392L1146 391L1146 356L1145 355L1145 338L1144 337L1144 327L1143 326L1143 318L1142 317L1141 302L1140 301L1140 295L1139 294L1139 289L1138 288L1137 279L1136 278L1135 271L1132 264L1132 261L1129 254L1127 244L1124 238L1123 233L1120 228L1114 207L1102 183L1094 172L1088 166L1083 158L1083 156L1081 152L1081 149L1080 148L1080 145L1079 144L1079 140L1078 139L1077 127L1076 126L1076 120L1075 119L1075 113L1074 112L1074 106L1073 105L1073 100L1072 99L1072 94L1071 93L1069 79Z"/>
<path fill="#e4b900" fill-rule="evenodd" d="M762 382L754 389L754 391L753 392L753 403L754 404L754 406L757 410L762 412L772 412L773 411L775 411L778 409L781 402L781 394L780 393L780 391L773 383L771 383L770 382ZM874 79L874 113L875 114L875 120L876 121L876 127L877 128L878 137L879 138L879 141L881 146L881 150L882 151L882 162L881 163L881 166L876 175L874 177L873 180L871 182L868 192L863 202L863 204L862 205L862 207L861 208L856 224L850 233L843 241L839 248L838 254L837 255L837 260L836 261L836 271L835 272L835 277L833 280L833 282L825 289L806 291L802 295L800 299L800 310L802 314L805 317L811 320L813 320L814 321L819 321L820 322L829 322L830 323L834 323L842 326L850 333L854 339L855 343L858 348L858 350L859 351L859 353L860 354L860 356L861 357L861 359L869 381L870 389L871 390L871 394L872 395L872 400L873 401L873 407L874 408L874 414L875 415L876 425L877 426L880 441L882 445L882 448L884 452L884 455L885 456L888 467L894 479L894 481L896 483L899 490L905 499L913 508L913 509L924 520L925 520L937 530L953 539L955 539L960 542L962 542L969 545L972 545L977 547L981 547L982 548L988 548L989 549L1019 549L1020 548L1026 548L1027 547L1036 546L1037 545L1040 545L1041 544L1049 542L1066 534L1084 521L1101 503L1112 487L1123 465L1123 463L1127 455L1127 453L1132 440L1132 437L1135 429L1137 415L1138 414L1139 400L1140 399L1140 387L1141 386L1141 341L1140 340L1140 326L1139 325L1139 315L1138 314L1138 303L1137 302L1137 294L1136 293L1136 287L1135 286L1134 276L1133 275L1131 264L1129 260L1128 253L1126 249L1126 246L1125 245L1123 237L1121 234L1120 229L1118 226L1113 207L1100 181L1095 174L1085 163L1082 157L1081 151L1078 143L1077 134L1076 133L1076 128L1075 127L1075 121L1074 120L1072 103L1071 102L1071 98L1070 97L1070 93L1068 88L1067 80L1066 79Z"/>
<path fill="#e0bc00" fill-rule="evenodd" d="M762 383L760 384L754 391L754 393L753 394L753 401L754 402L754 404L756 408L760 411L774 411L778 408L780 404L780 393L778 389L773 384L771 384L770 383ZM876 79L876 86L875 87L875 111L876 112L876 121L877 122L878 133L879 134L879 138L880 139L880 143L881 144L881 148L882 149L882 164L879 171L877 173L870 186L870 188L867 194L866 199L864 202L858 222L855 228L847 238L840 250L839 258L838 259L837 276L834 284L827 290L825 290L824 291L809 292L805 294L802 298L802 300L801 301L801 309L803 313L807 317L811 319L813 319L814 320L821 320L822 321L835 321L836 322L839 322L848 327L854 334L855 337L858 341L858 343L864 356L865 361L867 364L867 366L869 369L869 371L873 381L874 389L875 390L875 395L876 396L876 402L877 403L877 409L878 410L879 420L880 421L882 432L885 439L885 442L886 443L888 451L890 454L891 459L899 476L907 488L925 507L939 517L950 523L952 523L957 526L959 526L969 530L977 531L978 532L983 532L984 533L992 533L993 534L1012 534L1013 533L1021 533L1022 532L1026 532L1027 531L1035 530L1036 529L1042 528L1045 526L1050 525L1067 516L1078 508L1084 502L1085 502L1097 489L1113 465L1119 453L1119 451L1122 446L1123 441L1125 438L1125 436L1128 429L1131 414L1132 413L1132 408L1133 407L1133 402L1134 401L1134 395L1135 394L1135 385L1136 384L1136 363L1137 362L1137 351L1136 350L1136 324L1135 323L1134 292L1133 291L1132 277L1130 272L1130 268L1129 267L1129 264L1128 263L1128 260L1127 259L1124 244L1115 220L1115 217L1114 216L1114 213L1113 212L1112 207L1105 194L1105 192L1098 179L1086 165L1082 158L1082 156L1078 146L1077 139L1076 138L1075 128L1074 127L1073 117L1072 116L1072 111L1071 110L1071 106L1070 105L1070 101L1068 96L1068 92L1067 91L1065 80L1064 79Z"/>
<path fill="#dcbf00" fill-rule="evenodd" d="M762 384L756 389L754 393L754 402L755 403L755 405L758 409L762 411L772 411L776 409L779 405L779 402L780 401L779 392L778 390L771 384ZM878 79L878 83L877 84L877 94L876 95L876 109L877 110L878 129L879 130L879 135L880 136L880 140L881 141L881 145L882 146L882 152L883 153L882 165L879 172L877 174L871 185L871 187L868 193L858 225L855 229L854 232L848 239L843 247L843 249L841 253L841 257L840 258L839 275L835 286L831 290L827 292L823 292L822 293L812 293L807 295L804 298L802 303L802 308L803 309L803 311L806 315L811 318L814 318L815 319L837 319L838 320L844 321L849 324L854 329L858 335L861 341L861 343L864 348L864 350L868 357L868 359L871 364L871 366L874 371L874 373L877 380L877 384L878 385L878 389L879 390L879 396L880 397L880 404L881 405L881 410L882 411L882 416L883 417L885 427L886 428L890 442L892 445L893 450L896 455L896 457L900 465L902 467L905 473L911 481L923 493L937 503L942 505L946 508L948 508L953 511L955 511L965 515L968 515L973 517L977 517L978 518L984 518L985 519L1014 519L1015 518L1021 518L1022 517L1031 516L1035 514L1041 513L1051 508L1053 508L1062 503L1064 501L1067 500L1080 489L1081 489L1096 473L1107 457L1117 438L1117 436L1119 433L1119 431L1121 428L1121 426L1124 419L1124 416L1125 415L1125 412L1127 407L1127 403L1128 402L1128 398L1129 397L1129 391L1130 390L1130 383L1131 382L1131 371L1132 370L1132 317L1131 316L1131 287L1130 286L1130 279L1129 278L1129 273L1128 272L1128 268L1126 263L1125 254L1124 253L1123 246L1115 224L1115 221L1114 220L1114 217L1112 213L1111 207L1102 189L1101 185L1095 176L1086 166L1081 157L1081 155L1077 145L1075 134L1074 133L1074 129L1073 128L1073 124L1072 123L1072 118L1071 117L1070 108L1069 107L1068 99L1067 98L1066 91L1065 90L1064 84L1062 79Z"/>
<path fill="#d8c200" fill-rule="evenodd" d="M762 385L757 389L755 393L755 396L754 397L755 404L756 406L761 410L765 410L766 411L773 410L778 406L778 404L779 403L779 394L777 390L773 386L771 385ZM880 79L880 81L879 82L879 88L878 89L878 122L879 123L879 130L880 131L880 136L881 137L881 142L882 143L882 149L883 150L883 162L882 163L882 166L879 173L874 180L872 184L872 186L870 189L869 195L867 198L867 200L865 204L865 207L861 217L860 223L856 231L849 240L844 249L843 256L842 257L841 275L840 276L840 280L837 287L830 293L828 293L827 294L817 294L816 295L811 295L807 297L804 302L804 310L809 316L814 317L815 318L843 317L852 322L857 328L880 375L880 378L882 383L882 388L883 389L883 396L884 397L884 405L885 406L886 416L887 417L888 423L891 429L892 434L896 442L896 444L904 460L908 466L923 482L936 491L946 496L948 496L951 498L953 498L960 501L963 501L968 503L972 503L973 504L978 504L979 505L990 505L991 506L1015 505L1016 504L1021 504L1022 503L1030 502L1031 501L1037 500L1040 498L1045 497L1064 487L1076 478L1092 462L1105 444L1113 429L1113 427L1116 422L1116 420L1120 410L1120 407L1121 406L1121 403L1123 398L1123 394L1124 393L1125 382L1126 381L1126 373L1127 372L1127 358L1128 357L1128 281L1127 280L1126 268L1125 267L1125 263L1124 262L1124 258L1123 257L1123 252L1122 251L1121 244L1115 228L1113 217L1112 216L1111 210L1108 204L1108 202L1104 195L1104 193L1098 181L1084 164L1079 153L1079 151L1075 141L1075 138L1073 133L1073 129L1072 128L1072 124L1071 123L1070 115L1069 114L1069 110L1068 109L1068 106L1067 105L1067 102L1066 101L1066 98L1062 87L1061 81L1060 79Z"/>
<path fill="#d4c500" fill-rule="evenodd" d="M762 386L759 388L756 392L756 394L755 395L755 402L757 406L762 410L772 410L774 409L778 404L778 402L779 401L778 393L777 391L771 386L769 386L768 385ZM882 79L881 80L880 93L879 94L879 123L880 124L880 132L881 133L881 139L882 140L882 145L883 146L883 164L882 165L881 170L877 176L875 181L873 183L873 185L871 188L870 194L865 207L865 210L864 211L863 217L862 218L861 223L859 226L859 228L846 248L845 255L844 256L843 275L842 276L842 280L841 281L841 284L839 289L833 295L831 295L830 296L814 296L809 298L805 303L805 309L810 315L815 317L822 317L823 316L827 316L828 315L836 314L837 313L843 313L844 314L849 315L857 322L861 328L871 350L873 352L884 373L885 379L886 380L886 385L887 386L887 396L888 397L889 412L890 413L891 419L897 432L897 434L907 454L911 460L927 475L939 482L941 482L946 485L948 485L955 488L958 488L963 490L967 490L968 491L985 492L986 493L1013 492L1014 491L1024 490L1025 489L1028 489L1029 488L1032 488L1033 487L1041 485L1056 478L1058 476L1067 471L1076 463L1077 463L1089 451L1089 450L1097 441L1103 432L1104 429L1106 427L1112 414L1112 412L1116 402L1117 395L1118 394L1118 390L1119 389L1120 380L1121 379L1121 374L1122 373L1122 365L1123 364L1123 347L1124 346L1124 313L1125 312L1125 292L1126 291L1126 286L1125 285L1125 274L1124 273L1124 268L1123 267L1121 250L1120 249L1118 239L1115 232L1115 229L1113 225L1112 217L1110 213L1110 210L1109 209L1108 204L1105 199L1105 197L1102 192L1102 190L1098 182L1085 166L1080 157L1080 155L1078 152L1078 150L1074 140L1074 137L1073 136L1073 133L1072 132L1072 129L1071 128L1071 125L1069 120L1069 116L1068 115L1066 104L1064 100L1064 97L1063 96L1062 90L1058 79Z"/>
<path fill="#d0c800" fill-rule="evenodd" d="M765 386L764 387L762 387L758 390L756 394L756 403L758 407L761 409L770 410L771 409L773 409L777 405L778 403L778 395L776 391L773 388L768 386ZM883 79L882 89L881 90L881 97L880 98L880 125L881 126L881 134L882 135L882 142L883 143L883 150L884 151L883 166L878 177L876 179L872 187L861 226L856 236L850 244L847 250L847 254L846 255L846 265L845 266L845 275L844 276L844 282L843 283L842 291L839 296L834 299L828 299L827 298L813 298L812 299L810 299L807 302L806 308L810 314L812 315L816 315L817 316L829 313L838 308L845 308L852 311L859 318L867 333L867 335L873 347L882 360L889 373L890 381L891 382L892 406L893 407L893 411L894 412L894 415L896 418L896 420L910 448L914 454L923 463L941 473L943 473L950 476L957 477L958 478L972 479L973 480L1007 480L1008 479L1015 479L1016 478L1021 478L1022 477L1033 475L1034 474L1039 473L1042 471L1044 471L1056 465L1068 457L1080 446L1081 446L1095 430L1101 421L1107 409L1107 407L1112 394L1112 391L1113 390L1113 387L1114 386L1114 383L1116 378L1117 367L1118 366L1119 342L1120 341L1120 326L1121 325L1121 308L1122 307L1122 297L1123 296L1123 276L1122 275L1122 268L1121 267L1121 261L1120 260L1120 253L1119 252L1118 244L1115 237L1115 234L1114 233L1114 230L1113 229L1113 226L1111 221L1110 213L1099 185L1089 171L1085 167L1079 156L1079 154L1077 151L1077 149L1075 146L1075 144L1073 140L1073 137L1072 136L1072 133L1071 132L1068 117L1066 113L1065 106L1064 105L1063 99L1062 98L1058 84L1056 81L1056 79Z"/>
<path fill="#cccc00" fill-rule="evenodd" d="M764 387L759 390L757 393L757 395L756 396L756 401L757 402L757 404L758 406L762 409L772 409L774 408L777 404L777 401L778 400L777 394L773 389L769 387ZM808 304L808 310L813 314L821 314L827 311L830 307L830 304L828 302L823 300L820 300L819 299L812 300ZM885 79L885 82L883 87L883 92L882 93L882 100L881 101L881 128L882 129L882 137L883 138L883 146L884 147L884 162L883 163L882 170L873 186L873 188L871 192L871 195L869 199L868 206L866 210L865 217L863 221L863 224L857 237L855 239L849 250L849 253L848 254L848 266L847 267L847 277L846 278L846 299L861 313L868 327L868 329L874 342L890 365L893 371L894 377L895 378L895 384L896 385L896 403L897 404L897 410L898 411L898 413L915 445L924 455L937 462L939 462L946 465L949 465L950 466L961 467L962 468L1007 468L1008 467L1016 467L1017 466L1026 465L1027 464L1033 463L1039 460L1041 460L1057 452L1066 446L1075 438L1076 438L1087 427L1087 426L1092 421L1097 414L1102 404L1102 402L1105 396L1106 390L1109 383L1109 380L1111 376L1111 372L1112 371L1112 367L1113 366L1113 360L1114 359L1114 350L1115 349L1115 340L1116 339L1116 330L1117 329L1117 317L1118 316L1118 306L1119 305L1119 299L1120 298L1121 278L1120 277L1120 268L1119 267L1119 259L1118 258L1117 246L1115 242L1115 239L1114 238L1114 235L1113 234L1113 231L1111 226L1111 222L1110 221L1109 213L1108 212L1105 201L1101 193L1101 191L1093 177L1089 173L1082 163L1079 157L1079 155L1075 148L1075 146L1071 136L1071 133L1069 129L1069 126L1068 125L1067 118L1065 114L1065 111L1062 104L1062 101L1061 100L1059 92L1057 89L1056 84L1054 81L1054 79Z"/>
<path fill="#d0d000" fill-rule="evenodd" d="M762 389L757 395L757 403L758 405L761 408L763 408L764 409L770 409L771 408L773 408L776 405L776 403L777 402L777 396L775 392L772 389L770 389L769 388L764 388ZM810 304L809 308L810 310L814 313L821 312L825 308L825 305L823 303L818 301L812 302ZM887 79L885 89L884 90L883 103L882 104L882 131L883 132L883 141L884 142L884 164L883 165L882 171L874 185L862 230L851 250L851 253L850 254L850 269L849 270L849 288L850 289L851 295L863 309L869 321L869 323L872 328L872 330L875 335L875 337L877 339L882 348L893 362L897 369L897 371L899 375L899 379L900 380L900 386L901 387L901 403L902 404L903 411L907 419L914 429L915 432L925 446L931 450L935 451L938 453L948 455L949 456L954 456L955 457L984 457L985 456L1002 457L1003 456L1014 456L1015 455L1025 454L1026 453L1032 452L1035 450L1040 449L1054 442L1070 431L1077 424L1078 424L1092 408L1097 398L1097 396L1101 388L1101 386L1106 373L1107 366L1108 365L1108 360L1109 359L1109 354L1110 353L1110 347L1111 346L1111 339L1112 338L1112 332L1113 331L1114 313L1115 312L1115 306L1116 305L1117 293L1118 292L1118 268L1117 267L1116 249L1115 248L1115 245L1114 244L1114 241L1112 236L1112 232L1111 231L1109 217L1108 216L1107 209L1106 208L1105 203L1103 200L1102 195L1100 192L1100 190L1093 178L1082 164L1078 156L1078 154L1073 145L1073 143L1070 136L1070 133L1068 129L1068 126L1066 122L1066 119L1063 112L1063 109L1062 108L1059 97L1057 94L1056 89L1053 84L1052 79Z"/>
<path fill="#d4d400" fill-rule="evenodd" d="M764 389L758 394L758 397L757 398L758 404L762 408L766 408L767 409L768 408L772 408L776 404L776 395L772 390L770 389ZM821 306L819 304L817 304L816 303L815 304L813 304L811 306L811 308L812 310L814 311L818 311L821 308ZM889 79L887 84L887 87L886 88L886 92L885 93L885 97L884 98L884 105L883 106L883 135L884 136L884 146L885 147L884 166L883 167L883 170L873 189L873 192L872 193L872 196L870 201L870 205L869 206L866 221L864 225L864 228L853 250L853 253L852 254L852 284L853 285L854 291L866 307L881 340L886 346L888 350L892 354L901 368L901 370L903 373L904 380L905 381L905 385L906 386L907 401L908 402L909 408L913 416L920 425L922 429L933 440L948 446L952 446L953 447L961 447L962 448L983 447L984 446L1012 446L1013 445L1018 445L1019 444L1022 444L1023 443L1026 443L1027 442L1035 440L1040 437L1042 437L1048 434L1050 432L1061 426L1069 419L1070 419L1084 405L1088 399L1096 383L1096 381L1098 378L1098 376L1100 373L1100 371L1102 367L1102 364L1104 359L1104 355L1105 354L1105 350L1106 349L1107 339L1108 338L1109 327L1110 326L1112 306L1113 305L1114 295L1115 294L1115 287L1116 286L1116 269L1115 268L1115 255L1114 254L1114 247L1112 242L1112 238L1111 237L1111 233L1110 232L1110 228L1109 227L1108 217L1107 216L1106 209L1105 208L1102 197L1100 194L1099 189L1093 179L1082 165L1074 149L1074 147L1070 139L1070 136L1066 126L1066 123L1065 122L1058 99L1049 79Z"/>
<path fill="#d8d800" fill-rule="evenodd" d="M763 390L758 396L758 402L760 406L764 408L770 408L774 406L776 402L776 397L774 393L770 390ZM891 79L887 90L887 94L886 95L886 99L885 100L885 106L884 107L884 139L885 140L885 162L884 163L884 168L881 174L881 176L879 178L874 188L873 195L871 200L871 204L869 209L869 213L868 214L866 225L864 229L864 232L856 248L855 255L854 256L854 274L855 275L855 282L856 283L857 288L863 298L868 304L883 336L898 356L903 365L905 367L905 369L907 372L907 374L911 384L911 388L912 389L913 396L918 409L925 419L935 429L949 436L957 437L958 438L967 438L968 439L977 439L978 438L1001 438L1002 437L1009 437L1010 436L1014 436L1015 435L1018 435L1019 434L1022 434L1023 433L1031 431L1036 428L1038 428L1046 424L1048 422L1056 418L1059 415L1063 413L1068 408L1069 408L1078 399L1085 389L1093 374L1093 372L1096 367L1096 365L1098 361L1098 358L1100 354L1100 351L1101 350L1101 347L1103 342L1103 338L1104 337L1104 333L1105 332L1105 328L1106 327L1106 323L1107 322L1107 318L1108 317L1108 312L1109 311L1109 307L1110 306L1111 296L1112 295L1113 281L1114 280L1114 272L1113 271L1113 253L1112 252L1112 246L1111 245L1111 240L1110 239L1110 235L1109 234L1108 222L1107 221L1107 217L1106 216L1106 212L1104 208L1104 205L1103 204L1102 199L1100 196L1099 191L1097 188L1097 186L1081 164L1071 144L1071 142L1070 141L1059 106L1057 103L1057 101L1055 98L1053 91L1047 79Z"/>
<path fill="#dcdc00" fill-rule="evenodd" d="M766 390L765 391L763 391L759 395L758 400L760 405L762 407L769 408L770 407L772 407L775 403L775 396L772 392L768 390ZM892 79L892 82L890 85L890 88L888 92L888 96L887 97L887 101L886 102L886 107L885 108L885 123L884 124L884 126L885 127L885 165L884 166L884 169L883 170L882 175L878 181L874 190L873 198L872 199L872 203L871 204L871 208L870 209L869 217L867 222L867 226L865 230L864 236L862 239L862 241L859 246L859 248L857 252L857 274L858 275L858 280L859 281L859 283L861 286L861 288L863 290L864 293L868 298L873 308L875 310L877 314L877 316L888 337L902 355L907 364L909 366L914 377L914 379L916 382L919 392L922 397L922 399L930 411L937 418L941 421L951 426L953 426L957 428L960 428L961 429L965 429L966 430L997 430L998 429L1009 428L1010 427L1013 427L1014 426L1025 423L1051 410L1061 403L1073 392L1073 391L1078 386L1084 377L1085 374L1087 372L1090 366L1090 364L1093 359L1093 357L1098 344L1098 341L1099 340L1099 337L1101 333L1102 325L1104 320L1104 316L1105 315L1105 311L1107 306L1107 302L1109 297L1110 286L1111 285L1111 251L1110 250L1110 244L1109 243L1109 237L1108 236L1108 229L1107 228L1107 222L1106 221L1106 216L1105 215L1104 208L1103 207L1098 190L1091 178L1081 165L1075 152L1071 146L1071 144L1069 141L1069 139L1068 138L1063 121L1061 118L1059 110L1057 107L1055 100L1052 95L1052 93L1045 79Z"/>
<path fill="#e0e000" fill-rule="evenodd" d="M765 391L760 395L759 397L759 402L763 407L771 407L775 402L774 395L771 392ZM894 79L894 81L891 87L891 90L889 94L888 102L887 103L887 108L886 109L886 119L885 120L885 137L886 138L885 167L884 168L883 174L880 180L878 182L874 192L874 196L873 197L873 202L872 203L872 207L871 208L869 222L868 223L866 234L865 235L865 237L860 250L860 254L859 255L860 274L861 275L861 278L862 279L863 284L867 290L869 295L873 300L876 307L878 309L887 328L889 330L894 339L910 360L929 395L937 404L937 405L938 405L944 411L957 418L959 418L966 421L978 422L979 423L996 422L997 421L1005 420L1006 419L1020 415L1039 406L1041 404L1051 399L1062 391L1075 378L1082 368L1088 357L1088 355L1091 350L1092 345L1094 342L1094 340L1096 336L1096 333L1099 326L1099 323L1100 322L1100 319L1101 318L1101 315L1102 314L1105 299L1106 298L1106 294L1107 293L1107 289L1108 288L1108 282L1109 281L1109 249L1108 248L1108 240L1107 239L1106 222L1105 221L1105 216L1104 215L1102 204L1101 203L1097 189L1091 179L1088 176L1080 164L1076 155L1074 153L1069 143L1069 141L1067 138L1067 136L1066 135L1065 130L1063 127L1061 119L1059 116L1058 111L1055 106L1055 104L1052 99L1052 97L1045 83L1043 81L1043 79Z"/>
<path fill="#e4e400" fill-rule="evenodd" d="M765 392L760 396L760 403L765 407L769 407L774 403L774 397L771 393L769 392ZM896 79L891 92L890 98L889 99L888 109L887 110L887 117L886 118L886 160L885 161L885 169L884 170L883 175L875 191L874 201L873 202L873 207L872 208L872 212L871 213L871 217L870 218L868 232L867 233L867 236L866 237L865 243L862 251L862 268L863 269L864 277L871 292L873 294L875 299L881 308L885 317L887 319L892 329L900 341L912 356L916 363L919 366L929 382L937 391L937 392L948 402L954 405L956 407L960 409L962 409L965 411L967 411L971 413L974 413L975 414L979 414L980 415L990 415L991 414L995 414L996 413L1010 409L1015 406L1017 406L1043 393L1045 391L1050 389L1056 385L1065 377L1066 377L1075 367L1083 355L1088 345L1088 343L1092 335L1092 333L1098 317L1098 314L1100 310L1100 307L1101 306L1101 303L1102 302L1102 299L1103 298L1103 295L1105 290L1106 277L1107 276L1107 247L1106 246L1106 232L1105 231L1104 216L1103 215L1103 211L1100 203L1100 200L1099 199L1095 186L1082 168L1076 156L1074 154L1069 145L1069 143L1066 138L1064 130L1062 127L1062 125L1060 122L1060 120L1056 112L1056 110L1053 105L1053 103L1040 79Z"/>
<path fill="#e8e800" fill-rule="evenodd" d="M764 393L760 398L760 402L761 404L767 407L772 405L774 401L773 396L769 393ZM898 79L891 97L891 100L889 105L889 109L888 110L888 116L887 117L887 152L886 153L886 165L885 166L885 171L876 189L875 199L874 200L874 206L873 207L873 212L872 213L872 217L871 218L871 223L870 224L870 228L869 229L869 233L868 234L868 238L867 239L866 247L865 248L865 253L864 254L864 261L865 262L865 268L866 269L867 276L874 291L876 293L883 307L885 309L895 327L916 356L929 371L929 372L946 389L956 396L971 403L981 405L982 406L993 405L994 404L999 403L1002 401L1004 401L1007 399L1009 399L1018 394L1020 394L1052 378L1058 374L1072 361L1081 348L1088 334L1088 332L1091 327L1091 325L1092 324L1093 319L1095 316L1095 313L1099 303L1099 300L1100 299L1100 296L1102 291L1102 287L1103 286L1103 282L1104 281L1104 273L1105 272L1105 237L1104 236L1104 221L1103 220L1103 215L1102 214L1099 199L1097 195L1097 192L1093 184L1082 169L1076 157L1072 152L1066 140L1066 138L1064 135L1064 133L1062 130L1062 128L1060 125L1058 118L1055 113L1055 111L1044 89L1042 87L1038 79Z"/>
<path fill="#ecec00" fill-rule="evenodd" d="M764 394L761 397L761 403L765 406L769 406L773 403L773 398L770 394ZM900 79L894 92L894 94L892 98L892 101L891 102L891 105L890 106L890 109L889 110L888 126L887 127L887 155L886 156L886 168L885 169L885 172L884 173L883 178L879 184L876 192L876 198L875 199L875 205L874 206L874 211L873 212L873 217L872 218L872 224L871 225L870 236L869 237L868 247L867 248L867 264L868 265L868 269L869 270L870 275L872 278L872 280L877 290L879 292L882 299L884 301L889 311L895 319L896 322L918 352L934 369L935 369L940 374L952 383L968 391L978 393L979 394L990 394L991 393L995 393L996 392L1007 389L1010 387L1012 387L1030 378L1040 375L1045 372L1047 372L1060 364L1072 352L1083 335L1086 329L1086 327L1089 322L1089 320L1091 317L1091 315L1093 312L1093 310L1097 300L1097 297L1098 296L1098 293L1099 292L1099 289L1101 284L1102 271L1103 270L1103 221L1102 220L1101 210L1100 209L1098 198L1096 194L1096 191L1093 185L1081 168L1076 158L1070 150L1065 140L1065 138L1063 135L1061 128L1058 123L1058 121L1055 116L1055 114L1042 89L1036 81L1036 79Z"/>
<path fill="#f0f000" fill-rule="evenodd" d="M766 394L762 397L761 401L764 405L768 406L772 403L772 397L770 395ZM902 79L895 93L895 95L892 102L892 105L891 106L890 115L889 116L889 123L888 124L888 149L887 150L887 159L886 160L886 170L885 171L884 177L877 191L877 195L876 196L876 204L875 205L875 211L874 212L874 218L873 219L873 225L872 226L872 232L871 233L871 239L870 240L870 248L869 249L869 259L870 260L871 269L872 270L873 275L883 295L903 326L906 329L911 337L919 346L919 347L938 365L960 378L962 378L969 381L972 381L973 382L978 382L979 383L996 382L997 381L1000 381L1001 380L1004 380L1005 379L1013 377L1025 371L1043 366L1053 361L1059 357L1071 345L1078 335L1088 316L1088 314L1092 306L1092 304L1095 297L1095 294L1097 290L1097 287L1098 286L1098 282L1099 281L1099 277L1100 276L1100 269L1101 268L1102 221L1101 220L1101 214L1100 213L1100 209L1099 208L1096 193L1094 190L1093 186L1081 169L1076 159L1068 148L1065 142L1065 140L1062 135L1062 133L1059 128L1059 126L1048 103L1046 101L1044 96L1033 79Z"/>
<path fill="#f4f400" fill-rule="evenodd" d="M766 395L763 397L762 402L765 405L769 405L772 402L772 399L770 396ZM904 79L897 92L897 94L895 97L895 99L893 103L892 110L891 111L890 121L889 122L889 134L888 135L887 167L886 168L886 173L885 174L885 176L879 187L878 193L877 194L877 203L876 204L875 218L874 219L874 226L873 227L873 235L872 236L872 262L873 263L873 266L874 267L875 272L888 298L919 341L933 355L942 361L958 369L960 369L964 371L967 371L968 372L972 372L973 373L992 373L993 372L1000 372L1001 371L1009 370L1010 369L1021 366L1024 364L1027 364L1031 362L1034 362L1035 361L1043 359L1053 354L1060 349L1068 341L1080 324L1090 303L1090 301L1094 291L1096 280L1097 279L1098 268L1099 267L1099 249L1100 248L1100 238L1101 237L1101 221L1100 220L1100 214L1099 213L1099 209L1098 208L1098 204L1097 203L1095 192L1091 184L1083 173L1075 158L1066 146L1066 144L1061 135L1061 133L1049 108L1047 106L1044 99L1040 94L1039 91L1032 82L1031 79Z"/>
<path fill="#f8f800" fill-rule="evenodd" d="M768 396L766 396L763 398L763 402L764 404L766 404L767 405L768 404L770 404L771 402L771 399L770 397ZM906 79L898 93L898 95L896 98L896 100L893 107L893 110L892 111L892 115L891 116L891 120L890 121L890 129L889 130L889 147L888 148L888 156L887 157L887 170L886 171L885 178L878 192L878 201L877 202L877 210L876 211L875 228L874 229L874 259L875 260L875 264L876 265L877 270L890 296L896 305L900 309L912 326L925 341L925 342L937 352L955 361L957 361L964 364L968 364L969 365L1004 364L1005 363L1009 363L1017 360L1020 360L1021 359L1023 359L1027 357L1030 357L1034 355L1037 355L1049 350L1059 343L1067 335L1067 334L1074 326L1079 317L1081 315L1086 305L1086 303L1089 298L1089 296L1092 289L1092 286L1093 285L1093 282L1094 281L1094 278L1096 273L1096 268L1097 267L1097 253L1098 252L1098 244L1099 243L1100 221L1099 220L1099 213L1098 212L1097 203L1096 202L1094 191L1091 185L1083 174L1075 159L1067 149L1049 111L1047 109L1042 99L1028 79Z"/>
<path fill="#fcfc00" fill-rule="evenodd" d="M766 397L764 398L764 403L768 404L770 403L770 399L768 397ZM908 79L900 92L900 94L897 99L897 101L893 111L893 114L892 115L891 126L890 127L889 151L888 152L888 159L887 160L887 173L886 174L885 179L879 191L878 209L877 210L877 218L876 219L876 231L875 232L875 247L876 248L876 257L877 258L877 262L878 263L879 268L893 296L920 329L920 330L932 343L938 347L952 354L954 354L961 357L971 358L972 359L977 359L978 358L1003 358L1004 357L1009 357L1010 356L1017 355L1021 353L1024 353L1031 350L1034 350L1035 349L1040 348L1045 345L1047 345L1056 339L1069 326L1075 318L1086 298L1086 296L1088 293L1088 291L1090 287L1090 284L1092 280L1092 277L1094 272L1094 268L1095 267L1096 247L1097 246L1097 241L1098 240L1098 229L1099 228L1099 220L1098 219L1097 207L1096 206L1095 197L1094 196L1092 188L1085 178L1075 160L1066 149L1054 123L1052 121L1048 112L1046 110L1042 102L1025 79Z"/>
<path fill="#f8ff00" fill-rule="evenodd" d="M766 398L764 401L765 403L769 403L770 401L768 398ZM910 79L904 88L897 102L897 104L894 111L894 114L893 115L893 119L892 120L892 124L891 125L891 132L890 133L890 146L889 147L889 154L888 155L888 169L887 170L887 175L886 176L885 181L880 190L880 196L879 197L879 208L878 209L878 219L877 220L877 249L878 250L879 261L880 262L881 267L893 291L899 300L907 308L913 316L933 338L937 341L949 347L951 347L954 349L956 349L960 351L963 351L968 353L1000 353L1001 352L1011 351L1012 350L1018 349L1025 346L1028 346L1029 345L1040 342L1050 337L1058 330L1059 330L1072 316L1083 298L1083 296L1086 291L1086 289L1090 279L1090 276L1091 275L1091 272L1093 267L1094 250L1095 249L1095 244L1096 243L1096 238L1097 237L1097 226L1098 225L1098 221L1097 220L1097 212L1096 211L1096 206L1095 205L1094 196L1090 186L1079 169L1077 164L1064 147L1058 133L1056 131L1051 120L1049 118L1044 108L1030 88L1022 79Z"/>
<path fill="#ebff00" fill-rule="evenodd" d="M765 400L765 402L767 403L769 402L769 400L768 399L766 399ZM911 79L900 97L900 99L897 104L897 106L895 110L895 113L894 114L894 117L892 122L891 137L890 138L890 149L889 150L889 156L888 157L888 171L887 172L886 180L881 189L881 192L880 193L880 204L879 205L879 214L878 215L878 248L879 249L879 255L880 256L880 259L881 260L881 263L883 266L883 268L887 276L889 278L893 288L902 301L933 334L940 339L948 343L955 345L958 347L961 347L962 348L969 349L970 350L1000 350L1001 349L1005 349L1006 348L1013 347L1023 343L1026 343L1047 335L1058 327L1073 311L1083 294L1083 292L1085 289L1085 287L1090 274L1091 266L1092 265L1092 260L1093 259L1093 251L1094 250L1094 245L1095 244L1095 239L1096 238L1096 231L1097 230L1097 216L1096 215L1096 209L1095 208L1095 203L1094 202L1093 194L1089 185L1087 183L1086 180L1084 178L1074 160L1066 151L1053 125L1051 123L1049 118L1042 108L1041 105L1036 99L1034 95L1021 80L1021 79Z"/>
<path fill="#dfff00" fill-rule="evenodd" d="M768 400L766 400L766 401L767 402ZM913 79L903 93L895 112L895 115L893 120L893 124L892 125L891 141L890 142L890 151L889 152L889 157L888 158L888 173L887 174L886 181L881 191L880 210L879 211L878 235L879 236L879 247L880 248L881 258L882 259L884 267L887 273L889 275L896 290L905 302L937 333L943 336L945 338L947 338L952 341L954 341L957 343L959 343L966 346L976 347L977 348L993 348L994 347L1000 347L1001 346L1008 345L1027 338L1033 337L1036 335L1041 334L1047 331L1063 319L1072 309L1078 300L1083 290L1083 288L1085 285L1085 283L1088 276L1088 273L1090 269L1091 259L1092 258L1092 251L1093 250L1093 245L1094 244L1095 234L1096 233L1096 213L1095 212L1095 206L1094 205L1094 201L1093 200L1092 192L1088 184L1086 182L1085 179L1083 177L1081 172L1079 170L1073 159L1066 152L1055 130L1053 128L1045 113L1031 93L1019 80L1019 79Z"/>
<path fill="#d2ff00" fill-rule="evenodd" d="M914 79L904 93L899 103L899 105L897 108L897 110L895 114L895 117L893 122L893 127L892 128L892 134L891 135L891 145L890 146L890 153L889 154L889 167L888 168L888 175L887 176L886 182L882 189L882 192L881 193L881 206L880 207L880 217L879 218L879 237L880 238L880 246L881 247L881 252L882 253L882 257L883 258L884 263L897 289L901 295L924 318L925 318L937 329L943 333L949 336L951 336L956 339L958 339L964 342L967 342L971 344L974 344L975 345L989 346L990 345L996 345L997 344L1004 343L1005 342L1013 340L1016 338L1036 332L1049 326L1059 319L1071 307L1077 298L1083 286L1083 284L1086 278L1087 272L1089 268L1090 259L1091 258L1091 252L1092 251L1092 246L1093 245L1094 235L1095 234L1095 224L1096 223L1096 219L1095 218L1095 210L1094 209L1093 198L1092 197L1091 191L1088 185L1086 183L1084 178L1082 176L1079 169L1077 167L1074 161L1067 154L1063 148L1056 133L1054 131L1052 126L1050 124L1049 121L1038 104L1027 91L1027 90L1017 80L1017 79Z"/>
<path fill="#c5ff00" fill-rule="evenodd" d="M916 79L905 93L896 113L896 116L895 117L894 124L893 125L893 129L892 130L891 148L890 149L890 155L889 156L889 171L888 172L888 177L887 178L887 181L882 191L882 200L881 201L881 212L880 213L880 238L881 239L881 246L882 247L883 256L884 257L885 262L887 265L887 267L891 273L898 288L903 295L916 308L917 308L923 314L924 314L940 327L953 334L955 334L963 338L965 338L975 342L978 342L979 343L993 343L994 342L997 342L998 341L1003 340L1006 338L1011 337L1014 335L1025 332L1028 330L1030 330L1031 329L1039 327L1044 324L1046 324L1048 322L1053 320L1060 315L1073 301L1081 287L1081 285L1083 282L1083 280L1088 267L1089 259L1090 258L1090 252L1091 251L1091 247L1092 246L1092 242L1093 241L1093 237L1094 236L1094 229L1095 228L1095 214L1094 213L1094 206L1093 205L1092 195L1087 184L1085 182L1082 175L1080 173L1078 168L1076 166L1073 160L1065 152L1057 136L1055 134L1053 129L1051 127L1050 124L1046 119L1041 110L1038 107L1033 99L1028 94L1028 93L1015 80L1015 79Z"/>
<path fill="#b8ff00" fill-rule="evenodd" d="M917 79L905 95L898 109L898 111L896 115L896 118L895 119L894 126L893 127L893 132L892 133L891 150L890 151L890 156L889 157L889 173L888 174L888 179L883 190L883 194L882 195L882 207L881 208L881 239L882 240L883 251L884 252L884 255L885 256L886 261L888 264L888 266L891 272L893 274L899 287L904 294L913 303L914 303L920 309L940 323L955 331L957 331L962 334L967 335L970 337L972 337L982 341L991 341L992 340L997 339L1002 336L1004 336L1007 334L1009 334L1012 332L1014 332L1020 329L1037 324L1040 322L1042 322L1045 320L1049 319L1061 311L1070 302L1075 295L1083 278L1083 276L1087 266L1088 259L1089 258L1089 253L1090 252L1090 248L1091 247L1091 243L1092 242L1092 238L1093 237L1093 231L1094 230L1094 210L1093 209L1093 203L1092 202L1091 193L1086 183L1084 181L1080 172L1078 170L1074 162L1066 154L1062 148L1054 132L1037 106L1030 98L1030 97L1022 89L1022 88L1013 80L1013 79Z"/>
<path fill="#acff00" fill-rule="evenodd" d="M919 79L910 89L904 98L896 117L896 120L894 125L894 129L893 130L892 144L891 145L891 152L890 153L890 158L889 159L889 176L888 177L888 180L887 181L886 186L883 192L882 215L881 216L881 229L882 230L883 245L884 246L885 254L886 255L887 260L889 263L889 265L893 273L895 275L900 286L905 293L912 300L931 314L957 328L959 328L962 330L964 330L967 332L969 332L972 334L974 334L977 336L979 336L983 338L990 338L991 337L993 337L1000 333L1002 333L1012 328L1017 327L1020 325L1022 325L1035 320L1041 319L1054 313L1061 308L1070 299L1076 290L1079 284L1079 282L1082 277L1082 275L1087 262L1088 254L1089 253L1089 248L1090 247L1091 239L1092 238L1094 218L1093 217L1093 206L1092 205L1091 195L1078 169L1072 160L1064 152L1049 125L1040 113L1038 109L1031 101L1031 100L1025 94L1025 93L1016 84L1015 84L1011 80L1011 79Z"/>
<path fill="#9fff00" fill-rule="evenodd" d="M920 79L920 80L912 88L905 98L899 110L899 112L896 119L896 122L894 127L894 131L893 132L892 147L891 148L891 154L890 155L890 170L889 171L889 178L888 179L887 185L884 191L884 197L883 198L883 210L882 211L882 232L883 233L883 240L884 241L885 250L886 251L889 262L901 285L912 298L929 310L959 325L964 326L967 328L972 329L983 334L990 334L1004 327L1009 326L1012 324L1020 322L1023 320L1025 320L1029 318L1032 318L1033 317L1036 317L1037 316L1040 316L1041 315L1046 314L1054 310L1060 306L1070 296L1074 290L1081 276L1082 271L1085 265L1085 262L1086 261L1086 258L1088 253L1088 249L1090 244L1091 235L1092 234L1092 227L1093 226L1093 211L1092 210L1091 197L1090 196L1090 193L1076 166L1065 154L1061 148L1058 141L1053 134L1052 131L1036 108L1027 98L1027 97L1013 83L1012 83L1009 79Z"/>
<path fill="#92ff00" fill-rule="evenodd" d="M922 79L915 86L906 98L905 101L902 105L902 107L899 112L899 114L896 121L896 124L894 129L894 133L893 134L892 150L891 151L891 155L890 156L890 173L889 174L889 180L888 181L888 184L885 190L885 194L884 195L884 205L883 206L883 233L884 234L885 245L886 246L887 253L890 259L890 261L902 284L912 296L928 307L939 312L941 312L952 318L954 318L964 323L970 324L978 327L981 327L982 328L990 328L1006 322L1009 322L1010 321L1015 320L1018 318L1020 318L1030 314L1034 314L1035 313L1043 312L1056 306L1064 300L1070 293L1079 277L1079 275L1081 272L1081 270L1083 267L1083 265L1085 261L1085 258L1086 257L1086 254L1088 249L1088 245L1090 240L1090 236L1091 235L1091 230L1092 229L1092 207L1091 206L1090 195L1078 170L1072 161L1063 152L1055 137L1038 112L1034 108L1030 102L1006 79Z"/>
<path fill="#85ff00" fill-rule="evenodd" d="M924 79L909 95L905 101L897 119L897 122L896 123L896 126L894 131L894 136L893 137L892 152L891 153L891 157L890 158L890 176L889 177L888 186L885 193L885 200L884 201L883 225L884 226L884 234L885 235L886 245L887 246L887 249L888 250L890 258L900 278L908 290L912 294L923 302L933 307L944 310L963 319L966 319L971 321L992 321L993 320L1005 319L1006 318L1016 316L1019 314L1021 314L1025 312L1043 309L1055 304L1061 300L1068 293L1074 284L1078 276L1078 274L1081 269L1081 267L1086 254L1086 250L1087 249L1087 246L1089 241L1089 237L1090 236L1090 232L1091 231L1092 214L1091 213L1091 203L1090 202L1090 197L1089 196L1089 193L1076 167L1064 154L1055 138L1045 123L1032 107L1032 106L1017 90L1016 90L1004 79Z"/>
<path fill="#79ff00" fill-rule="evenodd" d="M926 79L921 84L920 84L910 95L906 101L899 115L899 117L896 124L896 127L895 128L895 132L894 133L893 146L892 147L892 153L891 154L890 179L889 180L889 185L886 192L886 197L885 198L885 207L884 208L884 228L885 229L885 235L886 236L887 245L888 246L889 252L891 255L891 257L901 277L909 289L913 293L925 301L929 302L932 304L949 309L954 312L956 312L959 314L961 314L965 316L968 316L969 317L980 317L981 316L986 316L987 315L993 315L994 316L1007 315L1008 314L1011 314L1012 313L1014 313L1024 309L1027 309L1028 308L1034 308L1035 307L1044 306L1056 301L1069 289L1076 277L1076 275L1080 268L1080 266L1082 263L1082 261L1085 254L1085 251L1086 250L1086 247L1088 242L1088 238L1089 237L1089 233L1090 232L1090 225L1091 224L1091 207L1090 206L1090 199L1089 198L1088 192L1083 183L1083 181L1078 171L1076 169L1073 163L1062 152L1055 139L1034 110L1014 89L1013 89L1001 79Z"/>
<path fill="#6cff00" fill-rule="evenodd" d="M928 79L911 95L905 104L900 114L900 116L896 126L895 134L894 135L893 149L892 150L892 155L891 156L891 173L890 174L890 183L887 191L886 202L885 203L885 230L886 231L887 241L888 242L888 245L889 246L891 254L893 257L893 259L896 265L898 267L903 278L910 288L920 296L930 301L951 307L962 312L971 313L972 314L974 314L975 313L981 313L982 312L987 312L988 311L990 311L991 312L1006 312L1007 311L1014 310L1024 306L1042 304L1055 299L1061 295L1066 290L1071 283L1082 260L1082 258L1084 254L1084 251L1086 247L1086 244L1087 243L1088 235L1089 234L1089 228L1090 227L1090 203L1089 202L1089 197L1088 196L1088 193L1077 170L1075 168L1074 165L1063 154L1049 131L1036 115L1036 114L1031 109L1031 108L1012 89L1003 83L999 79Z"/>
<path fill="#5fff00" fill-rule="evenodd" d="M930 79L922 85L913 94L903 109L903 111L898 121L896 131L895 132L894 143L893 144L893 151L892 152L892 158L891 159L891 178L890 179L890 186L889 187L889 190L887 194L887 199L886 200L885 223L886 224L886 231L887 232L888 241L890 245L891 251L904 277L910 286L918 293L933 300L944 302L962 309L971 310L972 311L982 310L983 309L1006 309L1007 308L1014 307L1015 306L1025 304L1026 303L1044 301L1056 296L1067 286L1071 280L1080 262L1080 260L1082 257L1082 255L1084 251L1084 248L1085 247L1085 244L1086 243L1086 240L1088 235L1088 230L1089 229L1089 220L1090 219L1089 199L1088 198L1087 192L1084 187L1084 185L1073 164L1065 157L1046 128L1042 124L1034 113L1027 106L1027 105L1010 89L999 82L996 79Z"/>
<path fill="#52ff00" fill-rule="evenodd" d="M932 79L916 92L905 107L897 126L897 129L895 134L895 139L894 140L893 153L892 154L892 162L891 163L891 183L890 184L890 189L889 190L889 193L887 198L887 205L886 206L886 226L887 227L887 232L888 233L889 241L890 242L893 253L899 265L901 267L905 276L911 285L915 289L921 293L934 298L949 301L950 302L955 303L958 305L968 307L969 308L1007 306L1008 305L1015 304L1023 301L1035 300L1036 299L1042 299L1043 298L1046 298L1052 295L1054 295L1060 291L1065 286L1071 277L1081 257L1081 255L1084 248L1086 237L1087 236L1087 232L1088 231L1088 225L1089 224L1089 202L1088 201L1087 193L1084 188L1084 186L1081 181L1081 179L1077 171L1075 169L1074 166L1062 154L1051 136L1042 124L1031 112L1031 111L1014 94L993 79Z"/>
<path fill="#46ff00" fill-rule="evenodd" d="M935 79L923 87L912 98L907 105L902 114L902 116L898 124L898 127L897 128L897 131L895 136L895 141L894 142L894 148L893 149L893 155L892 156L891 188L890 189L890 192L888 197L888 201L887 202L887 215L886 217L887 218L888 233L889 234L889 237L890 238L890 241L891 242L893 250L900 264L902 266L906 275L912 284L916 288L925 293L927 293L931 295L934 295L935 296L938 296L939 297L947 298L948 299L954 300L957 302L963 303L967 305L973 305L974 306L978 306L979 305L992 305L993 304L1003 304L1004 303L1008 303L1009 302L1012 302L1013 301L1016 301L1017 300L1020 300L1025 298L1031 298L1032 297L1044 296L1045 295L1051 294L1057 291L1066 282L1069 276L1071 274L1076 263L1078 261L1078 259L1081 254L1081 252L1084 245L1084 242L1086 237L1086 233L1087 232L1087 227L1088 226L1088 216L1089 215L1088 199L1087 198L1087 195L1084 189L1084 187L1075 168L1061 153L1051 137L1041 125L1041 124L1036 119L1036 118L1019 100L1018 100L1011 93L1003 87L995 83L990 79Z"/>
<path fill="#39ff00" fill-rule="evenodd" d="M937 79L934 82L929 84L922 89L913 98L906 108L900 120L900 122L897 129L897 132L896 133L895 143L894 144L894 151L893 152L893 158L892 159L892 185L891 186L891 191L890 192L890 195L888 200L888 207L887 208L887 222L888 223L888 229L889 230L891 241L897 256L899 258L901 263L903 265L906 272L908 274L912 282L919 288L931 293L935 293L936 294L940 294L945 296L949 296L950 297L952 297L962 301L965 301L969 303L976 303L977 304L979 304L980 303L993 303L994 302L1001 302L1002 301L1006 301L1007 300L1010 300L1011 299L1021 297L1022 296L1035 295L1036 294L1043 294L1044 293L1047 293L1055 290L1064 282L1069 273L1071 271L1073 266L1075 264L1080 254L1080 252L1083 245L1083 242L1085 238L1085 235L1086 234L1087 221L1088 220L1088 202L1087 201L1087 197L1086 196L1085 191L1083 188L1083 186L1081 183L1081 181L1079 178L1079 176L1071 163L1062 155L1051 138L1040 125L1040 124L1033 117L1033 116L1015 98L999 86L990 82L986 79Z"/>
<path fill="#2cff00" fill-rule="evenodd" d="M928 86L915 97L915 98L908 106L901 119L901 121L897 131L896 139L895 140L895 145L894 146L893 162L892 163L892 190L891 191L891 194L889 198L889 203L888 204L888 224L889 225L889 229L890 230L890 234L892 238L892 241L899 257L904 264L911 278L917 285L922 288L924 288L928 290L931 290L932 291L947 293L948 294L951 294L967 300L977 301L978 302L994 301L995 300L999 300L1000 299L1003 299L1004 298L1007 298L1008 297L1011 297L1015 295L1023 294L1024 293L1046 291L1056 287L1059 285L1064 279L1069 270L1071 268L1072 265L1074 263L1076 258L1078 256L1079 252L1081 249L1081 246L1084 239L1085 231L1086 230L1087 213L1088 212L1088 208L1087 207L1087 199L1086 198L1085 192L1081 184L1080 179L1075 169L1060 153L1048 135L1039 125L1039 124L1028 113L1028 112L1012 97L998 87L982 79L941 79Z"/>
<path fill="#1fff00" fill-rule="evenodd" d="M930 86L924 90L911 103L906 112L904 114L897 132L897 136L896 137L896 141L895 142L895 147L894 148L894 156L893 157L893 170L892 171L893 188L892 189L892 193L890 197L890 201L889 202L889 210L888 211L889 226L890 227L891 234L892 235L895 246L900 256L907 266L911 275L917 283L924 287L932 288L933 289L938 289L939 290L945 290L946 291L953 292L969 298L977 299L978 300L988 300L989 299L994 299L995 298L1002 297L1009 294L1012 294L1016 292L1020 292L1021 291L1025 291L1026 290L1044 289L1045 288L1049 288L1054 286L1062 279L1068 270L1069 267L1075 259L1080 249L1080 247L1082 243L1082 240L1084 236L1085 227L1086 226L1086 218L1087 217L1087 202L1086 201L1086 197L1085 196L1083 188L1081 185L1080 180L1078 177L1078 175L1075 171L1074 168L1072 165L1061 155L1052 141L1048 137L1044 131L1037 124L1037 123L1016 102L997 88L987 83L980 81L978 79L944 79L942 81L938 82Z"/>
<path fill="#13ff00" fill-rule="evenodd" d="M923 92L912 103L907 110L898 130L898 133L896 138L896 143L895 144L895 150L894 151L894 159L893 160L893 192L891 196L890 205L889 206L889 221L890 222L890 227L891 228L891 231L892 232L895 243L897 246L897 248L899 252L907 263L914 277L920 283L924 285L934 286L935 287L948 288L949 289L956 290L962 293L964 293L974 297L977 297L978 298L989 298L990 297L997 296L998 295L1000 295L1013 290L1016 290L1017 289L1027 288L1028 287L1048 286L1055 283L1062 276L1076 255L1079 249L1079 247L1082 240L1082 237L1084 233L1084 229L1085 228L1086 211L1087 210L1087 208L1086 207L1086 199L1085 198L1085 195L1082 189L1079 178L1073 167L1060 154L1049 138L1034 122L1034 121L1013 101L996 89L986 84L975 81L972 79L950 79L947 81L934 85L932 87Z"/>
<path fill="#06ff00" fill-rule="evenodd" d="M929 89L922 94L913 103L906 113L901 123L901 125L898 132L897 139L896 140L895 153L894 154L894 162L893 163L893 183L894 184L894 190L893 191L893 194L892 195L891 202L890 203L890 223L891 224L891 228L892 229L896 243L900 251L913 270L915 275L920 281L924 283L948 285L956 288L959 288L962 290L964 290L967 292L969 292L979 296L989 296L990 295L993 295L999 292L1004 291L1007 289L1013 288L1017 286L1021 286L1022 285L1027 285L1028 284L1044 284L1045 283L1050 283L1051 282L1053 282L1058 278L1077 251L1077 249L1079 246L1079 244L1082 237L1082 234L1084 229L1084 225L1085 224L1085 217L1086 216L1086 202L1085 201L1084 193L1082 190L1079 179L1072 166L1061 156L1056 148L1044 134L1044 133L1017 106L997 91L982 84L972 82L971 81L966 81L965 80L950 81L949 82L942 83Z"/>
<path fill="#00fd05" fill-rule="evenodd" d="M925 93L921 97L920 97L910 108L902 122L902 124L900 127L900 129L898 133L897 141L896 142L896 147L895 148L894 167L893 168L894 193L892 197L891 207L890 208L890 218L891 219L891 224L892 225L893 232L896 238L896 240L902 252L911 263L918 276L921 279L926 281L940 281L941 282L953 283L954 284L962 286L967 289L969 289L974 292L976 292L980 294L989 294L997 290L1004 288L1007 286L1009 286L1013 284L1016 284L1017 283L1020 283L1021 282L1026 282L1027 281L1047 281L1048 280L1051 280L1056 277L1056 276L1060 272L1075 252L1080 241L1081 235L1083 231L1083 227L1084 226L1085 209L1086 208L1085 207L1085 199L1084 198L1084 195L1083 194L1078 177L1073 168L1070 164L1068 163L1059 154L1054 146L1044 135L1044 134L1021 111L1020 111L1013 104L996 92L981 85L978 85L973 83L969 83L968 82L952 82L951 83L947 83L946 84L943 84L937 87L935 87Z"/>
<path fill="#00fb0f" fill-rule="evenodd" d="M925 95L913 106L906 116L899 132L899 135L897 140L897 144L896 145L896 151L895 152L895 161L894 162L894 181L895 182L895 193L892 201L892 206L891 207L891 217L892 218L892 223L893 224L893 227L894 228L896 236L904 251L914 262L921 273L925 276L946 276L947 277L951 277L952 278L958 279L966 283L968 283L977 288L979 288L983 290L990 289L1006 281L1008 281L1015 278L1018 278L1019 277L1031 276L1032 275L1050 275L1052 274L1064 262L1064 261L1074 250L1078 242L1078 240L1082 230L1082 227L1083 226L1084 213L1085 212L1084 198L1083 197L1083 194L1082 193L1077 176L1071 166L1060 156L1048 140L1024 116L1023 116L1016 109L1015 109L1006 101L997 95L985 89L983 89L980 87L973 86L972 85L968 85L967 84L953 84L952 85L947 85L946 86L940 87L937 89L935 89Z"/>
<path fill="#00f819" fill-rule="evenodd" d="M922 99L912 109L906 118L902 126L902 128L899 134L898 141L897 142L896 156L895 157L895 166L894 167L894 176L895 177L896 192L895 193L895 196L893 201L893 206L892 207L892 217L893 218L893 222L894 223L894 226L895 227L896 232L902 244L909 252L909 253L926 268L928 268L929 269L946 269L947 270L950 270L951 271L959 273L962 275L964 275L967 277L969 277L974 280L976 280L982 283L987 283L988 282L993 281L998 278L1000 278L1003 276L1005 276L1015 272L1026 270L1027 269L1034 269L1035 268L1049 268L1056 264L1064 257L1065 257L1071 251L1075 245L1076 241L1078 238L1078 236L1080 233L1080 230L1082 226L1082 221L1083 220L1083 214L1084 213L1084 202L1083 201L1082 193L1079 186L1079 183L1074 171L1072 168L1061 158L1061 157L1057 153L1053 147L1045 139L1045 138L1025 119L1024 119L1008 105L996 97L991 95L989 93L987 93L979 89L976 89L971 87L966 87L965 86L953 86L952 87L947 87L946 88L943 88L942 89L937 90L929 94Z"/>
<path fill="#00f623" fill-rule="evenodd" d="M923 100L912 111L907 118L900 133L899 139L898 140L898 144L897 145L897 150L896 151L896 161L895 162L895 180L896 181L896 185L897 186L897 191L896 192L896 195L894 200L894 205L893 206L893 216L894 217L894 221L895 222L895 225L898 231L898 233L905 245L911 251L921 258L923 258L927 260L936 260L937 259L944 260L959 267L964 268L967 270L969 270L973 272L980 273L981 274L988 274L989 273L996 272L1003 269L1013 267L1014 266L1016 266L1020 264L1023 264L1034 260L1049 261L1050 260L1056 259L1064 254L1073 245L1078 235L1078 233L1080 229L1080 226L1081 225L1081 222L1082 221L1082 215L1083 214L1083 200L1082 199L1081 192L1079 188L1079 185L1078 184L1078 181L1076 178L1076 176L1070 166L1067 164L1057 154L1052 147L1026 122L1025 122L1020 117L1019 117L1006 106L986 94L984 94L981 92L979 92L975 90L972 90L971 89L965 89L964 88L953 88L952 89L947 89L946 90L943 90L942 91L937 92Z"/>
<path fill="#00f32e" fill-rule="evenodd" d="M915 109L915 110L908 118L901 132L901 134L899 138L899 141L898 142L898 146L897 147L897 156L896 157L896 166L895 167L895 175L896 176L896 182L897 183L897 195L895 199L895 204L894 205L894 216L895 217L895 221L896 222L897 227L902 237L909 246L916 251L924 254L944 253L955 259L957 259L963 262L966 262L971 264L985 265L986 264L995 264L996 263L1007 262L1008 261L1015 260L1034 253L1039 253L1040 254L1044 254L1045 255L1055 255L1065 250L1072 243L1079 229L1079 226L1081 221L1081 217L1082 216L1082 199L1081 198L1081 195L1080 194L1080 191L1079 190L1079 187L1078 186L1078 183L1077 182L1076 177L1071 168L1065 162L1064 162L1058 156L1052 148L1032 129L1031 129L1016 116L998 103L983 95L981 95L974 92L971 92L970 91L953 90L952 91L942 92L936 95L934 95L930 98L927 99Z"/>
<path fill="#00f138" fill-rule="evenodd" d="M913 113L906 123L903 129L903 131L901 134L901 136L899 140L899 144L898 145L898 150L897 151L897 161L896 162L896 179L897 180L897 184L898 185L898 194L897 195L896 203L895 204L895 215L896 216L896 220L897 221L898 226L904 237L907 241L913 246L923 250L945 249L955 254L957 254L961 256L964 256L965 257L984 257L985 256L1006 256L1007 255L1012 255L1013 254L1017 254L1021 252L1024 252L1031 249L1041 249L1046 251L1056 251L1065 247L1072 240L1077 231L1077 229L1079 225L1080 217L1081 216L1081 210L1082 209L1081 197L1078 189L1078 185L1077 184L1076 178L1072 170L1052 150L1052 149L1044 141L1043 141L1036 134L1035 134L1026 126L1021 123L1009 113L994 103L977 95L974 95L969 93L964 93L963 92L952 92L951 93L946 93L945 94L942 94L941 95L936 96L925 102Z"/>
<path fill="#00ee42" fill-rule="evenodd" d="M911 117L907 123L900 139L900 142L898 147L897 165L896 166L896 175L897 176L897 181L898 182L898 186L899 187L899 192L898 193L898 197L896 202L896 215L897 216L897 219L898 220L899 225L903 233L910 241L917 245L923 246L924 247L944 246L945 247L948 247L949 248L951 248L958 251L961 251L962 252L978 252L979 251L983 251L984 250L1012 250L1013 249L1018 249L1019 248L1023 248L1024 247L1028 247L1029 246L1041 246L1042 247L1046 247L1047 248L1056 248L1057 247L1062 246L1065 244L1072 237L1077 228L1077 226L1079 222L1079 218L1080 217L1080 212L1081 211L1081 201L1080 200L1080 196L1079 195L1079 192L1078 191L1077 183L1076 182L1075 177L1070 168L1065 163L1064 163L1046 144L1045 144L1039 138L1038 138L1034 134L1014 119L1010 117L1007 114L995 106L990 104L986 101L984 101L979 98L977 98L973 96L963 95L962 94L951 94L950 95L945 95L944 96L941 96L935 99L933 99L923 105Z"/>
<path fill="#00ec4c" fill-rule="evenodd" d="M914 115L908 123L902 135L902 137L900 141L900 144L899 145L899 149L898 150L898 160L897 161L897 178L898 179L898 183L899 184L899 195L898 196L898 200L897 201L897 215L898 216L899 222L903 230L912 240L923 244L946 244L947 245L951 245L952 246L959 247L960 248L975 248L976 247L980 247L981 246L985 246L986 245L1000 245L1001 246L1004 246L1005 245L1018 245L1019 244L1026 244L1027 243L1038 243L1039 244L1044 244L1045 245L1057 245L1066 241L1071 236L1077 225L1078 219L1079 218L1079 214L1080 213L1080 199L1079 198L1079 194L1078 193L1075 178L1071 170L1062 161L1061 161L1047 146L1046 146L1036 137L1032 135L1025 129L1018 125L1008 117L991 106L981 101L979 101L972 98L969 98L968 97L963 97L962 96L950 96L949 97L940 98L927 104L920 109Z"/>
<path fill="#00e957" fill-rule="evenodd" d="M911 120L907 126L901 139L901 142L899 147L899 153L898 154L898 164L897 165L897 175L898 176L898 181L900 186L900 194L899 195L899 199L898 200L898 215L899 216L900 221L902 224L902 226L906 232L911 237L917 240L919 240L920 241L925 241L926 242L947 242L948 243L960 244L961 245L975 244L976 243L986 242L987 241L1040 241L1041 242L1046 242L1047 243L1055 243L1065 239L1068 237L1073 231L1076 225L1076 223L1078 219L1078 215L1079 214L1079 197L1077 192L1077 188L1076 187L1075 179L1069 168L1048 148L1047 148L1034 137L992 109L975 101L969 100L968 99L963 99L962 98L948 98L947 99L943 99L942 100L939 100L936 102L934 102L922 109Z"/>
<path fill="#00e761" fill-rule="evenodd" d="M910 123L907 129L905 131L905 133L902 138L901 144L900 145L900 149L899 150L899 159L898 160L898 178L899 179L899 183L900 184L901 191L900 192L900 197L899 198L898 208L899 209L899 215L903 225L907 231L913 236L920 239L926 239L927 240L948 240L949 241L957 241L958 242L972 241L973 240L977 240L978 239L982 239L983 238L988 238L989 237L1024 237L1025 238L1034 238L1035 239L1040 239L1041 240L1053 241L1054 240L1058 240L1065 237L1069 234L1074 227L1077 219L1077 216L1078 215L1079 202L1078 201L1078 195L1076 190L1075 181L1070 170L1043 145L1027 134L1016 128L996 114L977 104L975 104L971 102L963 101L962 100L947 100L946 101L938 102L924 109L920 113L919 113Z"/>
<path fill="#00e46b" fill-rule="evenodd" d="M907 129L901 143L900 152L899 153L899 162L898 163L898 175L899 176L899 181L901 186L901 195L900 196L900 201L899 202L899 210L900 211L901 218L905 226L908 230L913 234L920 237L925 237L926 238L965 239L966 238L970 238L971 237L974 237L975 236L978 236L983 234L988 234L989 233L1008 232L1009 233L1018 233L1019 234L1030 235L1031 236L1035 236L1036 237L1040 237L1041 238L1053 239L1054 238L1058 238L1065 235L1069 232L1072 228L1077 216L1077 211L1078 210L1078 199L1077 198L1077 193L1076 192L1076 188L1075 187L1075 182L1074 181L1073 176L1068 168L1043 146L1034 140L1031 139L1029 137L1026 136L1024 134L1021 133L1019 131L1016 130L1014 128L1011 127L992 114L987 112L981 108L979 108L971 104L963 103L962 102L945 102L944 103L941 103L940 104L937 104L934 106L932 106L922 112L911 123Z"/>
<path fill="#00e275" fill-rule="evenodd" d="M906 132L901 145L901 148L900 149L900 157L899 158L899 178L900 179L900 183L901 184L901 188L902 189L901 199L900 200L900 211L901 212L902 218L905 224L908 228L914 233L919 235L923 235L924 236L959 237L960 236L969 235L979 231L982 231L983 230L990 229L991 228L1012 228L1013 229L1017 229L1018 230L1021 230L1025 232L1028 232L1029 233L1032 233L1033 234L1036 234L1041 236L1054 237L1055 236L1059 236L1064 234L1067 232L1072 226L1075 220L1076 212L1077 211L1077 196L1076 195L1076 191L1075 190L1074 180L1069 170L1053 155L1052 155L1043 147L1037 144L1035 142L1030 140L1028 138L1012 130L986 113L973 107L971 107L967 105L963 105L962 104L944 104L943 105L939 105L929 109L920 115L913 122Z"/>
<path fill="#00e07d" fill-rule="evenodd" d="M908 130L902 143L901 151L900 152L900 161L899 162L899 176L900 177L900 181L902 186L901 212L902 213L903 218L906 222L907 225L915 232L917 232L921 234L929 234L930 235L955 235L956 234L962 234L963 233L971 231L978 227L980 227L985 224L987 224L991 222L1007 222L1008 223L1015 224L1018 226L1020 226L1023 228L1025 228L1028 230L1030 230L1037 233L1040 233L1045 235L1056 235L1066 231L1072 224L1075 217L1076 205L1077 204L1077 202L1076 201L1075 187L1074 186L1074 182L1073 181L1072 176L1066 167L1058 161L1051 154L1038 145L1015 134L1013 132L1006 129L1001 125L998 124L990 118L975 110L973 110L970 108L967 108L962 106L956 106L955 105L942 106L941 107L938 107L928 111L917 119Z"/>
<path fill="#00e085" fill-rule="evenodd" d="M908 131L903 141L902 147L901 148L901 152L900 153L900 163L899 164L899 174L900 175L900 180L902 185L901 210L902 211L902 214L904 217L904 219L906 221L907 224L913 230L920 233L925 233L926 234L954 234L955 233L960 233L961 232L967 231L977 226L979 224L992 218L1004 218L1005 219L1012 220L1029 229L1031 229L1034 231L1036 231L1040 233L1044 233L1045 234L1057 234L1058 233L1063 232L1066 230L1072 223L1075 215L1075 211L1076 210L1076 195L1075 194L1075 188L1074 187L1073 179L1069 171L1061 163L1060 163L1048 152L1039 147L1037 145L1011 133L1009 131L999 126L988 118L983 116L977 112L975 112L972 110L970 110L966 108L957 107L956 106L941 107L940 108L934 109L926 113L919 118L913 124Z"/>
<path fill="#00e290" fill-rule="evenodd" d="M907 134L902 146L902 149L901 150L901 157L900 158L900 177L901 178L902 186L903 187L902 210L906 220L913 228L919 231L923 231L924 232L948 232L949 231L956 231L957 230L960 230L963 228L965 228L971 224L978 217L984 208L989 203L993 201L1007 201L1009 202L1012 205L1016 213L1021 219L1032 227L1045 232L1057 232L1058 231L1061 231L1066 228L1071 222L1073 218L1074 211L1075 210L1075 192L1074 191L1074 185L1073 184L1072 178L1069 172L1064 166L1063 166L1058 161L1057 161L1045 151L1040 149L1038 147L1005 133L992 124L989 123L984 119L973 113L971 113L964 110L961 110L960 109L953 109L952 108L941 109L940 110L937 110L927 114L921 118L911 128Z"/>
<path fill="#00e49b" fill-rule="evenodd" d="M908 134L902 148L901 162L900 163L900 173L901 174L901 179L903 184L903 210L908 221L916 228L921 229L922 230L945 230L946 229L953 229L954 228L957 228L963 225L969 219L972 214L973 207L974 206L974 196L976 192L980 189L982 189L983 188L994 188L995 189L1009 190L1010 191L1015 191L1017 192L1021 197L1022 209L1025 216L1033 224L1040 228L1042 228L1046 230L1058 230L1065 227L1069 223L1073 214L1073 211L1074 210L1074 203L1075 202L1075 199L1074 198L1074 189L1073 188L1072 179L1067 170L1062 165L1043 151L1030 145L1028 145L1027 144L1013 140L1010 138L1008 138L997 132L977 118L966 113L963 113L958 111L940 111L939 112L933 113L925 117L918 122L913 127Z"/>
<path fill="#00e5a7" fill-rule="evenodd" d="M906 139L906 141L903 147L902 157L901 158L901 176L902 177L902 181L904 186L904 201L903 203L904 204L904 210L907 217L909 220L917 227L923 228L924 229L936 229L937 228L943 228L944 227L954 226L960 223L963 220L966 214L966 211L967 210L967 198L968 197L969 190L971 187L976 183L983 180L993 180L994 181L999 182L1002 184L1005 184L1009 186L1013 186L1014 187L1019 188L1026 196L1027 210L1029 215L1035 222L1043 227L1050 228L1051 229L1060 228L1065 225L1070 219L1070 217L1072 214L1072 211L1073 210L1073 205L1074 204L1074 194L1073 193L1073 186L1072 185L1071 178L1068 172L1060 164L1048 155L1036 149L1034 149L1024 145L1013 143L1012 142L1007 141L1004 139L1002 139L973 119L969 117L967 117L964 115L957 114L956 113L940 113L939 114L936 114L926 118L920 122L911 131L908 137Z"/>
<path fill="#00e7b2" fill-rule="evenodd" d="M908 137L903 149L903 153L902 154L902 162L901 163L901 173L902 174L902 178L903 179L903 183L904 184L904 189L905 190L904 205L905 206L906 213L909 218L915 224L921 227L937 227L938 226L942 226L943 225L951 224L957 221L960 217L960 215L961 214L963 196L967 186L974 179L985 173L993 173L999 176L1001 178L1009 182L1019 185L1025 189L1029 194L1029 196L1030 197L1030 207L1031 208L1031 211L1034 217L1042 224L1050 227L1057 227L1064 224L1070 216L1070 214L1072 210L1072 206L1073 205L1073 189L1072 188L1072 183L1071 182L1070 177L1068 173L1063 167L1048 156L1040 152L1038 152L1035 150L1032 150L1028 148L1018 147L1017 146L1012 146L1011 145L1007 145L1006 144L1001 143L994 139L976 124L965 118L963 118L959 116L956 116L955 115L939 115L938 116L932 117L922 122L918 126L917 126Z"/>
<path fill="#00e8bd" fill-rule="evenodd" d="M905 145L905 147L903 151L903 156L902 157L902 176L903 177L904 185L905 186L905 206L906 207L906 210L908 215L910 218L917 224L919 224L923 226L933 226L934 225L938 225L939 224L952 220L956 215L956 207L957 206L957 203L963 187L967 181L972 176L980 170L988 166L993 166L994 167L996 167L1006 176L1012 180L1026 187L1031 192L1033 196L1033 207L1036 215L1046 224L1048 224L1049 225L1059 225L1063 223L1069 215L1069 213L1071 209L1071 206L1072 205L1072 186L1071 185L1071 181L1068 174L1060 165L1050 158L1042 154L1040 154L1033 151L1021 150L1020 149L1002 149L1001 148L999 148L995 146L975 127L963 120L961 120L957 118L954 118L953 117L938 117L937 118L931 119L920 125L911 134Z"/>
<path fill="#00eac8" fill-rule="evenodd" d="M1005 156L1003 158L1003 164L1006 170L1014 178L1028 186L1034 192L1035 194L1035 200L1036 201L1036 208L1039 215L1045 221L1052 224L1057 224L1063 221L1069 212L1070 206L1071 205L1071 200L1072 199L1071 183L1070 182L1069 177L1066 172L1058 164L1052 160L1039 154L1031 153L1030 152L1017 152L1016 153L1012 153ZM956 120L953 120L952 119L937 119L936 120L930 121L922 125L912 134L905 146L904 153L903 154L903 161L902 162L902 172L903 173L903 178L904 179L905 188L906 189L906 207L910 216L918 223L924 224L925 225L930 225L931 224L938 223L946 219L950 215L952 203L956 197L965 179L989 156L989 150L986 144L980 136L970 127Z"/>
<path fill="#00ebd3" fill-rule="evenodd" d="M1014 157L1010 162L1010 168L1012 172L1018 178L1031 186L1036 191L1037 196L1038 197L1038 207L1041 214L1047 220L1052 222L1058 222L1062 220L1068 211L1068 209L1070 205L1070 201L1071 200L1071 186L1070 185L1070 182L1069 181L1068 176L1064 170L1054 162L1042 156L1034 155L1033 154L1024 154L1023 155L1019 155ZM958 123L952 122L951 121L935 121L934 122L929 123L920 128L910 138L905 148L905 150L904 151L904 156L903 157L903 175L904 176L904 180L905 181L905 185L906 186L906 203L907 204L907 208L912 217L921 223L933 223L938 221L944 216L946 212L946 207L948 202L955 193L964 176L977 162L981 155L981 146L976 137L967 128Z"/>
<path fill="#00eddf" fill-rule="evenodd" d="M1018 159L1016 161L1014 166L1015 170L1017 174L1020 177L1037 189L1039 193L1040 206L1043 213L1051 220L1058 220L1060 219L1065 214L1068 208L1069 202L1070 201L1070 193L1071 192L1070 191L1070 184L1069 183L1069 180L1065 172L1059 166L1053 162L1041 157L1038 157L1037 156L1026 156ZM951 123L939 122L938 123L930 124L922 128L911 138L905 150L904 160L903 161L903 172L904 173L904 178L905 179L906 188L907 189L907 204L911 214L916 219L922 222L931 222L936 220L940 217L943 211L943 206L945 201L952 193L956 187L960 178L964 172L972 163L976 155L976 145L972 137L965 130L959 126Z"/>
<path fill="#00efea" fill-rule="evenodd" d="M1021 161L1018 166L1018 170L1020 174L1023 177L1036 186L1040 191L1040 193L1041 194L1041 201L1042 202L1042 206L1044 211L1052 218L1058 218L1060 217L1064 213L1067 207L1067 205L1069 201L1069 197L1070 196L1070 186L1069 185L1068 179L1065 173L1057 165L1045 159L1042 159L1041 158L1028 158ZM950 125L947 125L946 124L937 124L936 125L932 125L924 128L918 132L912 138L908 144L905 152L905 155L904 156L904 175L905 176L905 180L906 181L906 185L907 186L907 198L908 199L908 205L912 214L918 219L923 221L929 221L930 220L932 220L936 218L939 215L941 210L942 202L944 198L953 188L957 179L969 162L972 155L972 145L968 137L961 130Z"/>
<path fill="#00ebf0" fill-rule="evenodd" d="M1026 161L1022 165L1022 167L1021 168L1023 174L1041 190L1042 197L1043 198L1043 203L1046 210L1051 215L1053 216L1058 216L1061 214L1064 210L1069 198L1069 184L1065 174L1060 168L1048 161L1042 160L1041 159L1032 159L1031 160ZM950 127L947 127L946 126L934 126L923 130L913 138L906 150L905 159L904 160L904 172L905 173L905 178L906 179L907 188L908 189L908 202L909 203L909 206L912 212L917 217L924 220L931 219L936 216L938 213L940 203L943 196L952 186L957 175L966 162L969 154L969 146L966 139L958 131Z"/>
<path fill="#00e2f2" fill-rule="evenodd" d="M1028 163L1025 166L1025 172L1026 174L1041 188L1043 192L1044 200L1047 208L1052 213L1054 213L1055 214L1059 213L1065 206L1068 198L1068 195L1069 194L1068 182L1065 175L1058 167L1049 162L1037 160L1036 161L1032 161ZM946 128L932 128L931 129L928 129L920 133L911 142L906 152L906 155L905 156L905 175L906 176L906 180L907 181L907 185L908 186L909 203L910 204L911 209L913 212L917 216L921 218L930 218L936 213L938 209L939 202L942 194L950 186L958 170L963 163L963 161L966 155L966 147L962 138L958 134L952 130L950 130Z"/>
<path fill="#00d9f3" fill-rule="evenodd" d="M1032 163L1028 167L1028 169L1027 170L1029 175L1043 189L1044 194L1045 195L1045 198L1046 199L1047 204L1049 207L1054 211L1059 210L1064 205L1068 195L1068 184L1065 176L1057 167L1052 164L1050 164L1046 162L1035 162L1034 163ZM946 130L943 130L942 129L934 129L933 130L930 130L922 133L911 143L908 148L908 150L906 154L906 158L905 159L905 172L906 173L906 177L907 178L907 182L908 183L908 188L909 189L909 199L910 200L910 204L914 212L921 217L929 217L935 212L937 208L938 201L941 193L950 183L963 157L963 146L960 140L953 133Z"/>
<path fill="#00d0f5" fill-rule="evenodd" d="M1034 164L1030 169L1030 172L1032 176L1044 189L1048 202L1050 205L1054 208L1058 208L1060 207L1065 201L1065 199L1067 196L1067 192L1068 191L1067 183L1063 174L1059 169L1050 164L1048 164L1047 163L1037 163L1036 164ZM943 131L931 131L930 132L927 132L918 137L910 146L906 156L906 175L907 176L907 180L908 181L908 185L909 186L909 193L910 194L910 201L911 202L911 205L913 209L919 215L921 215L922 216L928 216L932 214L935 210L935 208L937 204L937 201L939 197L939 194L942 189L949 182L959 162L960 156L961 155L961 149L958 141L952 135Z"/>
<path fill="#00c7f6" fill-rule="evenodd" d="M1036 165L1033 168L1032 172L1036 179L1044 187L1050 202L1055 206L1057 206L1061 204L1064 200L1067 193L1067 185L1062 173L1057 168L1048 164L1039 164L1038 165ZM943 133L933 132L932 133L928 133L925 135L921 136L912 144L907 154L907 157L906 158L906 172L907 173L907 177L908 178L908 182L909 183L911 202L914 209L918 213L922 215L927 215L928 214L930 214L933 211L937 201L939 191L948 181L956 165L956 163L958 159L959 151L958 150L957 144L950 136Z"/>
<path fill="#00bef8" fill-rule="evenodd" d="M1036 167L1034 171L1035 175L1045 187L1050 199L1054 203L1059 203L1064 198L1066 193L1066 184L1062 174L1056 168L1049 165L1040 165ZM944 135L941 135L940 134L930 134L929 135L926 135L917 140L912 145L908 152L906 166L907 167L907 175L908 176L908 180L909 181L909 185L910 186L911 199L912 200L913 206L918 212L922 214L927 214L933 209L936 201L938 191L947 180L954 166L954 164L956 160L956 156L957 155L956 147L954 143L949 138Z"/>
<path fill="#00b5f9" fill-rule="evenodd" d="M1039 167L1036 171L1037 176L1046 187L1052 199L1055 201L1059 201L1064 196L1065 191L1066 190L1065 183L1062 175L1058 170L1053 167L1051 167L1050 166L1041 166ZM937 135L927 136L917 141L913 145L909 151L908 157L907 158L907 171L908 172L908 177L909 178L909 182L910 183L912 201L916 209L918 211L923 213L929 212L932 209L935 202L937 191L947 178L948 174L952 167L952 165L954 161L954 158L955 157L955 152L952 144L944 137L938 136Z"/>
<path fill="#00acfb" fill-rule="evenodd" d="M1040 168L1038 171L1038 175L1047 187L1051 195L1055 199L1059 199L1062 197L1065 191L1065 185L1060 173L1057 170L1051 167L1042 167ZM939 137L928 137L920 140L913 146L908 156L907 167L908 168L908 174L909 175L909 179L910 180L910 184L911 185L911 191L912 192L913 202L915 206L920 211L922 211L923 212L928 211L932 207L935 199L936 191L939 186L944 181L949 171L949 169L951 166L952 160L953 159L953 151L951 146L947 141Z"/>
<path fill="#00a3fc" fill-rule="evenodd" d="M1043 168L1040 171L1040 176L1046 184L1051 193L1055 197L1059 197L1061 196L1064 191L1064 184L1060 174L1056 170L1052 168ZM936 138L929 138L928 139L925 139L916 144L911 150L908 157L908 171L909 172L909 177L910 178L910 182L911 183L911 187L912 188L913 199L916 206L920 210L922 210L923 211L928 210L931 207L934 200L934 196L935 195L936 189L944 179L951 162L951 151L950 150L950 148L944 141Z"/>
<path fill="#009afe" fill-rule="evenodd" d="M1044 169L1041 172L1041 175L1045 182L1050 188L1051 191L1055 195L1059 195L1061 194L1063 191L1063 183L1062 182L1061 177L1059 174L1055 170L1053 170L1052 169ZM933 139L925 140L916 145L911 151L909 156L909 159L908 160L908 167L909 168L909 174L910 175L910 179L911 180L911 184L912 185L913 197L916 205L920 209L922 209L923 210L925 210L930 207L933 201L935 190L937 186L943 179L948 168L948 165L950 160L949 150L945 144L938 140L934 140Z"/>
<path fill="#0090ff" fill-rule="evenodd" d="M1045 170L1043 172L1043 176L1045 180L1055 193L1060 193L1062 190L1062 183L1059 175L1053 170ZM936 141L926 141L919 144L913 149L909 157L909 171L910 172L910 176L911 177L911 181L912 182L912 187L913 188L914 198L917 205L923 209L927 208L931 204L935 188L942 179L948 164L948 153L946 148L941 143Z"/>
<path fill="#0083ff" fill-rule="evenodd" d="M1046 171L1044 173L1044 176L1046 180L1051 187L1056 192L1059 192L1061 190L1061 182L1060 181L1059 176L1054 171L1051 171L1050 170ZM935 142L925 142L922 144L920 144L913 150L911 153L911 155L909 159L909 168L910 169L910 174L911 175L911 179L912 180L912 185L913 186L913 191L914 192L915 200L917 204L922 208L925 208L930 204L932 200L934 189L942 178L946 168L946 165L947 164L947 154L945 149L940 144Z"/>
<path fill="#0078ff" fill-rule="evenodd" d="M1047 172L1045 174L1047 180L1054 189L1059 190L1060 189L1060 181L1057 174L1052 171ZM935 143L925 143L918 146L913 151L910 157L910 172L911 173L911 177L912 178L912 182L913 183L914 194L915 195L916 201L918 204L922 207L926 207L930 203L932 198L934 188L940 180L944 172L945 166L946 165L946 154L944 150L939 145Z"/>
<path fill="#006bff" fill-rule="evenodd" d="M1049 172L1047 174L1047 178L1051 184L1055 188L1058 188L1059 187L1059 181L1056 174L1052 172ZM934 144L925 144L918 147L912 153L910 158L910 169L911 170L911 175L912 176L912 180L913 181L913 185L914 186L915 196L918 203L922 206L926 206L929 203L932 196L933 189L935 185L940 179L945 166L945 155L942 149L937 145L935 145Z"/>
<path fill="#0060ff" fill-rule="evenodd" d="M1050 173L1048 175L1048 177L1051 182L1056 186L1058 184L1057 177L1053 173ZM934 145L924 145L923 146L921 146L915 150L911 156L910 165L911 166L911 172L912 173L912 178L913 179L913 183L914 184L915 194L918 202L922 205L926 205L929 202L932 194L933 188L935 184L940 178L944 167L944 156L943 155L943 153L938 147Z"/>
<path fill="#0053ff" fill-rule="evenodd" d="M1050 175L1050 178L1052 181L1056 182L1056 178L1054 175ZM933 146L923 146L919 148L914 152L911 158L911 170L912 171L912 175L913 176L913 181L914 182L914 186L915 187L915 192L916 193L917 199L921 204L926 204L929 201L929 199L931 196L932 189L940 177L940 175L942 172L942 169L943 168L943 156L941 152L937 148Z"/>
<path fill="#0048ff" fill-rule="evenodd" d="M933 147L923 147L922 148L920 148L914 153L912 156L912 159L911 160L911 167L912 168L912 173L913 174L913 178L914 179L915 190L916 191L917 197L921 203L926 203L928 201L931 194L932 188L938 179L942 169L942 157L941 156L941 154L938 150Z"/>
<path fill="#003bff" fill-rule="evenodd" d="M932 148L922 148L918 150L914 154L912 158L912 170L913 171L913 176L914 177L914 181L915 182L916 192L917 193L918 198L920 201L922 202L926 202L928 200L932 187L938 178L941 171L941 166L942 165L941 157L939 153L936 150Z"/>
<path fill="#0030ff" fill-rule="evenodd" d="M932 149L922 149L918 151L914 155L912 159L912 167L913 168L914 179L915 180L915 184L916 185L916 190L917 191L918 197L920 200L922 201L926 201L930 194L931 188L939 175L940 168L941 167L940 157L939 155Z"/>
<path fill="#0023ff" fill-rule="evenodd" d="M927 149L919 151L913 158L913 170L914 171L916 188L917 189L918 195L922 200L925 200L928 197L930 193L931 187L936 178L938 176L939 170L940 169L940 160L939 159L939 157L935 152Z"/>
<path fill="#0018ff" fill-rule="evenodd" d="M928 150L921 151L917 153L913 159L913 167L914 168L914 173L915 174L917 191L919 196L922 199L925 199L928 196L931 186L935 180L939 171L939 160L937 156L933 152Z"/>
<path fill="#000bff" fill-rule="evenodd" d="M928 151L921 152L917 154L914 158L914 170L915 171L917 188L918 189L919 195L922 198L925 198L928 195L930 190L930 187L938 173L938 168L939 167L938 165L938 160L936 156L933 153Z"/>
<path fill="#0002ff" fill-rule="evenodd" d="M927 152L923 152L918 154L914 160L914 167L915 168L915 172L916 173L916 179L917 180L918 191L922 197L925 197L927 195L929 191L930 186L933 180L935 178L938 170L938 164L937 163L936 158L932 154Z"/>
<path fill="#0000f7" fill-rule="evenodd" d="M929 153L921 153L919 154L915 158L915 160L914 161L915 171L916 172L916 177L917 178L917 184L918 185L918 190L921 196L923 197L927 195L929 191L930 185L937 173L937 162L936 161L936 159L934 156Z"/>
<path fill="#0000e9" fill-rule="evenodd" d="M929 155L920 155L916 159L916 170L917 171L917 176L918 177L918 185L919 186L919 190L921 194L923 195L926 194L928 191L930 183L934 177L936 172L936 164L935 163L935 161L933 158Z"/>
<path fill="#0000db" fill-rule="evenodd" d="M920 157L917 161L917 169L918 170L918 175L919 176L919 185L920 186L920 190L922 193L925 193L928 188L928 185L934 174L935 167L932 160L928 157Z"/>
<path fill="#0000cd" fill-rule="evenodd" d="M921 159L919 161L920 181L921 182L921 189L923 191L925 191L926 190L928 182L933 173L933 166L930 161L927 159Z"/>
<path fill="#0000be" fill-rule="evenodd" d="M926 162L923 162L921 164L922 186L924 189L926 185L926 182L931 173L931 167L930 165Z"/>
<path fill="#0000b0" fill-rule="evenodd" d="M925 167L924 168L924 174L926 176L928 173L928 169Z"/>
</g></g>
<path d="M97 92.8L285.8 85.2L382 100.2L482 90.2L654.5 132.8L778 135L824.5 150L832 145.8L783 131.5L659.5 128.5L488.2 86L387 95.2L289.5 80.2L103.2 87.8Z" fill="#a52c2c"/>
<linearGradient id="tl" gradientUnits="userSpaceOnUse" x1="824" y1="0" x2="921" y2="0"><stop offset="0" stop-color="#b04020"/><stop offset=".12" stop-color="#bc5a10"/><stop offset=".62" stop-color="#c06408"/><stop offset=".74" stop-color="#c8a818"/><stop offset=".82" stop-color="#6cae30"/><stop offset=".9" stop-color="#38a8a0"/><stop offset="1" stop-color="#3050a8"/></linearGradient>
<path d="M824.5 150L832 145.8L919 146.6L919 151.5Z" fill="url(#tl)"/>
<linearGradient id="tr" gradientUnits="userSpaceOnUse" x1="1059" y1="0" x2="1339" y2="0"><stop offset="0" stop-color="#58b048"/><stop offset=".045" stop-color="#c8c020"/><stop offset=".1" stop-color="#d08010"/><stop offset=".16" stop-color="#c05808"/><stop offset="1" stop-color="#be5606"/></linearGradient>
<path d="M1059 138.5L1072 136L1088 132.5L1330.3 140.7L1338.7 134.3L1097.7 127.3L1068 133.3Z" fill="url(#tr)"/>
<linearGradient id="rs" gradientUnits="userSpaceOnUse" x1="0" y1="134" x2="0" y2="704"><stop offset="0" stop-color="#cc0000"/><stop offset=".45" stop-color="#d80000"/><stop offset=".62" stop-color="#ff1000"/><stop offset=".8" stop-color="#ff4800"/><stop offset="1" stop-color="#ff6a00"/></linearGradient>
<path d="M1330.3 140.7L1338.7 134.3L1338.9 696.6L1330.3 703.5Z" fill="url(#rs)"/>
<path d="M109.5 289.6L109.5 104L278.2 97.2L381.3 112.2L480.7 103.2L653.2 144.5L717 145.2L769.5 146L788 152.7L765.7 164L717 165.5L627 169.6L537 180.9L477 203.4L400 214.6L362.6 250.2L267 247.2L169.5 282.8L109.5 289.6M111.4 353.4L111.4 318.5L173.2 310.2L272.6 275.7L373.9 278.4L413.2 240.9L480.7 231.5L542.6 207.9L634.5 197.7L717 192.1L751.9 189.5L754.5 272.4L745.4 275.5L728 289.7L718 310L717 330.5L722 355L732.2 379.4L746.5 401.8L762.8 412L764 410L765.7 459L717 457.9L709.5 457.9L683 431.6L627 430L589.5 415.9L492 401.6L443 400L308.2 371.4L267 370.2L195.7 355.2L111.4 353.4M120.7 645.4L120.7 393.4L193.9 394.5L265 409L304.5 410.2L439.5 439L488 440.2L585.7 456L619.5 469.5L666.4 470.2L690.7 496.5L717 497.2L870.7 501L960.7 516L1054.5 506L1114.5 469.5L1172.6 444L1257 424.5L1307 425L1305.7 678.4L120.7 645.4M826 154.5L773.2 182.7L777 267L778 268.4L789.2 272.4L807.6 287.7L818.8 308L821.8 330.5L816.7 355L807.6 379.4L793.3 399.8L777 411L777 410.2L778.9 455.2L870.7 457.9L958.9 472L1041.4 462.7L1148 404.6L1253 381L1311.4 381.5L1311.4 158.4L1086.4 152L1078.9 154.6L1078.9 190.2L914.5 184.6L914.5 155.5L893 155.5L826 154.5M1332 143.4L1332 699M833 150.3L899 151.2" fill="none" stroke="#a8a4a4" stroke-width="1" stroke-dasharray="9 4" opacity=".85"/>
<linearGradient id="tw" gradientUnits="userSpaceOnUse" x1="0" y1="289" x2="0" y2="401"><stop offset="0" stop-color="#9a5a28"/><stop offset=".55" stop-color="#8a6a2a"/><stop offset=".85" stop-color="#8a9a30"/><stop offset="1" stop-color="#a8c030"/></linearGradient>
<path d="M758 291.5C780 291.5 798 306 797.5 329C797 352 787 377 777 394C773 401.5 764 401.5 760 395C747 377 732 349 733 323C734 304 744 291.5 758 291.5Z" fill="url(#tw)"/>
<path d="M767 286.5C789 286.5 807 301 806.5 324C806 347 796 372 786 389C782 396.5 773 396.5 769 390C756 372 741 344 742 318C743 299 753 286.5 767 286.5Z" fill="#b9cc98"/>
<path d="M767.5 290.5C787.7 290.3 804.1 303.8 802.7 325.1C802.3 345.5 793.9 368.6 785.1 385.1C781.4 392.5 773 392.5 769.3 386C757.6 368.3 744.8 342.8 745.6 319.8C745.6 302 754.6 290.2 767.5 290.5Z" fill="#fff"/>
<path d="M919 121.6L1059 123L1059 170.2L919 168Z" fill="#7fa345"/>
<path d="M919 121.6L1059 123L1059 163.6L919 162.6Z" fill="#8fb14b"/>
<path d="M1059 123L1068 123.3L1068 133.2L1059 138.5Z" fill="#93b44f"/>
<path d="M919.5 146L927.3 145.6L927.3 162.7L919.5 162.7Z" fill="#3c5268"/>
<path d="M923 126.5L1055 128L1055 159M927.5 129L927.5 159.5L1053 160.5M931 132.5L931 157" fill="none" stroke="#8e9a86" stroke-width="1" stroke-dasharray="9 4" opacity=".8"/>
<circle cx="993.5" cy="144.5" r="1.8" fill="#b07a50"/>
<path d="M922.6 45.1L929.8 41.5L1064 44.3L1064 81.7L1056.8 85.3L922.6 82.1Z" fill="#d3dae5" fill-opacity=".93"/><path d="M922.6 45.1L1056.8 47.9L1056.8 85.3L922.6 82.1Z" fill="#ccd4e0" stroke="#8aa6cc" stroke-width="1"/><path d="M922.6 45.1L929.8 41.5L1064 44.3L1056.8 47.9M1064 44.3L1064 81.7L1056.8 85.3M967 46L967 83.2M967 46L974.2 42.4M1011.3 47L1011.3 84.2M1011.3 47L1018.5 43.4" fill="none" stroke="#8aa6cc" stroke-width="1"/><path d="M927.2 71.5h5.2l-2.6 5.5Z" fill="#b4c4da"/><path d="M971.6 72.6h5.2l-2.6 5.5Z" fill="#b4c4da"/><path d="M1015.9 73.6h5.2l-2.6 5.5Z" fill="#b4c4da"/><path d="M929.8 41.5L929.8 74.5M974.2 42.4L974.2 75.6M1018.5 43.4L1018.5 76.6M929.8 78.5L1064 81.7" fill="none" stroke="#b4c4da" stroke-width="1"/><path d="M919.6 75.1h6l-3 6.5Z" fill="#7f9fc6"/><path d="M964 76.2h6l-3 6.5Z" fill="#7f9fc6"/><path d="M1008.3 77.2h6l-3 6.5Z" fill="#7f9fc6"/><path d="M1053.8 78.3h6l-3 6.5Z" fill="#7f9fc6"/><path d="M1061 74.7h6l-3 6.5Z" fill="#7f9fc6"/>
<path d="M922.6 88.6L929.8 85L1064 87.8L1064 118.4L1056.8 122L922.6 118.3Z" fill="#d3dae5" fill-opacity=".93"/><path d="M922.6 88.6L1056.8 91.4L1056.8 122L922.6 118.3Z" fill="#ccd4e0" stroke="#8aa6cc" stroke-width="1"/><path d="M922.6 88.6L929.8 85L1064 87.8L1056.8 91.4M1064 87.8L1064 118.4L1056.8 122M967 89.5L967 119.5M967 89.5L974.2 85.9M1011.3 90.5L1011.3 120.7M1011.3 90.5L1018.5 86.9" fill="none" stroke="#8aa6cc" stroke-width="1"/><path d="M927.2 107.7h5.2l-2.6 5.5Z" fill="#b4c4da"/><path d="M971.6 108.9h5.2l-2.6 5.5Z" fill="#b4c4da"/><path d="M1015.9 110.1h5.2l-2.6 5.5Z" fill="#b4c4da"/><path d="M929.8 85L929.8 110.7M974.2 85.9L974.2 111.9M1018.5 86.9L1018.5 113.1M929.8 114.7L1064 118.4" fill="none" stroke="#b4c4da" stroke-width="1"/><path d="M919.6 111.3h6l-3 6.5Z" fill="#7f9fc6"/><path d="M964 112.5h6l-3 6.5Z" fill="#7f9fc6"/><path d="M1008.3 113.7h6l-3 6.5Z" fill="#7f9fc6"/><path d="M1053.8 115h6l-3 6.5Z" fill="#7f9fc6"/><path d="M1061 111.4h6l-3 6.5Z" fill="#7f9fc6"/>
<circle cx="922.6" cy="45.1" r="1.2" fill="#555"/><circle cx="922.6" cy="88.6" r="1.2" fill="#555"/>
<text x="923.3" y="38" font-size="11" font-family="Liberation Sans, sans-serif" fill="#6f8fbd" textLength="33" lengthAdjust="spacingAndGlyphs">125.00</text>
<text x="923.3" y="81" font-size="11" font-family="Liberation Sans, sans-serif" fill="#6f8fbd" textLength="33" lengthAdjust="spacingAndGlyphs">100.00</text>
</svg>
<span class="t" style="left:278.5px;top:75.5px;height:16px;line-height:16px;letter-spacing:-0.109px;word-spacing:0.109px;">CO2 - LC1 + LC2 + LC3 + LC4</span>
<span class="t" style="left:278.5px;top:92.5px;height:16px;line-height:16px;letter-spacing:0.36px;">Loads [kN/m<span style="font-size:8px;position:relative;top:-4px">2</span>]</span>
<span class="t" style="left:278.5px;top:109.5px;height:16px;line-height:16px;letter-spacing:-0.011px;word-spacing:0.011px;">Static Analysis</span>
<span class="t" style="left:278.5px;top:126.5px;height:16px;line-height:16px;letter-spacing:0.13px;">Principal Stresses σ<span style="font-size:10px;position:relative;top:2px">3</span> [kN/m<span style="font-size:10px;position:relative;top:-4px">2</span>]</span>
<span class="t" style="left:278.5px;top:782.5px;height:16px;line-height:16px;letter-spacing:0.1px;">max σ<span style="font-size:10px;position:relative;top:2px">3</span> : 1.70 | min σ<span style="font-size:10px;position:relative;top:2px">3</span> : -242.70 kN/m<span style="font-size:10px;position:relative;top:-4px">2</span></span>
<div class="r" style="left:1714px;top:71px;width:206px;height:21px;background:#dbe6f4;"></div>
<span class="t" style="left:1720px;top:73.5px;height:16px;line-height:16px;font-size:12px;font-weight:700;color:#333;letter-spacing:-0.335px;word-spacing:0.335px;">Control Panel</span>
<svg class="r" style="left:1882px;top:76px;" width="10" height="10" viewBox="0 0 10 10"><rect x="0.7" y="3" width="6" height="6" fill="none" stroke="#222" stroke-width="1.3"/><path d="M3 3V0.8H9.2V7H7" fill="none" stroke="#222" stroke-width="1.3"/></svg>
<svg class="r" style="left:1903px;top:77px;" width="9" height="9" viewBox="0 0 9 9"><path d="M0.8 0.8L8.2 8.2M8.2 0.8L0.8 8.2" stroke="#222" stroke-width="1.7"/></svg>
<div class="r" style="left:1714px;top:93px;width:205px;height:684px;background:#f5f5f5;border:1px solid #c5c7d9;box-sizing:border-box;"></div>
<div class="r" style="left:1715px;top:94px;width:203px;height:39.5px;background:#fff;"></div>
<span class="t" style="left:1725px;top:97.0px;height:16px;line-height:16px;font-size:11px;letter-spacing:-0.037px;word-spacing:0.037px;">Solids | Stresses | Principal Stresses</span>
<span class="t" style="left:1725px;top:110.5px;height:16px;line-height:16px;font-size:11px;">σ<span style="font-size:9px;position:relative;top:2px">3</span> [kN/m<span style="font-size:8px;position:relative;top:-3.5px">2</span>]</span>
<div class="r" style="left:1783px;top:153.3px;width:41px;height:23.8px;background:#c00000;"></div>
<div class="r" style="left:1783px;top:179.3px;width:41px;height:23.8px;background:#ff0000;"></div>
<div class="r" style="left:1783px;top:205.3px;width:41px;height:23.8px;background:#ffa500;"></div>
<div class="r" style="left:1783px;top:231.3px;width:41px;height:23.8px;background:#cccc00;"></div>
<div class="r" style="left:1783px;top:257.3px;width:41px;height:23.8px;background:#ffff00;"></div>
<div class="r" style="left:1783px;top:283.3px;width:41px;height:23.8px;background:#00ff00;"></div>
<div class="r" style="left:1783px;top:309.3px;width:41px;height:23.8px;background:#00e080;"></div>
<div class="r" style="left:1783px;top:335.3px;width:41px;height:23.8px;background:#00f0f0;"></div>
<div class="r" style="left:1783px;top:361.3px;width:41px;height:23.8px;background:#0096ff;"></div>
<div class="r" style="left:1783px;top:387.3px;width:41px;height:23.8px;background:#0000ff;"></div>
<div class="r" style="left:1783px;top:413.3px;width:41px;height:23.8px;background:#0000a0;"></div>
<span class="t" style="left:1749.435px;top:144.8px;height:16px;line-height:16px;font-size:11px;letter-spacing:-0.214px;">1.70</span>
<span class="t" style="left:1740.045px;top:170.8px;height:16px;line-height:16px;font-size:11px;letter-spacing:-0.208px;">-20.52</span>
<span class="t" style="left:1740.045px;top:196.8px;height:16px;line-height:16px;font-size:11px;letter-spacing:-0.208px;">-42.74</span>
<span class="t" style="left:1740.045px;top:222.8px;height:16px;line-height:16px;font-size:11px;letter-spacing:-0.208px;">-64.96</span>
<span class="t" style="left:1740.045px;top:248.8px;height:16px;line-height:16px;font-size:11px;letter-spacing:-0.208px;">-87.17</span>
<span class="t" style="left:1734.18px;top:274.8px;height:16px;line-height:16px;font-size:11px;letter-spacing:-0.213px;">-109.39</span>
<span class="t" style="left:1734.18px;top:300.8px;height:16px;line-height:16px;font-size:11px;letter-spacing:-0.213px;">-131.61</span>
<span class="t" style="left:1734.18px;top:326.8px;height:16px;line-height:16px;font-size:11px;letter-spacing:-0.213px;">-153.83</span>
<span class="t" style="left:1734.18px;top:352.8px;height:16px;line-height:16px;font-size:11px;letter-spacing:-0.213px;">-176.05</span>
<span class="t" style="left:1734.18px;top:378.8px;height:16px;line-height:16px;font-size:11px;letter-spacing:-0.213px;">-198.27</span>
<span class="t" style="left:1734.18px;top:404.8px;height:16px;line-height:16px;font-size:11px;letter-spacing:-0.213px;">-220.48</span>
<span class="t" style="left:1734.18px;top:430.8px;height:16px;line-height:16px;font-size:11px;letter-spacing:-0.213px;">-242.70</span>
<span class="t" style="left:1836.24px;top:158.1px;height:16px;line-height:16px;font-size:11px;letter-spacing:-0.269px;word-spacing:0.269px;">55.28 %</span>
<span class="t" style="left:1837.02px;top:184.1px;height:16px;line-height:16px;font-size:11px;letter-spacing:-0.264px;word-spacing:0.264px;">11.93 %</span>
<span class="t" style="left:1836.24px;top:210.1px;height:16px;line-height:16px;font-size:11px;letter-spacing:-0.269px;word-spacing:0.269px;">19.00 %</span>
<span class="t" style="left:1842.12px;top:236.1px;height:16px;line-height:16px;font-size:11px;letter-spacing:-0.274px;word-spacing:0.274px;">7.16 %</span>
<span class="t" style="left:1842.12px;top:262.1px;height:16px;line-height:16px;font-size:11px;letter-spacing:-0.274px;word-spacing:0.274px;">2.40 %</span>
<span class="t" style="left:1842.12px;top:288.1px;height:16px;line-height:16px;font-size:11px;letter-spacing:-0.274px;word-spacing:0.274px;">1.40 %</span>
<span class="t" style="left:1842.12px;top:314.1px;height:16px;line-height:16px;font-size:11px;letter-spacing:-0.274px;word-spacing:0.274px;">1.51 %</span>
<span class="t" style="left:1842.12px;top:340.1px;height:16px;line-height:16px;font-size:11px;letter-spacing:-0.274px;word-spacing:0.274px;">0.66 %</span>
<span class="t" style="left:1842.12px;top:366.1px;height:16px;line-height:16px;font-size:11px;letter-spacing:-0.274px;word-spacing:0.274px;">0.39 %</span>
<span class="t" style="left:1842.9px;top:392.1px;height:16px;line-height:16px;font-size:11px;letter-spacing:-0.268px;word-spacing:0.268px;">0.11 %</span>
<span class="t" style="left:1842.12px;top:418.1px;height:16px;line-height:16px;font-size:11px;letter-spacing:-0.274px;word-spacing:0.274px;">0.17 %</span>
<div class="r" style="left:1890.5px;top:150px;width:4px;height:290px;background:#dcdcdc;border-left:1px solid #c8c8c8;border-right:1px solid #c8c8c8;box-sizing:border-box;"></div>
<div class="r" style="left:1882px;top:146px;width:21px;height:10px;background:#0078d7;"></div>
<div class="r" style="left:1882px;top:433px;width:21px;height:10px;background:#0078d7;"></div>
<div class="r" style="left:1715px;top:743px;width:203px;height:33px;background:#fff;"></div>
<div class="r" style="left:1857px;top:749px;width:24.5px;height:21px;background:#cce4f7;"></div>
<div class="r" style="left:1888px;top:749px;width:25px;height:21px;background:#e5f1fb;border:1px solid #0078d7;box-sizing:border-box;"></div>
<svg class="r" style="left:1861px;top:751px;" width="17" height="17" viewBox="0 0 17 17"><rect x="2.5" y="5.5" width="10" height="10" fill="#f4f4f4" stroke="#555"/><path d="M5 5C7 1 11 1 13 3L11.5 7H5Z" fill="#d8a888" stroke="#86563a" stroke-width="0.6"/><path d="M11 1.5L15.5 1V6.5H12.5Z" fill="#4a78c8"/></svg>
<svg class="r" style="left:1892px;top:751px;" width="17" height="17" viewBox="0 0 17 17"><rect x="3" y="1" width="3" height="15" fill="#ddd" stroke="#999" stroke-width="0.5"/><rect x="3" y="1" width="3" height="3" fill="#1f3fb0"/><rect x="3" y="10" width="3" height="3" fill="#ffd21a"/><rect x="3" y="13" width="3" height="3" fill="#e2231a"/><rect x="10" y="1" width="3" height="15" fill="#ddd" stroke="#999" stroke-width="0.5"/><rect x="10" y="4" width="3" height="3" fill="#25c3e0"/><rect x="10" y="7" width="3" height="4" fill="#2fd06a"/><rect x="10" y="13" width="3" height="3" fill="#e2231a"/></svg>
<div class="r" style="left:1714px;top:776px;width:39px;height:24px;background:#fff;border:1px solid #c5c7d9;border-top:none;box-sizing:border-box;"></div>
<div class="r" style="left:1753px;top:777px;width:38px;height:22px;background:#efefef;border:1px solid #c9cbdb;box-sizing:border-box;"></div>
<div class="r" style="left:1791px;top:777px;width:38px;height:22px;background:#efefef;border:1px solid #c9cbdb;box-sizing:border-box;"></div>
<div class="r" style="left:1829px;top:777px;width:40px;height:22px;background:#efefef;border:1px solid #c9cbdb;box-sizing:border-box;"></div>
<svg class="r" style="left:1725px;top:780px;" width="17" height="16" viewBox="0 0 17 16"><rect x="1" y="1.0" width="2.5" height="1.5" fill="#c00000"/><rect x="5" y="1.0" width="2" height="1" fill="#555"/><rect x="1" y="3.5" width="2.5" height="1.5" fill="#ff0000"/><rect x="5" y="3.5" width="2" height="1" fill="#555"/><rect x="1" y="6.0" width="2.5" height="1.5" fill="#ffa500"/><rect x="5" y="6.0" width="2" height="1" fill="#555"/><rect x="1" y="8.5" width="2.5" height="1.5" fill="#2fd06a"/><rect x="5" y="8.5" width="2" height="1" fill="#555"/><rect x="1" y="11.0" width="2.5" height="1.5" fill="#00c0e0"/><rect x="5" y="11.0" width="2" height="1" fill="#555"/><rect x="1" y="13.5" width="2.5" height="1.5" fill="#0000ff"/><rect x="5" y="13.5" width="2" height="1" fill="#555"/><g transform="translate(7.5,3.5) scale(0.6)"><path d="M1 4.5 L4 1.5 H15 L12 4.5Z" fill="#2aa198"/><path d="M12 4.5 L15 1.5 V12.5 L12 15.5Z" fill="#1d6fb5"/><rect x="1" y="4.5" width="11" height="11" fill="#1b3fb0"/><ellipse cx="6.5" cy="10" rx="4.6" ry="4.6" fill="#2fd06a"/><ellipse cx="6.5" cy="10" rx="3.4" ry="3.4" fill="#ffe21a"/><ellipse cx="6.5" cy="10" rx="1.8" ry="1.8" fill="#e2231a"/><ellipse cx="13.5" cy="8.5" rx="1.2" ry="3" fill="#ffe21a"/><ellipse cx="13.5" cy="8.5" rx="0.6" ry="1.6" fill="#e2231a"/></g></svg>
<svg class="r" style="left:1764px;top:781px;" width="16" height="14" viewBox="0 0 16 14"><path d="M8 1V12M2 3.5H14M5 13H11" stroke="#555" stroke-width="1.2" fill="none"/><path d="M2 3.5L0 10H4.5ZM14 3.5L11.5 10H16Z" fill="#f5f5f5" stroke="#555" stroke-width="1"/></svg>
<svg class="r" style="left:1802px;top:781px;" width="16" height="14" viewBox="0 0 16 14"><rect x="0" y="0.5" width="4" height="3.5" fill="#4a7ae0"/><rect x="0" y="5.3" width="4" height="3.5" fill="#ffc21a"/><rect x="0" y="10" width="4" height="3.5" fill="#b8606a"/><path d="M6.5 2.2H15M6.5 7H15M6.5 11.8H15" stroke="#444" stroke-width="1.2"/></svg>
<svg class="r" style="left:1839px;top:779px;" width="18" height="17" viewBox="0 0 18 17"><rect x="1.5" y="8.5" width="5" height="7" fill="#f5f5f5" stroke="#666" stroke-width="0.8"/><path d="M3 11H5M3 13H5" stroke="#666" stroke-width="0.7"/><path d="M6 1L13 14" stroke="#888" stroke-width="1.4"/><circle cx="6" cy="1.5" r="1.4" fill="#d22"/><circle cx="13" cy="14.5" r="1.4" fill="#d22"/><path d="M9 2V10L11 8.3L12.5 11.5L13.7 11L12.2 7.8H14.8Z" fill="#fff" stroke="#222" stroke-width="0.6"/></svg>
<div class="r" style="left:1918px;top:607px;width:2px;height:21px;background:#111;"></div>
<div class="r" style="left:273px;top:806px;width:1647px;height:21px;background:#dbe6f4;"></div>
<span class="t" style="left:279px;top:808.5px;height:16px;line-height:16px;font-size:12px;font-weight:700;color:#333;letter-spacing:-0.315px;">Summary</span>
<svg class="r" style="left:1882px;top:812px;" width="10" height="10" viewBox="0 0 10 10"><rect x="0.7" y="3" width="6" height="6" fill="none" stroke="#222" stroke-width="1.3"/><path d="M3 3V0.8H9.2V7H7" fill="none" stroke="#222" stroke-width="1.3"/></svg>
<svg class="r" style="left:1903px;top:813px;" width="9" height="9" viewBox="0 0 9 9"><path d="M0.8 0.8L8.2 8.2M8.2 0.8L0.8 8.2" stroke="#222" stroke-width="1.7"/></svg>
<span class="t" style="left:281.5px;top:830.5px;height:16px;line-height:16px;letter-spacing:-0.371px;word-spacing:0.371px;">Go To</span>
<span class="t" style="left:327.5px;top:830.5px;height:16px;line-height:16px;letter-spacing:-0.082px;">Edit</span>
<span class="t" style="left:363.5px;top:830.5px;height:16px;line-height:16px;letter-spacing:-0.146px;">Selection</span>
<span class="t" style="left:426.5px;top:830.5px;height:16px;line-height:16px;letter-spacing:-0.055px;">View</span>
<span class="t" style="left:467.5px;top:830.5px;height:16px;line-height:16px;letter-spacing:-0.070px;">Settings</span>
<div class="r" style="left:275px;top:850px;width:199px;height:21px;background:#e7e9f4;"></div>
<svg class="r" style="left:279px;top:853px;" width="14" height="14" viewBox="0 0 14 14"><rect x="0.5" y="0.5" width="13" height="13" fill="#e8e8e8" stroke="#555"/><rect x="0.5" y="0.5" width="13" height="3" fill="#2b3f9e"/><path d="M1 6.5H13M5 3.5V9" stroke="#888" stroke-width="0.8"/><path d="M1 12.5L13 9V13H1Z" fill="#d8322a"/><path d="M1 12.5L7 10.7V13H1Z" fill="#2a55b8"/></svg>
<span class="t" style="left:299px;top:853.0px;height:16px;line-height:16px;letter-spacing:-0.190px;word-spacing:0.190px;">Static Analysis</span>
<svg class="r" style="left:460px;top:857.5px;" width="10" height="7" viewBox="0 0 10 7"><path d="M0.8 1L5 5.2L9.2 1" fill="none" stroke="#444" stroke-width="1"/></svg>
<div class="r" style="left:476px;top:850px;width:15px;height:21px;background:#e7e9f4;"></div>
<div class="r" style="left:492.5px;top:850px;width:14.5px;height:21px;background:#cdcdcd;"></div>
<svg class="r" style="left:481px;top:856.5px;" width="6" height="8" viewBox="0 0 6 8"><path d="M5.5 0.5V7.5L0.5 4Z" fill="#111"/></svg>
<svg class="r" style="left:497px;top:856.5px;" width="6" height="8" viewBox="0 0 6 8"><path d="M0.5 0.5V7.5L5.5 4Z" fill="#111"/></svg>
<div class="r" style="left:510.5px;top:852px;width:1px;height:18px;background:#8a8a8a;"></div>
<div class="r" style="left:513px;top:848px;width:1px;height:26px;background:#e2e2e2;"></div>
<div class="r" style="left:518.5px;top:850px;width:269px;height:21px;background:#e7e9f4;"></div>
<svg class="r" style="left:523px;top:853px;" width="14" height="14" viewBox="0 0 14 14"><rect x="0.5" y="0.5" width="13" height="13" fill="#e8e8e8" stroke="#555"/><rect x="0.5" y="0.5" width="13" height="3" fill="#2b3f9e"/><path d="M1 6.5H13M5 3.5V9" stroke="#888" stroke-width="0.8"/><path d="M1 12.5L13 9V13H1Z" fill="#d8322a"/><path d="M1 12.5L7 10.7V13H1Z" fill="#2a55b8"/></svg>
<span class="t" style="left:542px;top:853.0px;height:16px;line-height:16px;letter-spacing:-0.117px;">Overview</span>
<svg class="r" style="left:773.5px;top:857.5px;" width="10" height="7" viewBox="0 0 10 7"><path d="M0.8 1L5 5.2L9.2 1" fill="none" stroke="#444" stroke-width="1"/></svg>
<div class="r" style="left:789px;top:850px;width:15px;height:21px;background:#cdcdcd;"></div>
<div class="r" style="left:805.5px;top:850px;width:14.5px;height:21px;background:#e7e9f4;"></div>
<svg class="r" style="left:793.5px;top:856.5px;" width="6" height="8" viewBox="0 0 6 8"><path d="M5.5 0.5V7.5L0.5 4Z" fill="#555"/></svg>
<svg class="r" style="left:810px;top:856.5px;" width="6" height="8" viewBox="0 0 6 8"><path d="M0.5 0.5V7.5L5.5 4Z" fill="#111"/></svg>
<div class="r" style="left:823.5px;top:852px;width:1px;height:18px;background:#8a8a8a;"></div>
<div class="r" style="left:828.5px;top:850px;width:269px;height:21px;background:#e7e9f4;"></div>
<div class="r" style="left:833px;top:853.5px;width:11.5px;height:14px;background:#c5fbfb;"></div>
<div class="r" style="left:847px;top:853.5px;width:11.5px;height:14px;background:#c5fbfb;"></div>
<div class="r" style="left:860.5px;top:853.5px;width:30.5px;height:14px;background:#a9ca7a;"></div>
<span class="t" style="left:865px;top:853.0px;height:16px;line-height:16px;letter-spacing:-1.026px;word-spacing:1.026px;">S Ch</span>
<span class="t" style="left:896px;top:853.0px;height:16px;line-height:16px;letter-spacing:-0.552px;">CO2</span>
<div class="r" style="left:925px;top:853px;width:1px;height:16px;background:#f8f8fc;"></div>
<span class="t" style="left:932.5px;top:853.0px;height:16px;line-height:16px;letter-spacing:-0.681px;word-spacing:0.681px;">LC1 + LC2 + LC3 + LC4</span>
<svg class="r" style="left:1084px;top:857.5px;" width="10" height="7" viewBox="0 0 10 7"><path d="M0.8 1L5 5.2L9.2 1" fill="none" stroke="#444" stroke-width="1"/></svg>
<div class="r" style="left:1099px;top:850px;width:15px;height:21px;background:#cdcdcd;"></div>
<div class="r" style="left:1115.5px;top:850px;width:14.5px;height:21px;background:#e7e9f4;"></div>
<svg class="r" style="left:1103.5px;top:856.5px;" width="6" height="8" viewBox="0 0 6 8"><path d="M5.5 0.5V7.5L0.5 4Z" fill="#555"/></svg>
<svg class="r" style="left:1120px;top:856.5px;" width="6" height="8" viewBox="0 0 6 8"><path d="M0.5 0.5V7.5L5.5 4Z" fill="#111"/></svg>
<div class="r" style="left:1133.5px;top:852px;width:1px;height:18px;background:#8a8a8a;"></div>
<div class="r" style="left:1138.5px;top:849px;width:24.5px;height:23px;background:#cce4f7;border:1px solid #90c8f6;box-sizing:border-box;"></div>
<div class="r" style="left:1164px;top:849px;width:24.5px;height:23px;background:#cce4f7;border:1px solid #90c8f6;box-sizing:border-box;"></div>
<svg class="r" style="left:1141.5px;top:851.5px;" width="18" height="18" viewBox="0 0 16 16"><rect x="5.5" y="1.5" width="5" height="4" fill="#e8eef8" stroke="#3a68b8" stroke-width="0.9"/><path d="M8 6C12 7 12 12 8 15" fill="none" stroke="#3a68b8" stroke-width="1.3"/><path d="M11 5L8 6.5L10.5 9" fill="none" stroke="#3a68b8" stroke-width="1.2"/></svg>
<svg class="r" style="left:1167.0px;top:851.5px;" width="18" height="18" viewBox="0 0 16 16"><rect x="7.5" y="1.5" width="5" height="4" fill="#e8eef8" stroke="#3a68b8" stroke-width="0.9"/><path d="M8 4C3 5 3 11 7 14" fill="none" stroke="#3a68b8" stroke-width="1.3"/><path d="M4 13L7.5 14.5L7 11" fill="none" stroke="#3a68b8" stroke-width="1.2"/></svg>
<div class="r" style="left:1192.5px;top:852px;width:1px;height:18px;background:#8a8a8a;"></div>
<div class="r" style="left:1196.5px;top:849px;width:25px;height:23px;background:#cce4f7;border:1px solid #90c8f6;box-sizing:border-box;"></div>
<div class="r" style="left:1223px;top:849px;width:24.5px;height:23px;background:#cce4f7;border:1px solid #90c8f6;box-sizing:border-box;"></div>
<svg class="r" style="left:1200.0px;top:851.5px;" width="18" height="18" viewBox="0 0 16 16"><path d="M0 13.5 L8 11.5 L8 14 L0 15.5Z" fill="#2a55b8"/><path d="M8 11.5 L16 9 L16 12.5 L8 14Z" fill="#d8322a"/><path d="M0 13.6L16 9.4" stroke="#222" stroke-width="1"/><ellipse cx="10.5" cy="4.5" rx="4.2" ry="2.8" fill="#fff" stroke="#33408f" stroke-width="1.1"/><circle cx="10.5" cy="4.5" r="1.7" fill="#33408f"/></svg>
<svg class="r" style="left:1226.0px;top:851.5px;" width="18" height="18" viewBox="0 0 16 16"><path d="M0 13.5 L8 11.5 L8 14 L0 15.5Z" fill="#2a55b8"/><path d="M8 11.5 L16 9 L16 12.5 L8 14Z" fill="#d8322a"/><path d="M0 13.6L16 9.4" stroke="#222" stroke-width="1"/><text x="0.5" y="6" font-size="7.5" font-weight="700" font-family="Liberation Sans, sans-serif" fill="#222" letter-spacing="-0.3">x.xx</text></svg>
<div class="r" style="left:1251.5px;top:852px;width:1px;height:18px;background:#8a8a8a;"></div>
<svg class="r" style="left:1258.5px;top:851.5px;" width="18" height="18" viewBox="0 0 16 16"><rect x="0.5" y="2.5" width="15" height="12" fill="#e4e4e4" stroke="#b0b0b0"/><rect x="0.5" y="2.5" width="15" height="3" fill="#c4c4c4"/><path d="M0.5 8.5H15.5M0.5 11.5H15.5M8 5.5V14.5" stroke="#b0b0b0"/></svg>
<svg class="r" style="left:1285.0px;top:851.5px;" width="18" height="18" viewBox="0 0 16 16"><rect x="0.5" y="6.5" width="15" height="8" fill="#ececec" stroke="#b0b0b0"/><path d="M0.5 10.5H15.5M5.5 6.5V14.5M10.5 6.5V14.5" stroke="#b0b0b0"/><path d="M3 3L12 5" stroke="#b0b0b0"/><circle cx="3" cy="3" r="1.2" fill="#b0b0b0"/></svg>
<svg class="r" style="left:1311.0px;top:851.5px;" width="18" height="18" viewBox="0 0 16 16"><rect x="0.5" y="6.5" width="15" height="8" fill="#ececec" stroke="#b0b0b0"/><path d="M0.5 10.5H15.5M5.5 6.5V14.5M10.5 6.5V14.5" stroke="#b0b0b0"/><path d="M3 3L12 5" stroke="#b0b0b0"/><circle cx="3" cy="3" r="1.2" fill="#b0b0b0"/></svg>
<div class="r" style="left:1336.5px;top:852px;width:1px;height:18px;background:#8a8a8a;"></div>
<svg class="r" style="left:1343.5px;top:851.5px;" width="18" height="18" viewBox="0 0 16 16"><path d="M2 2V14M2 2H9V5H2M2 6H13V9H2M2 10H15V13H2" fill="#d4d4d4" stroke="#b0b0b0" stroke-width="0.8"/></svg>
<div class="r" style="left:1369.5px;top:852px;width:1px;height:18px;background:#8a8a8a;"></div>
<svg class="r" style="left:1376.5px;top:851.5px;" width="18" height="18" viewBox="0 0 16 16"><rect x="0.5" y="1.5" width="15" height="13" fill="#f0f0f0" stroke="#b0b0b0"/><path d="M0.5 6H15.5M0.5 10H15.5M5.5 1.5V14.5M10.5 1.5V14.5" stroke="#b0b0b0"/></svg>
<div class="r" style="left:1402.5px;top:852px;width:1px;height:18px;background:#8a8a8a;"></div>
<svg class="r" style="left:1410.0px;top:851.5px;" width="18" height="18" viewBox="0 0 16 16"><path d="M3.5 0.5H10.5L13.5 3.5V15.5H3.5Z" fill="#fff" stroke="#666"/><rect x="0.5" y="3.5" width="11" height="8" fill="#2e8c46"/><path d="M1.5 5L4.5 10M4.5 5L1.5 10" stroke="#fff" stroke-width="1.2"/><path d="M6 5.5H10.5M6 7.5H10.5M6 9.5H10.5M8.2 4.5V10.5" stroke="#fff" stroke-width="0.8"/><path d="M6 12.5H11L8.5 15Z" fill="#2e8c46"/></svg>
<div class="r" style="left:1433px;top:848px;width:1px;height:26px;background:#e2e2e2;"></div>
<svg class="r" style="left:1439.5px;top:851.5px;" width="18" height="18" viewBox="0 0 16 16"><path d="M0 4H12L8 9V15.5L5 13.5V9Z" fill="#3a78c8"/><rect x="8.5" y="0.5" width="7" height="5" fill="#fff" stroke="#2b3f9e" stroke-width="0.8"/><rect x="8.5" y="0.5" width="7" height="1.8" fill="#2b3f9e"/></svg>
<div class="r" style="left:1464.5px;top:852px;width:1px;height:18px;background:#8a8a8a;"></div>
<svg class="r" style="left:1471.5px;top:851.5px;" width="18" height="18" viewBox="0 0 16 16"><rect x="1" y="0.5" width="14" height="4" fill="#6ab04a"/><text x="0" y="14" font-size="8.5" font-weight="700" font-family="Liberation Sans, sans-serif" fill="#111" letter-spacing="-0.4">0.<tspan fill="#3a58d8">00</tspan></text><path d="M7 15.3H16" stroke="#3a58d8" stroke-width="0.8"/></svg>
<div class="r" style="left:1497.5px;top:852px;width:1px;height:18px;background:#8a8a8a;"></div>
<svg class="r" style="left:1505.5px;top:851.5px;" width="18" height="18" viewBox="0 0 16 16"><path d="M8 1C12.5 1 15.5 3.8 15.5 7.2C15.5 10.6 12.5 13.2 8 13.2C7 13.2 6.2 13.1 5.4 12.9L1.5 15.5L3 11.6C1.4 10.5 0.5 9 0.5 7.2C0.5 3.8 3.5 1 8 1Z" fill="#333"/><text x="5.2" y="11" font-size="9.5" font-weight="700" font-family="Liberation Sans, sans-serif" fill="#fff">?</text></svg>
<div class="r" style="left:1528px;top:848px;width:1px;height:26px;background:#e2e2e2;"></div>
<div class="r" style="left:273px;top:875px;width:1629px;height:140px;background:#fff;border:1px solid #c5c7d9;box-sizing:border-box;"></div>
<div class="r" style="left:274px;top:876px;width:1628px;height:9px;background:#e1e1e1;"></div>
<div class="r" style="left:274px;top:885.5px;width:1628px;height:32px;background:#f0f0f0;"></div>
<div class="r" style="left:274px;top:885px;width:59px;height:129px;background:#e1e1e1;"></div>
<div class="r" style="left:333px;top:876px;width:1px;height:138px;background:#d0d0d0;"></div>
<div class="r" style="left:683px;top:876px;width:1px;height:138px;background:#d0d0d0;"></div>
<div class="r" style="left:763px;top:876px;width:1px;height:138px;background:#d0d0d0;"></div>
<div class="r" style="left:843px;top:876px;width:1px;height:138px;background:#d0d0d0;"></div>
<div class="r" style="left:1901.5px;top:876px;width:1px;height:138px;background:#d0d0d0;"></div>
<div class="r" style="left:274px;top:884.7px;width:1628px;height:1px;background:#f8f8f8;"></div>
<div class="r" style="left:274px;top:917px;width:1628px;height:1px;background:#c8c8c8;"></div>
<span class="t" style="left:479px;top:901.0px;height:16px;line-height:16px;letter-spacing:0.088px;">Description</span>
<span class="t" style="left:710px;top:901.0px;height:16px;line-height:16px;letter-spacing:-0.212px;">Value</span>
<span class="t" style="left:793.5px;top:901.0px;height:16px;line-height:16px;letter-spacing:0.262px;">Unit</span>
<span class="t" style="left:1358.5px;top:901.0px;height:16px;line-height:16px;letter-spacing:-0.209px;">Notes</span>
<div class="r" style="left:334px;top:918px;width:1567.5px;height:16px;background:#fdf9e9;"></div>
<div class="r" style="left:683px;top:918px;width:1px;height:16px;background:#d8d8d8;"></div>
<div class="r" style="left:763px;top:918px;width:1px;height:16px;background:#d8d8d8;"></div>
<div class="r" style="left:843px;top:918px;width:1px;height:16px;background:#d8d8d8;"></div>
<span class="t" style="left:338.5px;top:918.0px;height:16px;line-height:16px;letter-spacing:0.036px;word-spacing:-0.036px;">Maximum displacement in Y-direction</span>
<span class="t" style="left:744.28px;top:918.0px;height:16px;line-height:16px;letter-spacing:-0.427px;">0.0</span>
<span class="t" style="left:768.5px;top:918.0px;height:16px;line-height:16px;letter-spacing:-0.1px;">mm</span>
<span class="t" style="left:848.5px;top:918.0px;height:16px;line-height:16px;letter-spacing:-0.348px;word-spacing:0.348px;">FE node No. 4371: (21.947, -1.000, -13.582 m)</span>
<div class="r" style="left:334px;top:934px;width:1567.5px;height:16px;background:#fffdf7;"></div>
<div class="r" style="left:683px;top:934px;width:1px;height:16px;background:#d8d8d8;"></div>
<div class="r" style="left:763px;top:934px;width:1px;height:16px;background:#d8d8d8;"></div>
<div class="r" style="left:843px;top:934px;width:1px;height:16px;background:#d8d8d8;"></div>
<div class="r" style="left:334px;top:933.5px;width:1567.5px;height:1px;background:#d4d4d4;"></div>
<span class="t" style="left:338.5px;top:934.0px;height:16px;line-height:16px;letter-spacing:0.017px;word-spacing:-0.017px;">Maximum displacement in Z-direction</span>
<span class="t" style="left:738.400625px;top:934.0px;height:16px;line-height:16px;letter-spacing:-0.448px;">43.3</span>
<span class="t" style="left:768.5px;top:934.0px;height:16px;line-height:16px;letter-spacing:-0.1px;">mm</span>
<span class="t" style="left:848.5px;top:934.0px;height:16px;line-height:16px;letter-spacing:-0.362px;word-spacing:0.362px;">FE node No. 295: (20.000, 0.000, -13.582 m)</span>
<div class="r" style="left:334px;top:950px;width:1567.5px;height:16px;background:#fdf9e9;"></div>
<div class="r" style="left:683px;top:950px;width:1px;height:16px;background:#d8d8d8;"></div>
<div class="r" style="left:763px;top:950px;width:1px;height:16px;background:#d8d8d8;"></div>
<div class="r" style="left:843px;top:950px;width:1px;height:16px;background:#d8d8d8;"></div>
<div class="r" style="left:334px;top:949.5px;width:1567.5px;height:1px;background:#d4d4d4;"></div>
<span class="t" style="left:338.5px;top:950.0px;height:16px;line-height:16px;letter-spacing:-0.047px;word-spacing:0.047px;">Maximum vectorial displacement</span>
<span class="t" style="left:738.400625px;top:950.0px;height:16px;line-height:16px;letter-spacing:-0.448px;">43.4</span>
<span class="t" style="left:768.5px;top:950.0px;height:16px;line-height:16px;letter-spacing:-0.1px;">mm</span>
<span class="t" style="left:848.5px;top:950.0px;height:16px;line-height:16px;letter-spacing:-0.362px;word-spacing:0.362px;">FE node No. 295: (20.000, 0.000, -13.582 m)</span>
<div class="r" style="left:334px;top:966px;width:1567.5px;height:16px;background:#fffdf7;"></div>
<div class="r" style="left:683px;top:966px;width:1px;height:16px;background:#d8d8d8;"></div>
<div class="r" style="left:763px;top:966px;width:1px;height:16px;background:#d8d8d8;"></div>
<div class="r" style="left:843px;top:966px;width:1px;height:16px;background:#d8d8d8;"></div>
<div class="r" style="left:334px;top:965.5px;width:1567.5px;height:1px;background:#d4d4d4;"></div>
<span class="t" style="left:338.5px;top:966.0px;height:16px;line-height:16px;letter-spacing:0.019px;word-spacing:-0.019px;">Maximum rotation about X-axis</span>
<span class="t" style="left:744.28px;top:966.0px;height:16px;line-height:16px;letter-spacing:-0.427px;">0.0</span>
<span class="t" style="left:768.5px;top:966.0px;height:16px;line-height:16px;letter-spacing:-0.1px;">mrad</span>
<span class="t" style="left:848.5px;top:966.0px;height:16px;line-height:16px;letter-spacing:-0.347px;word-spacing:0.347px;">FE node No. 300: (23.407, -1.000, -13.582 m)</span>
<div class="r" style="left:334px;top:982px;width:1567.5px;height:16px;background:#fdf9e9;"></div>
<div class="r" style="left:683px;top:982px;width:1px;height:16px;background:#d8d8d8;"></div>
<div class="r" style="left:763px;top:982px;width:1px;height:16px;background:#d8d8d8;"></div>
<div class="r" style="left:843px;top:982px;width:1px;height:16px;background:#d8d8d8;"></div>
<div class="r" style="left:334px;top:981.5px;width:1567.5px;height:1px;background:#d4d4d4;"></div>
<span class="t" style="left:338.5px;top:982.0px;height:16px;line-height:16px;letter-spacing:0.048px;word-spacing:-0.048px;">Maximum rotation about Y-axis</span>
<span class="t" style="left:734.87875px;top:982.0px;height:16px;line-height:16px;letter-spacing:-0.419px;">-15.0</span>
<span class="t" style="left:768.5px;top:982.0px;height:16px;line-height:16px;letter-spacing:-0.1px;">mrad</span>
<span class="t" style="left:848.5px;top:982.0px;height:16px;line-height:16px;letter-spacing:-0.361px;word-spacing:0.361px;">FE node No. 34: (19.500, 0.000, -12.900 m)</span>
<div class="r" style="left:334px;top:998px;width:1567.5px;height:16px;background:#fffdf7;"></div>
<div class="r" style="left:683px;top:998px;width:1px;height:16px;background:#d8d8d8;"></div>
<div class="r" style="left:763px;top:998px;width:1px;height:16px;background:#d8d8d8;"></div>
<div class="r" style="left:843px;top:998px;width:1px;height:16px;background:#d8d8d8;"></div>
<div class="r" style="left:334px;top:997.5px;width:1567.5px;height:1px;background:#d4d4d4;"></div>
<span class="t" style="left:338.5px;top:998.0px;height:16px;line-height:16px;letter-spacing:0.043px;word-spacing:-0.043px;">Maximum rotation about Z-axis</span>
<span class="t" style="left:744.28px;top:998.0px;height:16px;line-height:16px;letter-spacing:-0.427px;">0.0</span>
<span class="t" style="left:768.5px;top:998.0px;height:16px;line-height:16px;letter-spacing:-0.1px;">mrad</span>
<span class="t" style="left:848.5px;top:998.0px;height:16px;line-height:16px;letter-spacing:-0.362px;word-spacing:0.362px;">FE node No. 295: (20.000, 0.000, -13.582 m)</span>
<div class="r" style="left:1902.5px;top:876px;width:16px;height:138px;background:#f0f0f0;"></div>
<svg class="r" style="left:1906px;top:881px;" width="9" height="6" viewBox="0 0 9 6"><path d="M0.7 5.3L4.5 1.2L8.3 5.3" fill="none" stroke="#444" stroke-width="1.3"/></svg>
<svg class="r" style="left:1906px;top:1003px;" width="9" height="6" viewBox="0 0 9 6"><path d="M0.7 0.7L4.5 4.8L8.3 0.7" fill="none" stroke="#444" stroke-width="1.3"/></svg>
<div class="r" style="left:1903.5px;top:933px;width:14px;height:18px;background:#cdcdcd;"></div>
<svg class="r" style="left:277.5px;top:1022px;" width="9" height="9" viewBox="0 0 9 9"><path d="M1 0.5V8.5" stroke="#8a8a8a" stroke-width="1.4"/><path d="M8 0.5V8.5L2.5 4.5Z" fill="#8a8a8a"/></svg>
<svg class="r" style="left:295.5px;top:1022px;" width="7" height="9" viewBox="0 0 7 9"><path d="M6.5 0.5V8.5L1 4.5Z" fill="#8a8a8a"/></svg>
<span class="t" style="left:321px;top:1019.5px;height:16px;line-height:16px;letter-spacing:-0.070px;word-spacing:0.070px;">1 of 1</span>
<svg class="r" style="left:368.5px;top:1022px;" width="7" height="9" viewBox="0 0 7 9"><path d="M0.5 0.5V8.5L6 4.5Z" fill="#8a8a8a"/></svg>
<svg class="r" style="left:384.5px;top:1022px;" width="9" height="9" viewBox="0 0 9 9"><path d="M8 0.5V8.5" stroke="#8a8a8a" stroke-width="1.4"/><path d="M1 0.5V8.5L6.5 4.5Z" fill="#8a8a8a"/></svg>
<div class="r" style="left:399px;top:1014.5px;width:63px;height:23.5px;background:#fff;border:1px solid #c5c7d9;border-top:1px solid #fff;box-sizing:border-box;"></div>
<span class="t" style="left:407.5px;top:1019.5px;height:16px;line-height:16px;letter-spacing:-0.529px;">Summary</span>
<div class="r" style="left:273px;top:1038px;width:1647px;height:1px;background:#e0e0e0;"></div>
<div class="r" style="left:0px;top:1039px;width:1920px;height:25px;background:#f5f5f5;"></div>
<div class="r" style="left:0px;top:1063.5px;width:1920px;height:16.5px;background:#e8e9f4;"></div>
<div class="r" style="left:1314.5px;top:1065px;width:1px;height:14px;background:#f6f6fb;"></div>
<div class="r" style="left:1420px;top:1065px;width:1px;height:14px;background:#f6f6fb;"></div>
<div class="r" style="left:1626.5px;top:1065px;width:1px;height:14px;background:#f6f6fb;"></div>
<div class="r" style="left:1692.5px;top:1065px;width:1px;height:14px;background:#f6f6fb;"></div>
<div class="r" style="left:1768.5px;top:1065px;width:1px;height:14px;background:#f6f6fb;"></div>
<div class="r" style="left:1844.5px;top:1065px;width:1px;height:14px;background:#f6f6fb;"></div>
<span class="t" style="left:1425.5px;top:1063.7px;height:16px;line-height:16px;letter-spacing:-0.764px;word-spacing:0.764px;">CS: Global XYZ</span>
<span class="t" style="left:1631px;top:1063.7px;height:16px;line-height:16px;letter-spacing:-0.625px;word-spacing:0.625px;">Plane: XZ</span>
<svg class="r" style="left:1367.0px;top:1043.5px;" width="16" height="16" viewBox="0 0 16 16"><rect x="0.0" y="4.0" width="1.2" height="1.2" fill="#555"/><rect x="0.0" y="6.4" width="1.2" height="1.2" fill="#555"/><rect x="0.0" y="8.8" width="1.2" height="1.2" fill="#555"/><rect x="0.0" y="11.2" width="1.2" height="1.2" fill="#555"/><rect x="0.0" y="13.6" width="1.2" height="1.2" fill="#555"/><rect x="2.4" y="4.0" width="1.2" height="1.2" fill="#555"/><rect x="2.4" y="6.4" width="1.2" height="1.2" fill="#555"/><rect x="2.4" y="8.8" width="1.2" height="1.2" fill="#555"/><rect x="2.4" y="11.2" width="1.2" height="1.2" fill="#555"/><rect x="2.4" y="13.6" width="1.2" height="1.2" fill="#555"/><rect x="4.8" y="4.0" width="1.2" height="1.2" fill="#555"/><rect x="4.8" y="6.4" width="1.2" height="1.2" fill="#555"/><rect x="4.8" y="8.8" width="1.2" height="1.2" fill="#555"/><rect x="4.8" y="11.2" width="1.2" height="1.2" fill="#555"/><rect x="4.8" y="13.6" width="1.2" height="1.2" fill="#555"/><rect x="7.199999999999999" y="4.0" width="1.2" height="1.2" fill="#555"/><rect x="7.199999999999999" y="6.4" width="1.2" height="1.2" fill="#555"/><rect x="7.199999999999999" y="8.8" width="1.2" height="1.2" fill="#555"/><rect x="7.199999999999999" y="11.2" width="1.2" height="1.2" fill="#555"/><rect x="7.199999999999999" y="13.6" width="1.2" height="1.2" fill="#555"/><rect x="9.6" y="4.0" width="1.2" height="1.2" fill="#555"/><rect x="9.6" y="6.4" width="1.2" height="1.2" fill="#555"/><rect x="9.6" y="8.8" width="1.2" height="1.2" fill="#555"/><rect x="9.6" y="11.2" width="1.2" height="1.2" fill="#555"/><rect x="9.6" y="13.6" width="1.2" height="1.2" fill="#555"/><rect x="12.0" y="4.0" width="1.2" height="1.2" fill="#555"/><rect x="12.0" y="6.4" width="1.2" height="1.2" fill="#555"/><rect x="12.0" y="8.8" width="1.2" height="1.2" fill="#555"/><rect x="12.0" y="11.2" width="1.2" height="1.2" fill="#555"/><rect x="12.0" y="13.6" width="1.2" height="1.2" fill="#555"/><ellipse cx="11" cy="4" rx="4" ry="2.6" fill="#fff" stroke="#33408f" stroke-width="1"/><circle cx="11" cy="4" r="1.5" fill="#33408f"/></svg>
<svg class="r" style="left:1398.0px;top:1043.5px;" width="16" height="16" viewBox="0 0 16 16"><rect x="2.0" y="6.0" width="1.2" height="1.2" fill="#555"/><rect x="2.0" y="8.4" width="1.2" height="1.2" fill="#555"/><rect x="2.0" y="10.8" width="1.2" height="1.2" fill="#555"/><rect x="2.0" y="13.2" width="1.2" height="1.2" fill="#555"/><rect x="4.4" y="6.0" width="1.2" height="1.2" fill="#555"/><rect x="4.4" y="8.4" width="1.2" height="1.2" fill="#555"/><rect x="4.4" y="10.8" width="1.2" height="1.2" fill="#555"/><rect x="4.4" y="13.2" width="1.2" height="1.2" fill="#555"/><rect x="6.8" y="6.0" width="1.2" height="1.2" fill="#555"/><rect x="6.8" y="8.4" width="1.2" height="1.2" fill="#555"/><rect x="6.8" y="10.8" width="1.2" height="1.2" fill="#555"/><rect x="6.8" y="13.2" width="1.2" height="1.2" fill="#555"/><rect x="9.2" y="6.0" width="1.2" height="1.2" fill="#555"/><rect x="9.2" y="8.4" width="1.2" height="1.2" fill="#555"/><rect x="9.2" y="10.8" width="1.2" height="1.2" fill="#555"/><rect x="9.2" y="13.2" width="1.2" height="1.2" fill="#555"/><rect x="11.6" y="6.0" width="1.2" height="1.2" fill="#555"/><rect x="11.6" y="8.4" width="1.2" height="1.2" fill="#555"/><rect x="11.6" y="10.8" width="1.2" height="1.2" fill="#555"/><rect x="11.6" y="13.2" width="1.2" height="1.2" fill="#555"/><rect x="7.5" y="0.5" width="8" height="5" fill="#fff" stroke="#2b3f9e" stroke-width="0.8"/><rect x="7.5" y="0.5" width="8" height="1.8" fill="#2b3f9e"/><path d="M3 0L4 2.3L6.5 2.6L4.6 4.2L5.2 6.6L3 5.3L0.8 6.6L1.4 4.2L-0.5 2.6L2 2.3Z" fill="#ffe600"/></svg>
<div class="r" style="left:1419px;top:1040px;width:23px;height:22px;background:#cce4f7;border:1px solid #90c8f6;box-sizing:border-box;"></div>
<svg class="r" style="left:1422.5px;top:1043.5px;" width="16" height="16" viewBox="0 0 16 16"><rect x="0.0" y="4.0" width="1.2" height="1.2" fill="#555"/><rect x="0.0" y="6.4" width="1.2" height="1.2" fill="#555"/><rect x="0.0" y="8.8" width="1.2" height="1.2" fill="#555"/><rect x="0.0" y="11.2" width="1.2" height="1.2" fill="#555"/><rect x="0.0" y="13.6" width="1.2" height="1.2" fill="#555"/><rect x="2.4" y="4.0" width="1.2" height="1.2" fill="#555"/><rect x="2.4" y="6.4" width="1.2" height="1.2" fill="#555"/><rect x="2.4" y="8.8" width="1.2" height="1.2" fill="#555"/><rect x="2.4" y="11.2" width="1.2" height="1.2" fill="#555"/><rect x="2.4" y="13.6" width="1.2" height="1.2" fill="#555"/><rect x="4.8" y="4.0" width="1.2" height="1.2" fill="#555"/><rect x="4.8" y="6.4" width="1.2" height="1.2" fill="#555"/><rect x="4.8" y="8.8" width="1.2" height="1.2" fill="#555"/><rect x="4.8" y="11.2" width="1.2" height="1.2" fill="#555"/><rect x="4.8" y="13.6" width="1.2" height="1.2" fill="#555"/><rect x="7.199999999999999" y="4.0" width="1.2" height="1.2" fill="#555"/><rect x="7.199999999999999" y="6.4" width="1.2" height="1.2" fill="#555"/><rect x="7.199999999999999" y="8.8" width="1.2" height="1.2" fill="#555"/><rect x="7.199999999999999" y="11.2" width="1.2" height="1.2" fill="#555"/><rect x="7.199999999999999" y="13.6" width="1.2" height="1.2" fill="#555"/><rect x="9.6" y="4.0" width="1.2" height="1.2" fill="#555"/><rect x="9.6" y="6.4" width="1.2" height="1.2" fill="#555"/><rect x="9.6" y="8.8" width="1.2" height="1.2" fill="#555"/><rect x="9.6" y="11.2" width="1.2" height="1.2" fill="#555"/><rect x="9.6" y="13.6" width="1.2" height="1.2" fill="#555"/><rect x="12.0" y="4.0" width="1.2" height="1.2" fill="#555"/><rect x="12.0" y="6.4" width="1.2" height="1.2" fill="#555"/><rect x="12.0" y="8.8" width="1.2" height="1.2" fill="#555"/><rect x="12.0" y="11.2" width="1.2" height="1.2" fill="#555"/><rect x="12.0" y="13.6" width="1.2" height="1.2" fill="#555"/><ellipse cx="11" cy="4" rx="4" ry="2.6" fill="#fff" stroke="#33408f" stroke-width="1"/><circle cx="11" cy="4" r="1.5" fill="#33408f"/></svg>
<svg class="r" style="left:1452.0px;top:1043.5px;" width="16" height="16" viewBox="0 0 16 16"><rect x="2.5" y="4.5" width="11" height="10" fill="none" stroke="#555" stroke-width="0.8" stroke-dasharray="1.2 1.2"/><path d="M5 0L6.2 2.8L9 3.2L6.8 5L7.5 8L5 6.4L2.5 8L3.2 5L1 3.2L3.8 2.8Z" fill="#ffe600" stroke="#b8a000" stroke-width="0.3"/></svg>
<div class="r" style="left:1474px;top:1040px;width:23px;height:22px;background:#cce4f7;border:1px solid #90c8f6;box-sizing:border-box;"></div>
<svg class="r" style="left:1477.5px;top:1043.5px;" width="16" height="16" viewBox="0 0 16 16"><rect x="2.5" y="4.5" width="11" height="10" fill="none" stroke="#555" stroke-width="0.8" stroke-dasharray="1.2 1.2"/><rect x="1.5" y="3.5" width="2" height="2" fill="#333"/><rect x="12.5" y="13.5" width="2" height="2" fill="#333"/><ellipse cx="11" cy="4" rx="4" ry="2.6" fill="#fff" stroke="#33408f" stroke-width="1"/><circle cx="11" cy="4" r="1.5" fill="#33408f"/></svg>
<div class="r" style="left:1511px;top:1040px;width:23px;height:22px;background:#cce4f7;border:1px solid #90c8f6;box-sizing:border-box;"></div>
<svg class="r" style="left:1514.5px;top:1043.5px;" width="16" height="16" viewBox="0 0 16 16"><rect x="0.0" y="2.0" width="1.2" height="1.2" fill="#555"/><rect x="0.0" y="4.4" width="1.2" height="1.2" fill="#555"/><rect x="0.0" y="6.8" width="1.2" height="1.2" fill="#555"/><rect x="0.0" y="9.2" width="1.2" height="1.2" fill="#555"/><rect x="0.0" y="11.6" width="1.2" height="1.2" fill="#555"/><rect x="0.0" y="14.0" width="1.2" height="1.2" fill="#555"/><rect x="2.4" y="2.0" width="1.2" height="1.2" fill="#555"/><rect x="2.4" y="4.4" width="1.2" height="1.2" fill="#555"/><rect x="2.4" y="6.8" width="1.2" height="1.2" fill="#555"/><rect x="2.4" y="9.2" width="1.2" height="1.2" fill="#555"/><rect x="2.4" y="11.6" width="1.2" height="1.2" fill="#555"/><rect x="2.4" y="14.0" width="1.2" height="1.2" fill="#555"/><rect x="4.8" y="2.0" width="1.2" height="1.2" fill="#555"/><rect x="4.8" y="4.4" width="1.2" height="1.2" fill="#555"/><rect x="4.8" y="6.8" width="1.2" height="1.2" fill="#555"/><rect x="4.8" y="9.2" width="1.2" height="1.2" fill="#555"/><rect x="4.8" y="11.6" width="1.2" height="1.2" fill="#555"/><rect x="4.8" y="14.0" width="1.2" height="1.2" fill="#555"/><rect x="7.199999999999999" y="2.0" width="1.2" height="1.2" fill="#555"/><rect x="7.199999999999999" y="4.4" width="1.2" height="1.2" fill="#555"/><rect x="7.199999999999999" y="6.8" width="1.2" height="1.2" fill="#555"/><rect x="7.199999999999999" y="9.2" width="1.2" height="1.2" fill="#555"/><rect x="7.199999999999999" y="11.6" width="1.2" height="1.2" fill="#555"/><rect x="7.199999999999999" y="14.0" width="1.2" height="1.2" fill="#555"/><rect x="9.6" y="2.0" width="1.2" height="1.2" fill="#555"/><rect x="9.6" y="4.4" width="1.2" height="1.2" fill="#555"/><rect x="9.6" y="6.8" width="1.2" height="1.2" fill="#555"/><rect x="9.6" y="9.2" width="1.2" height="1.2" fill="#555"/><rect x="9.6" y="11.6" width="1.2" height="1.2" fill="#555"/><rect x="9.6" y="14.0" width="1.2" height="1.2" fill="#555"/><rect x="12.0" y="2.0" width="1.2" height="1.2" fill="#555"/><rect x="12.0" y="4.4" width="1.2" height="1.2" fill="#555"/><rect x="12.0" y="6.8" width="1.2" height="1.2" fill="#555"/><rect x="12.0" y="9.2" width="1.2" height="1.2" fill="#555"/><rect x="12.0" y="11.6" width="1.2" height="1.2" fill="#555"/><rect x="12.0" y="14.0" width="1.2" height="1.2" fill="#555"/><path d="M8 8V5A3.5 3.5 0 0 1 15 5V8H13V5A1.5 1.5 0 0 0 10 5V8Z" fill="#777"/><rect x="8" y="7" width="2" height="2" fill="#d22"/><rect x="13" y="7" width="2" height="2" fill="#2a55b8"/></svg>
<div class="r" style="left:1535px;top:1040px;width:23px;height:22px;background:#cce4f7;border:1px solid #90c8f6;box-sizing:border-box;"></div>
<svg class="r" style="left:1538.5px;top:1043.5px;" width="16" height="16" viewBox="0 0 16 16"><path d="M2 14V8A6 6 0 0 1 14 8V14H10.5V8A2.5 2.5 0 0 0 5.5 8V14Z" fill="#777"/><rect x="2" y="11.5" width="3.5" height="3" fill="#d22"/><rect x="10.5" y="11.5" width="3.5" height="3" fill="#2a55b8"/></svg>
<div class="r" style="left:1559.3px;top:1040px;width:23px;height:22px;background:#cce4f7;border:1px solid #90c8f6;box-sizing:border-box;"></div>
<svg class="r" style="left:1563.0px;top:1043.5px;" width="16" height="16" viewBox="0 0 16 16"><rect x="2.5" y="2.5" width="11" height="11" fill="#fff" stroke="#222" stroke-width="1.3"/></svg>
<div class="r" style="left:1583.3px;top:1040px;width:23px;height:22px;background:#cce4f7;border:1px solid #90c8f6;box-sizing:border-box;"></div>
<svg class="r" style="left:1587.0px;top:1043.5px;" width="16" height="16" viewBox="0 0 16 16"><circle cx="8" cy="8" r="5.5" fill="none" stroke="#222" stroke-width="1.3"/><path d="M3 3L13 13M13 3L3 13" stroke="#222" stroke-width="1.2"/></svg>
<div class="r" style="left:1607.3px;top:1040px;width:23px;height:22px;background:#cce4f7;border:1px solid #90c8f6;box-sizing:border-box;"></div>
<svg class="r" style="left:1611.0px;top:1043.5px;" width="16" height="16" viewBox="0 0 16 16"><rect x="3" y="3" width="10" height="10" fill="none" stroke="#222" stroke-width="1.3"/><path d="M3 3L13 13M13 3L3 13" stroke="#222" stroke-width="1.2"/></svg>
<div class="r" style="left:1631.3px;top:1040px;width:23px;height:22px;background:#cce4f7;border:1px solid #90c8f6;box-sizing:border-box;"></div>
<svg class="r" style="left:1634.5px;top:1043.5px;" width="16" height="16" viewBox="0 0 16 16"><path d="M4 2V13H14M4 8H9V13" fill="none" stroke="#222" stroke-width="1.4"/></svg>
<svg class="r" style="left:1658.0px;top:1043.5px;" width="16" height="16" viewBox="0 0 16 16"><path d="M3 13L13 3" stroke="#222" stroke-width="1.1"/><path d="M7 9L9 7" stroke="#222" stroke-width="2.2"/></svg>
<svg class="r" style="left:1682.0px;top:1043.5px;" width="16" height="16" viewBox="0 0 16 16"><path d="M2 12L11 3M6 14L15 5" stroke="#222" stroke-width="1.2"/></svg>
<svg class="r" style="left:1706.5px;top:1043.5px;" width="16" height="16" viewBox="0 0 16 16"><circle cx="8" cy="9.5" r="4.5" fill="none" stroke="#222" stroke-width="1.3"/><path d="M2 3.5H14" stroke="#222" stroke-width="1.3"/></svg>
<svg class="r" style="left:1730.5px;top:1043.5px;" width="16" height="16" viewBox="0 0 16 16"><circle cx="8" cy="8" r="6" fill="none" stroke="#222" stroke-width="1.2"/><circle cx="8" cy="8" r="4" fill="none" stroke="#222" stroke-width="0.9"/><path d="M2 8L8 2L14 8L8 14Z" fill="none" stroke="#222" stroke-width="0.7"/></svg>
<svg class="r" style="left:1754.5px;top:1043.5px;" width="16" height="16" viewBox="0 0 16 16"><text x="1" y="9" font-size="8" font-family="Liberation Sans, sans-serif" fill="#222">1</text><path d="M3 13L10 3" stroke="#222" stroke-width="0.9"/><text x="8" y="15" font-size="8" font-family="Liberation Sans, sans-serif" fill="#222">n</text></svg>
<svg class="r" style="left:1778.5px;top:1043.5px;" width="16" height="16" viewBox="0 0 16 16"><path d="M2 14L13 3M5 5L11 11M11 5L5 11" stroke="#222" stroke-width="1"/><path d="M2 6L6 8" stroke="#222" stroke-width="0.8"/></svg>
<svg class="r" style="left:1802.0px;top:1043.5px;" width="16" height="16" viewBox="0 0 16 16"><path d="M5 4L13 12M13 4L2 14" stroke="#222" stroke-width="1"/><path d="M1 5L5 7" stroke="#222" stroke-width="0.8" stroke-dasharray="1 1"/></svg>
<svg class="r" style="left:1826.0px;top:1043.5px;" width="16" height="16" viewBox="0 0 16 16"><rect x="2" y="12" width="1.3" height="1.3" fill="#222"/><rect x="5" y="8" width="1.3" height="1.3" fill="#222"/><rect x="8" y="4" width="1.3" height="1.3" fill="#222"/><rect x="11" y="9" width="1.3" height="1.3" fill="#222"/><rect x="13" y="3" width="1.3" height="1.3" fill="#222"/><rect x="7" y="12" width="1.3" height="1.3" fill="#222"/><rect x="12" y="13" width="1.3" height="1.3" fill="#222"/><rect x="4" y="4" width="1.3" height="1.3" fill="#222"/><rect x="9" y="8" width="1.3" height="1.3" fill="#222"/></svg>
<div class="r" style="left:1847.3px;top:1040px;width:23px;height:22px;background:#cce4f7;border:1px solid #90c8f6;box-sizing:border-box;"></div>
<svg class="r" style="left:1851.0px;top:1043.5px;" width="16" height="16" viewBox="0 0 16 16"><path d="M2 2L14 14M14 2L2 14" stroke="#445" stroke-width="0.9"/></svg>
<div class="r" style="left:1871.3px;top:1040px;width:23px;height:22px;background:#cce4f7;border:1px solid #90c8f6;box-sizing:border-box;"></div>
<svg class="r" style="left:1875.0px;top:1043.5px;" width="16" height="16" viewBox="0 0 16 16"><path d="M2 12L5 8H14L11 12Z M2 9L5 5H14L11 9Z" fill="#dde" stroke="#556" stroke-width="0.9"/></svg>
<div class="r" style="left:1895.3px;top:1040px;width:23.5px;height:22px;background:#cce4f7;border:1px solid #90c8f6;box-sizing:border-box;"></div>
<svg class="r" style="left:1899.0px;top:1043.5px;" width="16" height="16" viewBox="0 0 16 16"><rect x="2.0" y="2.0" width="1.2" height="1.2" fill="#334"/><rect x="2.0" y="4.4" width="1.2" height="1.2" fill="#334"/><rect x="2.0" y="6.8" width="1.2" height="1.2" fill="#334"/><rect x="2.0" y="9.2" width="1.2" height="1.2" fill="#334"/><rect x="2.0" y="11.6" width="1.2" height="1.2" fill="#334"/><rect x="2.0" y="14.0" width="1.2" height="1.2" fill="#334"/><rect x="4.4" y="2.0" width="1.2" height="1.2" fill="#334"/><rect x="4.4" y="4.4" width="1.2" height="1.2" fill="#334"/><rect x="4.4" y="6.8" width="1.2" height="1.2" fill="#334"/><rect x="4.4" y="9.2" width="1.2" height="1.2" fill="#334"/><rect x="4.4" y="11.6" width="1.2" height="1.2" fill="#334"/><rect x="4.4" y="14.0" width="1.2" height="1.2" fill="#334"/><rect x="6.8" y="2.0" width="1.2" height="1.2" fill="#334"/><rect x="6.8" y="4.4" width="1.2" height="1.2" fill="#334"/><rect x="6.8" y="6.8" width="1.2" height="1.2" fill="#334"/><rect x="6.8" y="9.2" width="1.2" height="1.2" fill="#334"/><rect x="6.8" y="11.6" width="1.2" height="1.2" fill="#334"/><rect x="6.8" y="14.0" width="1.2" height="1.2" fill="#334"/><rect x="9.2" y="2.0" width="1.2" height="1.2" fill="#334"/><rect x="9.2" y="4.4" width="1.2" height="1.2" fill="#334"/><rect x="9.2" y="6.8" width="1.2" height="1.2" fill="#334"/><rect x="9.2" y="9.2" width="1.2" height="1.2" fill="#334"/><rect x="9.2" y="11.6" width="1.2" height="1.2" fill="#334"/><rect x="9.2" y="14.0" width="1.2" height="1.2" fill="#334"/><rect x="11.6" y="2.0" width="1.2" height="1.2" fill="#334"/><rect x="11.6" y="4.4" width="1.2" height="1.2" fill="#334"/><rect x="11.6" y="6.8" width="1.2" height="1.2" fill="#334"/><rect x="11.6" y="9.2" width="1.2" height="1.2" fill="#334"/><rect x="11.6" y="11.6" width="1.2" height="1.2" fill="#334"/><rect x="11.6" y="14.0" width="1.2" height="1.2" fill="#334"/><rect x="14.0" y="2.0" width="1.2" height="1.2" fill="#334"/><rect x="14.0" y="4.4" width="1.2" height="1.2" fill="#334"/><rect x="14.0" y="6.8" width="1.2" height="1.2" fill="#334"/><rect x="14.0" y="9.2" width="1.2" height="1.2" fill="#334"/><rect x="14.0" y="11.6" width="1.2" height="1.2" fill="#334"/><rect x="14.0" y="14.0" width="1.2" height="1.2" fill="#334"/><path d="M8.6 1V15M1 8.6H15" stroke="#334" stroke-width="0.7"/></svg>
</body></html>
